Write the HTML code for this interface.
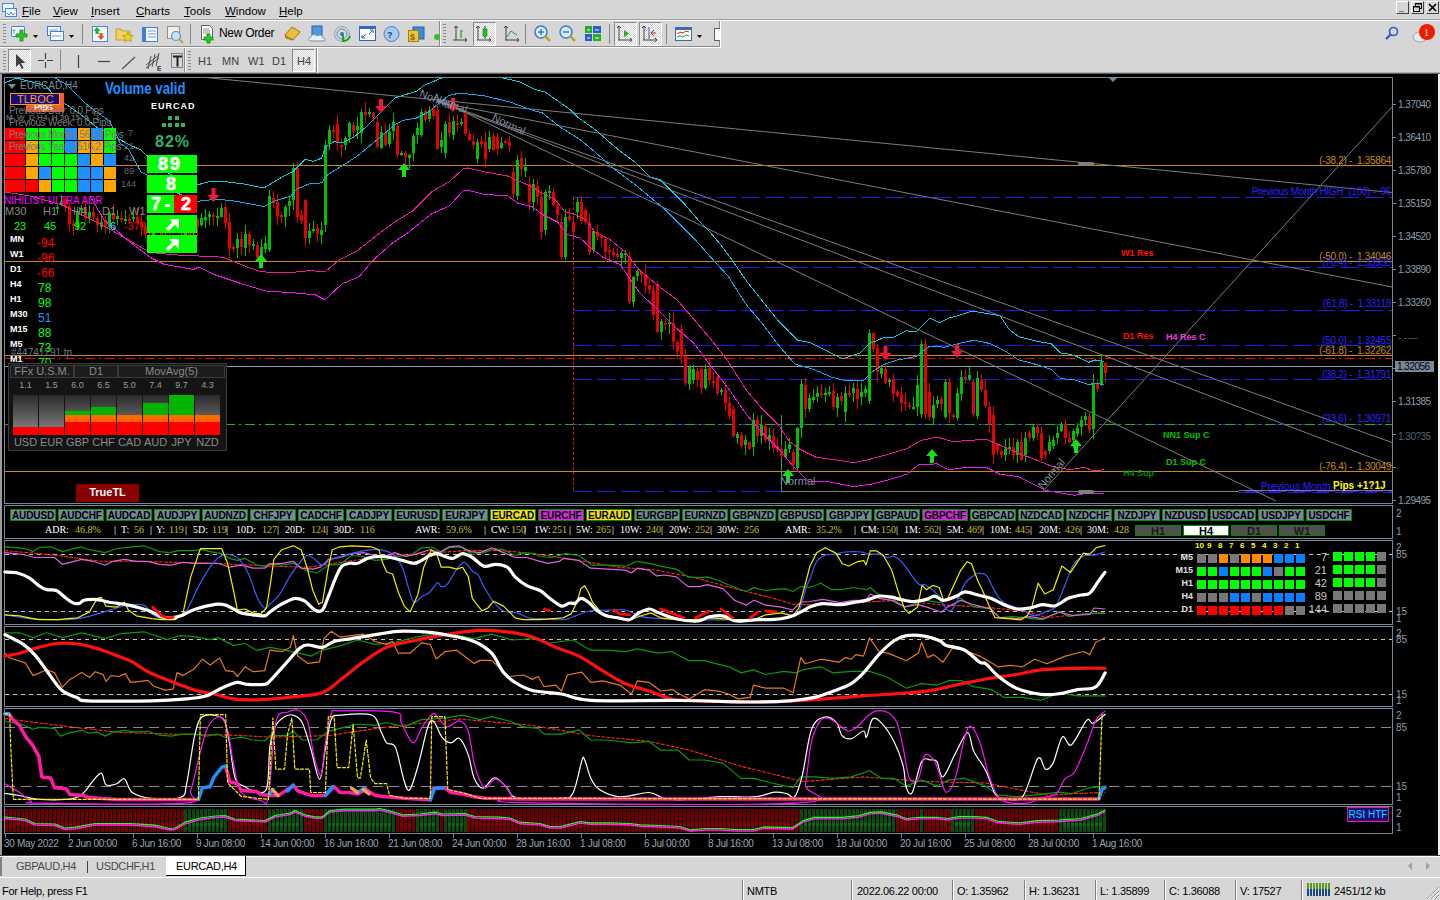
<!DOCTYPE html>
<html><head><meta charset="utf-8"><style>
*{margin:0;padding:0}
html,body{width:1440px;height:900px;overflow:hidden;background:#d6d6d6;position:relative;font-family:"Liberation Sans",sans-serif}
.mt{position:absolute;font-size:11.5px;line-height:14px;color:#000;white-space:nowrap}
.st{position:absolute;font-size:11px;line-height:14px;white-space:nowrap;letter-spacing:-0.3px}
.t{position:absolute;white-space:nowrap;line-height:1}
</style></head>
<body>
<div style="position:absolute;left:0;top:0;width:1440px;height:19px;background:#d6d6d6"></div>
<div style="position:absolute;left:0;top:19px;width:1440px;height:1px;background:#a0a0a0"></div>
<div style="position:absolute;left:0;top:20px;width:1440px;height:1px;background:#ffffff"></div>
<svg style="position:absolute;left:1px;top:2px" width="17" height="16"><rect x="1.5" y="1.5" width="11" height="8" fill="#eaf2fb" stroke="#4a8ad8"/><rect x="4.5" y="6.5" width="11" height="8" fill="#eaf2fb" stroke="#4a8ad8"/><path d="M6 11 l2 2 l2 -3 l2 3 l2 -2" stroke="#4a8ad8" fill="none"/></svg>
<div class="mt" style="left:22px;top:4px"><u>F</u>ile</div>
<div class="mt" style="left:53px;top:4px"><u>V</u>iew</div>
<div class="mt" style="left:91px;top:4px"><u>I</u>nsert</div>
<div class="mt" style="left:136px;top:4px"><u>C</u>harts</div>
<div class="mt" style="left:184px;top:4px"><u>T</u>ools</div>
<div class="mt" style="left:225px;top:4px"><u>W</u>indow</div>
<div class="mt" style="left:279px;top:4px"><u>H</u>elp</div>
<div style="position:absolute;left:1396px;top:1px;width:13px;height:13px;background:#d6d6d6;border:1px solid #404040;border-top-color:#fff;border-left-color:#fff;box-sizing:border-box"></div>
<div style="position:absolute;left:1411px;top:1px;width:13px;height:13px;background:#d6d6d6;border:1px solid #404040;border-top-color:#fff;border-left-color:#fff;box-sizing:border-box"></div>
<div style="position:absolute;left:1426px;top:1px;width:13px;height:13px;background:#d6d6d6;border:1px solid #404040;border-top-color:#fff;border-left-color:#fff;box-sizing:border-box"></div>
<div style="position:absolute;left:1399px;top:11px;width:5px;height:1px;background:#808080"></div>
<svg style="position:absolute;left:1411px;top:1px" width="13" height="13"><rect x="4.5" y="2.5" width="6" height="5" fill="none" stroke="#000"/><rect x="2.5" y="5.5" width="6" height="5" fill="#d6d6d6" stroke="#000"/><line x1="4" y1="3" x2="11" y2="3" stroke="#000"/><line x1="2" y1="6" x2="9" y2="6" stroke="#000"/></svg>
<svg style="position:absolute;left:1426px;top:1px" width="13" height="13"><path d="M3 3 L10 10 M10 3 L3 10" stroke="#000" stroke-width="1.6"/></svg>
<div style="position:absolute;left:0;top:21px;width:1440px;height:53px;background:#d6d6d6"></div>
<div style="position:absolute;left:0;top:46px;width:719px;height:1px;background:#8a8a8a"></div>
<div style="position:absolute;left:0;top:47px;width:720px;height:1px;background:#ffffff"></div>
<div style="position:absolute;left:0;top:72px;width:1440px;height:1px;background:#b0b0b0"></div>
<div style="position:absolute;left:0;top:73px;width:1440px;height:1px;background:#606060"></div>
<div style="position:absolute;left:719px;top:21px;width:1px;height:26px;background:#8a8a8a"></div>
<div style="position:absolute;left:720px;top:21px;width:1px;height:27px;background:#fff"></div>
<div style="position:absolute;left:316px;top:48px;width:1px;height:25px;background:#8a8a8a"></div>
<div style="position:absolute;left:317px;top:48px;width:1px;height:25px;background:#fff"></div>
<div style="position:absolute;left:439px;top:21px;width:1px;height:25px;background:#8a8a8a"></div>
<div style="position:absolute;left:440px;top:21px;width:1px;height:25px;background:#fff"></div>
<div style="position:absolute;left:184px;top:48px;width:1px;height:24px;background:#8a8a8a"></div>
<div style="position:absolute;left:185px;top:48px;width:1px;height:24px;background:#fff"></div>
<div style="position:absolute;left:3px;top:24px;width:3px;height:1px;background:#8c8c8c"></div>
<div style="position:absolute;left:3px;top:27px;width:3px;height:1px;background:#8c8c8c"></div>
<div style="position:absolute;left:3px;top:30px;width:3px;height:1px;background:#8c8c8c"></div>
<div style="position:absolute;left:3px;top:33px;width:3px;height:1px;background:#8c8c8c"></div>
<div style="position:absolute;left:3px;top:36px;width:3px;height:1px;background:#8c8c8c"></div>
<div style="position:absolute;left:3px;top:39px;width:3px;height:1px;background:#8c8c8c"></div>
<div style="position:absolute;left:3px;top:42px;width:3px;height:1px;background:#8c8c8c"></div>
<div style="position:absolute;left:443px;top:24px;width:3px;height:1px;background:#8c8c8c"></div>
<div style="position:absolute;left:443px;top:27px;width:3px;height:1px;background:#8c8c8c"></div>
<div style="position:absolute;left:443px;top:30px;width:3px;height:1px;background:#8c8c8c"></div>
<div style="position:absolute;left:443px;top:33px;width:3px;height:1px;background:#8c8c8c"></div>
<div style="position:absolute;left:443px;top:36px;width:3px;height:1px;background:#8c8c8c"></div>
<div style="position:absolute;left:443px;top:39px;width:3px;height:1px;background:#8c8c8c"></div>
<div style="position:absolute;left:443px;top:42px;width:3px;height:1px;background:#8c8c8c"></div>
<div style="position:absolute;left:3px;top:51px;width:3px;height:1px;background:#8c8c8c"></div>
<div style="position:absolute;left:3px;top:54px;width:3px;height:1px;background:#8c8c8c"></div>
<div style="position:absolute;left:3px;top:57px;width:3px;height:1px;background:#8c8c8c"></div>
<div style="position:absolute;left:3px;top:60px;width:3px;height:1px;background:#8c8c8c"></div>
<div style="position:absolute;left:3px;top:63px;width:3px;height:1px;background:#8c8c8c"></div>
<div style="position:absolute;left:3px;top:66px;width:3px;height:1px;background:#8c8c8c"></div>
<div style="position:absolute;left:3px;top:69px;width:3px;height:1px;background:#8c8c8c"></div>
<div style="position:absolute;left:188px;top:51px;width:3px;height:1px;background:#8c8c8c"></div>
<div style="position:absolute;left:188px;top:54px;width:3px;height:1px;background:#8c8c8c"></div>
<div style="position:absolute;left:188px;top:57px;width:3px;height:1px;background:#8c8c8c"></div>
<div style="position:absolute;left:188px;top:60px;width:3px;height:1px;background:#8c8c8c"></div>
<div style="position:absolute;left:188px;top:63px;width:3px;height:1px;background:#8c8c8c"></div>
<div style="position:absolute;left:188px;top:66px;width:3px;height:1px;background:#8c8c8c"></div>
<div style="position:absolute;left:188px;top:69px;width:3px;height:1px;background:#8c8c8c"></div>
<div style="position:absolute;left:82px;top:24px;width:1px;height:20px;background:#888"></div>
<div style="position:absolute;left:190px;top:24px;width:1px;height:20px;background:#888"></div>
<div style="position:absolute;left:525px;top:24px;width:1px;height:20px;background:#888"></div>
<div style="position:absolute;left:609px;top:24px;width:1px;height:20px;background:#888"></div>
<div style="position:absolute;left:666px;top:24px;width:1px;height:20px;background:#888"></div>
<div style="position:absolute;left:60px;top:50px;width:1px;height:20px;background:#888"></div>
<div style="position:absolute;left:473px;top:22px;width:23px;height:24px;box-sizing:border-box;border:1px solid #fff;border-top-color:#8a8a8a;border-left-color:#8a8a8a;background:repeating-conic-gradient(#d4d4d4 0 25%,#fafafa 0 50%) 0 0/2px 2px"></div>
<div style="position:absolute;left:614px;top:22px;width:23px;height:24px;box-sizing:border-box;border:1px solid #fff;border-top-color:#8a8a8a;border-left-color:#8a8a8a;background:repeating-conic-gradient(#d4d4d4 0 25%,#fafafa 0 50%) 0 0/2px 2px"></div>
<div style="position:absolute;left:639px;top:22px;width:23px;height:24px;box-sizing:border-box;border:1px solid #fff;border-top-color:#8a8a8a;border-left-color:#8a8a8a;background:repeating-conic-gradient(#d4d4d4 0 25%,#fafafa 0 50%) 0 0/2px 2px"></div>
<div style="position:absolute;left:8px;top:49px;width:23px;height:23px;box-sizing:border-box;border:1px solid #fff;border-top-color:#8a8a8a;border-left-color:#8a8a8a;background:repeating-conic-gradient(#d4d4d4 0 25%,#fafafa 0 50%) 0 0/2px 2px"></div>
<div style="position:absolute;left:292px;top:49px;width:23px;height:23px;box-sizing:border-box;border:1px solid #fff;border-top-color:#8a8a8a;border-left-color:#8a8a8a;background:repeating-conic-gradient(#d4d4d4 0 25%,#fafafa 0 50%) 0 0/2px 2px"></div>

<svg style="position:absolute;left:0;top:21px" width="720" height="26">
 <!-- new chart -->
 <rect x="11.5" y="5.5" width="13" height="10" rx="1" fill="#f4f8fd" stroke="#3d7fd0"/>
 <path d="M14 8v5 M12.5 9.5h3" stroke="#7a9cc0"/>
 <path d="M20 9h3v4h4v3h-4v4h-3v-4h-4v-3h4z" fill="#22cc22" stroke="#118811" stroke-width="0.8"/>
 <path d="M33 14h5l-2.5 3z" fill="#000"/>
 <!-- profiles -->
 <rect x="47.5" y="5.5" width="13" height="9" fill="#f4f8fd" stroke="#3d7fd0"/>
 <rect x="50.5" y="10.5" width="13" height="9" fill="#f4f8fd" stroke="#3d7fd0"/>
 <path d="M50 9h8 M52 15h9" stroke="#7a9cc0"/>
 <path d="M69 14h5l-2.5 3z" fill="#000"/>
 <!-- market watch -->
 <rect x="92.5" y="5.5" width="15" height="15" fill="#f4f8fd" stroke="#4a8ad8"/>
 <path d="M97 6l3.5 4h-2v3h-3v-3h-2z" fill="#20b020"/>
 <path d="M101 19l-3.5-4h2v-3h3v3h2z" fill="#e85020"/>
 <!-- folder star -->
 <path d="M116 8h5l1 2h8v9h-14z" fill="#f0d060" stroke="#c0a030"/>
 <path d="M128 11l1.6 3.4 3.6.4-2.7 2.4.8 3.6-3.3-1.9-3.3 1.9.8-3.6-2.7-2.4 3.6-.4z" fill="#f8d020" stroke="#b08810" stroke-width="0.7"/>
 <!-- navigator -->
 <rect x="142.5" y="6.5" width="15" height="14" fill="#f4f8fd" stroke="#3d7fd0"/>
 <rect x="143" y="7" width="3" height="13" fill="#3d7fd0"/>
 <path d="M148 10h8 M148 13h8 M148 16h8" stroke="#7a9cc0"/>
 <!-- terminal search -->
 <rect x="167.5" y="5.5" width="12" height="12" fill="#f0f0e8" stroke="#a09070"/>
 <circle cx="176" cy="15" r="4.5" fill="#c8e0f8" stroke="#4a8ad8" stroke-width="1.2"/>
 <path d="M179 18l4 4" stroke="#c0a030" stroke-width="2"/>
 <!-- new order -->
 <path d="M201.5 4.5h8l3 3v11h-11z" fill="#fff" stroke="#606060"/>
 <path d="M203 8h6 M203 10h7 M203 12h7" stroke="#909090"/>
 <path d="M207 13h3v3h3v3h-3v3h-3v-3h-3v-3h3z" fill="#22cc22" stroke="#118811" stroke-width="0.8"/>
 <!-- metaeditor -->
 <path d="M285 14l7-8 8 5-7 8z" fill="#e8c040" stroke="#a07010"/>
 <path d="M285 14l1 3 7 2" stroke="#a07010" fill="#c89820"/>
 <!-- cloud -->
 <rect x="312" y="5" width="10" height="10" fill="#4a9ae0" stroke="#2060b0"/>
 <path d="M311 20c-3 0-3-4 0-4c0-3 5-3 6-1c2-2 6-1 6 2c3 0 3 3 0 3z" fill="#e8f0f8" stroke="#7090b0"/>
 <!-- signal -->
 <circle cx="342" cy="13" r="7.5" fill="none" stroke="#80a8d0"/>
 <circle cx="342" cy="13" r="5" fill="none" stroke="#5a90c8"/>
 <circle cx="342" cy="13" r="2" fill="#2a70c0"/>
 <path d="M343 14v6c3 0 6-2 7-5" fill="none" stroke="#20a020" stroke-width="2"/>
 <!-- expand -->
 <rect x="359.5" y="5.5" width="16" height="14" fill="#fff" stroke="#2a6ac0"/>
 <rect x="360" y="6" width="15" height="2" fill="#2a6ac0"/>
 <path d="M362 17l4-4 M362 17h3 M362 17v-3 M373 9l-4 4 M373 9h-3 M373 9v3" stroke="#2a6ac0"/>
 <!-- help -->
 <circle cx="391.5" cy="13" r="7.5" fill="#a8c8f0" stroke="#4a80c0"/>
 <text x="387" y="17" font-family="Liberation Sans" font-size="9" font-weight="bold" fill="#1a3a80">?</text>
 <!-- dollar -->
 <rect x="413" y="6" width="11" height="12" fill="#3a8ae0" stroke="#2060b0"/>
 <rect x="408.5" y="9.5" width="10" height="11" fill="#f0c830" stroke="#a08010"/>
 <text x="410" y="19" font-family="Liberation Sans" font-size="9" font-weight="bold" fill="#806010">$</text>
 <circle cx="437" cy="16" r="3" fill="#30c030"/>
 <!-- bar chart -->
 <path d="M456 5v14 M454 7l2-2 2 2 M453 19h14 M465 17l2 2-2 2" stroke="#404040" fill="none"/>
 <path d="M461 9v8 M461 10h2" stroke="#20a020" stroke-width="1.2"/>
 <!-- candles -->
 <path d="M478 5v14 M476 7l2-2 2 2 M477 19h14 M489 17l2 2-2 2" stroke="#404040" fill="none"/>
 <path d="M485 5v13" stroke="#303030"/><rect x="483" y="8" width="4" height="7" fill="#20c020" stroke="#108010" stroke-width="0.6"/>
 <!-- line chart -->
 <path d="M506 5v14 M504 7l2-2 2 2 M505 19h14 M517 17l2 2-2 2" stroke="#404040" fill="none"/>
 <path d="M507 16l4-6 3 2 3 2" stroke="#20a020" fill="none"/>
 <!-- zoom in/out -->
 <circle cx="541" cy="11" r="6" fill="#d8ecfc" stroke="#3a7ad0" stroke-width="1.5"/>
 <path d="M538 11h6 M541 8v6" stroke="#3a7ad0" stroke-width="1.5"/>
 <path d="M545 15l5 5" stroke="#c0a030" stroke-width="2.5"/>
 <circle cx="566" cy="11" r="6" fill="#d8ecfc" stroke="#3a7ad0" stroke-width="1.5"/>
 <path d="M563 11h6" stroke="#3a7ad0" stroke-width="1.5"/>
 <path d="M570 15l5 5" stroke="#c0a030" stroke-width="2.5"/>
 <!-- tile -->
 <rect x="585" y="5" width="7" height="7" fill="#20b020"/><rect x="593" y="5" width="8" height="7" fill="#2a5ad0"/>
 <rect x="585" y="13" width="7" height="7" fill="#2a5ad0"/><rect x="593" y="13" width="8" height="7" fill="#20b020"/>
 <path d="M587 9h3 M595 9h4 M587 17h3 M595 17h4" stroke="#fff"/>
 <!-- autoscroll -->
 <path d="M619 5v14 M617 7l2-2 2 2 M618 19h14 M630 17l2 2-2 2" stroke="#404040" fill="none"/>
 <path d="M624 9v7l5-3.5z" fill="#20b020"/>
 <path d="M644 5v14 M642 7l2-2 2 2 M643 19h14 M655 17l2 2-2 2" stroke="#404040" fill="none"/>
 <path d="M649 6v12" stroke="#2a5ad0"/><path d="M651 12h5 M651 12l3-3 M651 12l3 3" stroke="#d02020"/>
 <!-- indicators -->
 <rect x="675.5" y="6.5" width="16" height="13" fill="#fff" stroke="#3a6ab0"/>
 <rect x="676" y="7" width="15" height="2" fill="#3a6ab0"/>
 <path d="M677 13l3-2 3 1 3-2 3 1" stroke="#d02020" fill="none"/><path d="M677 16l3-1 3 1 3-2 3 1" stroke="#20a020" fill="none"/>
 <path d="M697 14h5l-2.5 3z" fill="#000"/>
 <rect x="714.5" y="7.5" width="6" height="12" fill="#f8f8f8" stroke="#606060"/>
</svg>
<svg style="position:absolute;left:0;top:48px" width="330" height="24">
 <path d="M16 6v13l3.2-3.2 2.6 5.2 1.8-.9-2.6-5.1h4.5z" fill="#404040"/>
 <path d="M45.5 5v6 M45.5 14v6 M38 12.5h6 M47 12.5h6" stroke="#404040" stroke-width="1.2"/>
 <path d="M78.5 7v13" stroke="#404040" stroke-width="1.2"/>
 <path d="M98 13.5h12" stroke="#404040" stroke-width="1.2"/>
 <path d="M122 21l13-12" stroke="#505050" stroke-width="1.2"/>
 <path d="M146 17l13-10 M146 20l13-10 M151 8l-3 13 M155 6l-3 13 M159 5l-3 13" stroke="#404040" stroke-width="0.9"/>
 <text x="157" y="23" font-family="Liberation Sans" font-size="6.5" font-weight="bold" fill="#303030">E</text>
 <rect x="171.5" y="5.5" width="11" height="14" fill="none" stroke="#303030" stroke-dasharray="1 1"/>
 <path d="M173 8.5h9 M177.5 8.5v10" stroke="#202020" stroke-width="2" fill="none"/>
</svg>

<svg style="position:absolute;left:1384px;top:25px" width="16" height="16"><circle cx="9.5" cy="6.5" r="4" fill="none" stroke="#2a5ad8" stroke-width="1.6"/><path d="M7 9l-5 5" stroke="#2a5ad8" stroke-width="2.4"/></svg>
<svg style="position:absolute;left:1410px;top:22px" width="26" height="24"><ellipse cx="10" cy="15" rx="7" ry="5" fill="#e8e8f0" stroke="#a0a0a0"/><circle cx="17" cy="10" r="8" fill="#f01a00"/><text x="14" y="14" font-family="Liberation Serif" font-size="10" fill="#fff">1</text></svg>
<div class="mt" style="left:219px;top:26px;font-size:12px;letter-spacing:-0.3px">New Order</div>
<div class="mt" style="left:198px;top:54px;font-size:11px;color:#404040">H1</div>
<div class="mt" style="left:222px;top:54px;font-size:11px;color:#404040">MN</div>
<div class="mt" style="left:248px;top:54px;font-size:11px;color:#404040">W1</div>
<div class="mt" style="left:272px;top:54px;font-size:11px;color:#404040">D1</div>
<div class="mt" style="left:297px;top:54px;font-size:11px;color:#404040">H4</div>
<div style="position:absolute;left:2px;top:74px;width:1436px;height:781px;background:#000"></div>
<div style="position:absolute;left:0;top:74px;width:2px;height:782px;background:#9a9a9a"></div>
<div style="position:absolute;left:1438px;top:74px;width:2px;height:782px;background:#f0f0f0"></div>
<svg style="position:absolute;left:0;top:0" width="1440" height="900" shape-rendering="crispEdges"><rect x="4.5" y="77.5" width="1388" height="426" fill="none" stroke="#778899"/><rect x="4.5" y="505.5" width="1388" height="33" fill="none" stroke="#778899"/><rect x="4.5" y="540.5" width="1388" height="84" fill="none" stroke="#778899"/><rect x="4.5" y="626.5" width="1388" height="80" fill="none" stroke="#778899"/><rect x="4.5" y="708.5" width="1388" height="96" fill="none" stroke="#778899"/><rect x="4.5" y="806.5" width="1388" height="27" fill="none" stroke="#778899"/><line x1="5.5" y1="834" x2="5.5" y2="838" stroke="#778899"/><line x1="69.5" y1="834" x2="69.5" y2="838" stroke="#778899"/><line x1="133.5" y1="834" x2="133.5" y2="838" stroke="#778899"/><line x1="197.5" y1="834" x2="197.5" y2="838" stroke="#778899"/><line x1="261.5" y1="834" x2="261.5" y2="838" stroke="#778899"/><line x1="325.5" y1="834" x2="325.5" y2="838" stroke="#778899"/><line x1="389.5" y1="834" x2="389.5" y2="838" stroke="#778899"/><line x1="453.5" y1="834" x2="453.5" y2="838" stroke="#778899"/><line x1="517.5" y1="834" x2="517.5" y2="838" stroke="#778899"/><line x1="581.5" y1="834" x2="581.5" y2="838" stroke="#778899"/><line x1="645.5" y1="834" x2="645.5" y2="838" stroke="#778899"/><line x1="709.5" y1="834" x2="709.5" y2="838" stroke="#778899"/><line x1="773.5" y1="834" x2="773.5" y2="838" stroke="#778899"/><line x1="837.5" y1="834" x2="837.5" y2="838" stroke="#778899"/><line x1="901.5" y1="834" x2="901.5" y2="838" stroke="#778899"/><line x1="965.5" y1="834" x2="965.5" y2="838" stroke="#778899"/><line x1="1029.5" y1="834" x2="1029.5" y2="838" stroke="#778899"/><line x1="1093.5" y1="834" x2="1093.5" y2="838" stroke="#778899"/><line x1="1393" y1="104.5" x2="1396" y2="104.5" stroke="#778899"/><line x1="1393" y1="137.5" x2="1396" y2="137.5" stroke="#778899"/><line x1="1393" y1="170.5" x2="1396" y2="170.5" stroke="#778899"/><line x1="1393" y1="203.5" x2="1396" y2="203.5" stroke="#778899"/><line x1="1393" y1="236.5" x2="1396" y2="236.5" stroke="#778899"/><line x1="1393" y1="269.5" x2="1396" y2="269.5" stroke="#778899"/><line x1="1393" y1="302.5" x2="1396" y2="302.5" stroke="#778899"/><line x1="1393" y1="335.5" x2="1396" y2="335.5" stroke="#778899"/><line x1="1393" y1="368.5" x2="1396" y2="368.5" stroke="#778899"/><line x1="1393" y1="401.5" x2="1396" y2="401.5" stroke="#778899"/><line x1="1393" y1="434.5" x2="1396" y2="434.5" stroke="#778899"/><line x1="1393" y1="467.5" x2="1396" y2="467.5" stroke="#778899"/><line x1="1393" y1="500.5" x2="1396" y2="500.5" stroke="#778899"/><line x1="5" y1="165.5" x2="1392" y2="165.5" stroke="#c88a18"/><line x1="5" y1="261.5" x2="1392" y2="261.5" stroke="#c88a18"/><line x1="5" y1="355.5" x2="1392" y2="355.5" stroke="#c88a18"/><line x1="5" y1="471.5" x2="1392" y2="471.5" stroke="#c88a18"/><line x1="5" y1="358.5" x2="1392" y2="358.5" stroke="#ee1010" stroke-dasharray="10 4 2 4"/><line x1="5" y1="366.5" x2="1392" y2="366.5" stroke="#8a96a6"/><line x1="573" y1="197.5" x2="1392" y2="197.5" stroke="#2a14f0" stroke-dasharray="18 6"/><line x1="573" y1="267.5" x2="1392" y2="267.5" stroke="#2a14f0" stroke-dasharray="18 6"/><line x1="573" y1="310.5" x2="1392" y2="310.5" stroke="#2a14f0" stroke-dasharray="18 6"/><line x1="573" y1="345.5" x2="1392" y2="345.5" stroke="#2a14f0" stroke-dasharray="18 6"/><line x1="573" y1="379.5" x2="1392" y2="379.5" stroke="#2a14f0" stroke-dasharray="18 6"/><line x1="573" y1="424.5" x2="1392" y2="424.5" stroke="#2a14f0" stroke-dasharray="18 6"/><line x1="573" y1="491.5" x2="1392" y2="491.5" stroke="#2a14f0" stroke-dasharray="18 6"/><line x1="5" y1="424.5" x2="1392" y2="424.5" stroke="#10c010" stroke-dasharray="10 4 2 4"/><line x1="781" y1="491.5" x2="1239" y2="491.5" stroke="#7c7c7c"/><line x1="1239" y1="490.5" x2="1392" y2="490.5" stroke="#7c7c7c"/><line x1="1239" y1="492.5" x2="1392" y2="492.5" stroke="#2a14f0" stroke-dasharray="18 6"/><line x1="781.5" y1="415" x2="781.5" y2="492" stroke="#5a8a5a"/><line x1="573.5" y1="197" x2="573.5" y2="492" stroke="#e01010" stroke-dasharray="3 2"/><line x1="205" y1="77.5" x2="1392" y2="192.5" stroke="#7c7c7c" shape-rendering="auto"/><line x1="437" y1="102" x2="1392" y2="287" stroke="#7c7c7c" shape-rendering="auto"/><line x1="437" y1="101" x2="1392" y2="442.5" stroke="#7c7c7c" shape-rendering="auto"/><line x1="437" y1="101" x2="1392" y2="465.5" stroke="#7c7c7c" shape-rendering="auto"/><line x1="437" y1="99" x2="1276" y2="501" stroke="#7c7c7c" shape-rendering="auto"/><line x1="1043" y1="491" x2="1392" y2="107" stroke="#7c7c7c" shape-rendering="auto"/><rect x="57" y="205" width="1" height="9" fill="#00c000"/><rect x="56" y="207" width="3" height="2" fill="#00c000"/><rect x="61" y="195" width="1" height="11" fill="#00c000"/><rect x="60" y="201" width="3" height="4" fill="#00c000"/><rect x="65" y="197" width="1" height="15" fill="#e60000"/><rect x="64" y="199" width="3" height="8" fill="#e60000"/><rect x="69" y="203" width="1" height="28" fill="#e60000"/><rect x="68" y="206" width="3" height="18" fill="#e60000"/><rect x="73" y="220" width="1" height="16" fill="#e60000"/><rect x="72" y="224" width="3" height="2" fill="#e60000"/><rect x="77" y="207" width="1" height="23" fill="#00c000"/><rect x="76" y="211" width="3" height="17" fill="#00c000"/><rect x="81" y="205" width="1" height="11" fill="#00c000"/><rect x="80" y="208" width="3" height="2" fill="#00c000"/><rect x="85" y="202" width="1" height="19" fill="#e60000"/><rect x="84" y="207" width="3" height="11" fill="#e60000"/><rect x="89" y="205" width="1" height="18" fill="#00c000"/><rect x="88" y="212" width="3" height="6" fill="#00c000"/><rect x="93" y="207" width="1" height="13" fill="#e60000"/><rect x="92" y="212" width="3" height="5" fill="#e60000"/><rect x="97" y="215" width="1" height="17" fill="#e60000"/><rect x="96" y="218" width="3" height="7" fill="#e60000"/><rect x="101" y="214" width="1" height="16" fill="#00c000"/><rect x="100" y="222" width="3" height="5" fill="#00c000"/><rect x="105" y="216" width="1" height="18" fill="#e60000"/><rect x="104" y="220" width="3" height="6" fill="#e60000"/><rect x="109" y="211" width="1" height="22" fill="#00c000"/><rect x="108" y="213" width="3" height="14" fill="#00c000"/><rect x="113" y="204" width="1" height="19" fill="#e60000"/><rect x="112" y="213" width="3" height="6" fill="#e60000"/><rect x="117" y="210" width="1" height="15" fill="#00c000"/><rect x="116" y="216" width="3" height="3" fill="#00c000"/><rect x="121" y="211" width="1" height="11" fill="#e60000"/><rect x="120" y="218" width="3" height="2" fill="#e60000"/><rect x="125" y="210" width="1" height="14" fill="#00c000"/><rect x="124" y="219" width="3" height="2" fill="#00c000"/><rect x="129" y="214" width="1" height="10" fill="#e60000"/><rect x="128" y="219" width="3" height="2" fill="#e60000"/><rect x="133" y="209" width="1" height="13" fill="#00c000"/><rect x="132" y="217" width="3" height="2" fill="#00c000"/><rect x="137" y="208" width="1" height="16" fill="#e60000"/><rect x="136" y="217" width="3" height="5" fill="#e60000"/><rect x="141" y="213" width="1" height="23" fill="#e60000"/><rect x="140" y="222" width="3" height="5" fill="#e60000"/><rect x="145" y="222" width="1" height="16" fill="#e60000"/><rect x="144" y="227" width="3" height="7" fill="#e60000"/><rect x="149" y="233" width="1" height="8" fill="#e60000"/><rect x="148" y="236" width="3" height="2" fill="#e60000"/><rect x="153" y="221" width="1" height="21" fill="#00c000"/><rect x="152" y="227" width="3" height="11" fill="#00c000"/><rect x="157" y="220" width="1" height="13" fill="#00c000"/><rect x="156" y="224" width="3" height="2" fill="#00c000"/><rect x="161" y="220" width="1" height="26" fill="#e60000"/><rect x="160" y="225" width="3" height="14" fill="#e60000"/><rect x="165" y="227" width="1" height="19" fill="#00c000"/><rect x="164" y="235" width="3" height="2" fill="#00c000"/><rect x="169" y="230" width="1" height="12" fill="#e60000"/><rect x="168" y="235" width="3" height="5" fill="#e60000"/><rect x="173" y="235" width="1" height="7" fill="#e60000"/><rect x="172" y="238" width="3" height="2" fill="#e60000"/><rect x="177" y="236" width="1" height="6" fill="#e60000"/><rect x="176" y="238" width="3" height="2" fill="#e60000"/><rect x="181" y="230" width="1" height="11" fill="#00c000"/><rect x="180" y="236" width="3" height="2" fill="#00c000"/><rect x="185" y="227" width="1" height="11" fill="#00c000"/><rect x="184" y="231" width="3" height="4" fill="#00c000"/><rect x="189" y="228" width="1" height="13" fill="#e60000"/><rect x="188" y="233" width="3" height="2" fill="#e60000"/><rect x="193" y="216" width="1" height="21" fill="#00c000"/><rect x="192" y="220" width="3" height="13" fill="#00c000"/><rect x="197" y="218" width="1" height="18" fill="#e60000"/><rect x="196" y="219" width="3" height="8" fill="#e60000"/><rect x="201" y="213" width="1" height="14" fill="#00c000"/><rect x="200" y="218" width="3" height="7" fill="#00c000"/><rect x="205" y="209" width="1" height="19" fill="#00c000"/><rect x="204" y="217" width="3" height="3" fill="#00c000"/><rect x="209" y="211" width="1" height="14" fill="#00c000"/><rect x="208" y="214" width="3" height="3" fill="#00c000"/><rect x="213" y="212" width="1" height="13" fill="#e60000"/><rect x="212" y="215" width="3" height="2" fill="#e60000"/><rect x="217" y="208" width="1" height="18" fill="#00c000"/><rect x="216" y="216" width="3" height="2" fill="#00c000"/><rect x="221" y="203" width="1" height="14" fill="#00c000"/><rect x="220" y="208" width="3" height="9" fill="#00c000"/><rect x="225" y="203" width="1" height="26" fill="#e60000"/><rect x="224" y="207" width="3" height="16" fill="#e60000"/><rect x="229" y="213" width="1" height="45" fill="#e60000"/><rect x="228" y="222" width="3" height="26" fill="#e60000"/><rect x="233" y="244" width="1" height="8" fill="#e60000"/><rect x="232" y="247" width="3" height="2" fill="#e60000"/><rect x="237" y="233" width="1" height="25" fill="#00c000"/><rect x="236" y="239" width="3" height="9" fill="#00c000"/><rect x="241" y="232" width="1" height="23" fill="#e60000"/><rect x="240" y="239" width="3" height="8" fill="#e60000"/><rect x="245" y="225" width="1" height="31" fill="#00c000"/><rect x="244" y="234" width="3" height="14" fill="#00c000"/><rect x="249" y="231" width="1" height="22" fill="#e60000"/><rect x="248" y="234" width="3" height="11" fill="#e60000"/><rect x="253" y="239" width="1" height="11" fill="#00c000"/><rect x="252" y="244" width="3" height="2" fill="#00c000"/><rect x="257" y="242" width="1" height="18" fill="#e60000"/><rect x="256" y="245" width="3" height="13" fill="#e60000"/><rect x="261" y="239" width="1" height="23" fill="#00c000"/><rect x="260" y="247" width="3" height="13" fill="#00c000"/><rect x="265" y="236" width="1" height="17" fill="#00c000"/><rect x="264" y="243" width="3" height="6" fill="#00c000"/><rect x="269" y="190" width="1" height="62" fill="#00c000"/><rect x="268" y="196" width="3" height="54" fill="#00c000"/><rect x="273" y="191" width="1" height="17" fill="#e60000"/><rect x="272" y="198" width="3" height="5" fill="#e60000"/><rect x="277" y="194" width="1" height="31" fill="#e60000"/><rect x="276" y="202" width="3" height="14" fill="#e60000"/><rect x="281" y="212" width="1" height="11" fill="#e60000"/><rect x="280" y="215" width="3" height="2" fill="#e60000"/><rect x="285" y="205" width="1" height="22" fill="#00c000"/><rect x="284" y="207" width="3" height="10" fill="#00c000"/><rect x="289" y="195" width="1" height="21" fill="#00c000"/><rect x="288" y="201" width="3" height="5" fill="#00c000"/><rect x="293" y="163" width="1" height="47" fill="#00c000"/><rect x="292" y="168" width="3" height="32" fill="#00c000"/><rect x="297" y="162" width="1" height="61" fill="#e60000"/><rect x="296" y="168" width="3" height="49" fill="#e60000"/><rect x="301" y="210" width="1" height="14" fill="#e60000"/><rect x="300" y="215" width="3" height="6" fill="#e60000"/><rect x="305" y="199" width="1" height="47" fill="#e60000"/><rect x="304" y="200" width="3" height="38" fill="#e60000"/><rect x="309" y="223" width="1" height="21" fill="#00c000"/><rect x="308" y="231" width="3" height="7" fill="#00c000"/><rect x="313" y="221" width="1" height="12" fill="#00c000"/><rect x="312" y="229" width="3" height="2" fill="#00c000"/><rect x="317" y="224" width="1" height="18" fill="#e60000"/><rect x="316" y="228" width="3" height="6" fill="#e60000"/><rect x="321" y="222" width="1" height="22" fill="#00c000"/><rect x="320" y="230" width="3" height="5" fill="#00c000"/><rect x="325" y="140" width="1" height="92" fill="#00c000"/><rect x="324" y="145" width="3" height="80" fill="#00c000"/><rect x="329" y="125" width="1" height="25" fill="#00c000"/><rect x="328" y="130" width="3" height="14" fill="#00c000"/><rect x="333" y="125" width="1" height="13" fill="#e60000"/><rect x="332" y="130" width="3" height="2" fill="#e60000"/><rect x="337" y="115" width="1" height="36" fill="#e60000"/><rect x="336" y="124" width="3" height="19" fill="#e60000"/><rect x="341" y="139" width="1" height="18" fill="#e60000"/><rect x="340" y="145" width="3" height="2" fill="#e60000"/><rect x="345" y="136" width="1" height="14" fill="#00c000"/><rect x="344" y="138" width="3" height="7" fill="#00c000"/><rect x="349" y="121" width="1" height="22" fill="#00c000"/><rect x="348" y="123" width="3" height="14" fill="#00c000"/><rect x="353" y="122" width="1" height="16" fill="#e60000"/><rect x="352" y="125" width="3" height="6" fill="#e60000"/><rect x="357" y="117" width="1" height="22" fill="#00c000"/><rect x="356" y="126" width="3" height="4" fill="#00c000"/><rect x="361" y="109" width="1" height="34" fill="#00c000"/><rect x="360" y="112" width="3" height="21" fill="#00c000"/><rect x="365" y="102" width="1" height="21" fill="#e60000"/><rect x="364" y="112" width="3" height="3" fill="#e60000"/><rect x="369" y="108" width="1" height="9" fill="#00c000"/><rect x="368" y="112" width="3" height="2" fill="#00c000"/><rect x="373" y="112" width="1" height="11" fill="#e60000"/><rect x="372" y="113" width="3" height="4" fill="#e60000"/><rect x="377" y="117" width="1" height="31" fill="#e60000"/><rect x="376" y="122" width="3" height="25" fill="#e60000"/><rect x="381" y="126" width="1" height="23" fill="#00c000"/><rect x="380" y="132" width="3" height="16" fill="#00c000"/><rect x="385" y="123" width="1" height="24" fill="#e60000"/><rect x="384" y="133" width="3" height="12" fill="#e60000"/><rect x="389" y="124" width="1" height="23" fill="#00c000"/><rect x="388" y="132" width="3" height="12" fill="#00c000"/><rect x="393" y="113" width="1" height="27" fill="#00c000"/><rect x="392" y="122" width="3" height="9" fill="#00c000"/><rect x="397" y="123" width="1" height="35" fill="#e60000"/><rect x="396" y="126" width="3" height="29" fill="#e60000"/><rect x="401" y="151" width="1" height="5" fill="#00c000"/><rect x="400" y="153" width="3" height="2" fill="#00c000"/><rect x="405" y="151" width="1" height="15" fill="#e60000"/><rect x="404" y="153" width="3" height="4" fill="#e60000"/><rect x="409" y="154" width="1" height="14" fill="#00c000"/><rect x="408" y="155" width="3" height="3" fill="#00c000"/><rect x="413" y="134" width="1" height="27" fill="#00c000"/><rect x="412" y="136" width="3" height="17" fill="#00c000"/><rect x="417" y="122" width="1" height="22" fill="#00c000"/><rect x="416" y="128" width="3" height="7" fill="#00c000"/><rect x="421" y="109" width="1" height="28" fill="#00c000"/><rect x="420" y="112" width="3" height="23" fill="#00c000"/><rect x="425" y="109" width="1" height="14" fill="#e60000"/><rect x="424" y="111" width="3" height="9" fill="#e60000"/><rect x="429" y="106" width="1" height="16" fill="#00c000"/><rect x="428" y="110" width="3" height="9" fill="#00c000"/><rect x="433" y="104" width="1" height="15" fill="#e60000"/><rect x="432" y="109" width="3" height="7" fill="#e60000"/><rect x="437" y="106" width="1" height="44" fill="#e60000"/><rect x="436" y="110" width="3" height="39" fill="#e60000"/><rect x="441" y="132" width="1" height="21" fill="#00c000"/><rect x="440" y="140" width="3" height="7" fill="#00c000"/><rect x="445" y="121" width="1" height="37" fill="#00c000"/><rect x="444" y="124" width="3" height="29" fill="#00c000"/><rect x="449" y="114" width="1" height="24" fill="#e60000"/><rect x="448" y="122" width="3" height="11" fill="#e60000"/><rect x="453" y="116" width="1" height="24" fill="#00c000"/><rect x="452" y="121" width="3" height="14" fill="#00c000"/><rect x="457" y="114" width="1" height="18" fill="#e60000"/><rect x="456" y="123" width="3" height="2" fill="#e60000"/><rect x="461" y="118" width="1" height="8" fill="#00c000"/><rect x="460" y="122" width="3" height="2" fill="#00c000"/><rect x="465" y="112" width="1" height="24" fill="#e60000"/><rect x="464" y="114" width="3" height="20" fill="#e60000"/><rect x="469" y="131" width="1" height="10" fill="#e60000"/><rect x="468" y="134" width="3" height="6" fill="#e60000"/><rect x="473" y="134" width="1" height="15" fill="#e60000"/><rect x="472" y="141" width="3" height="4" fill="#e60000"/><rect x="477" y="139" width="1" height="24" fill="#00c000"/><rect x="476" y="142" width="3" height="17" fill="#00c000"/><rect x="481" y="136" width="1" height="12" fill="#e60000"/><rect x="480" y="141" width="3" height="3" fill="#e60000"/><rect x="485" y="132" width="1" height="36" fill="#e60000"/><rect x="484" y="142" width="3" height="17" fill="#e60000"/><rect x="489" y="131" width="1" height="21" fill="#00c000"/><rect x="488" y="137" width="3" height="12" fill="#00c000"/><rect x="493" y="132" width="1" height="19" fill="#e60000"/><rect x="492" y="136" width="3" height="14" fill="#e60000"/><rect x="497" y="133" width="1" height="22" fill="#e60000"/><rect x="496" y="137" width="3" height="12" fill="#e60000"/><rect x="501" y="137" width="1" height="12" fill="#00c000"/><rect x="500" y="143" width="3" height="5" fill="#00c000"/><rect x="505" y="140" width="1" height="5" fill="#e60000"/><rect x="504" y="141" width="3" height="2" fill="#e60000"/><rect x="509" y="136" width="1" height="16" fill="#e60000"/><rect x="508" y="142" width="3" height="4" fill="#e60000"/><rect x="513" y="164" width="1" height="37" fill="#e60000"/><rect x="512" y="172" width="3" height="22" fill="#e60000"/><rect x="517" y="155" width="1" height="45" fill="#00c000"/><rect x="516" y="160" width="3" height="36" fill="#00c000"/><rect x="521" y="151" width="1" height="25" fill="#e60000"/><rect x="520" y="158" width="3" height="11" fill="#e60000"/><rect x="525" y="158" width="1" height="19" fill="#00c000"/><rect x="524" y="167" width="3" height="4" fill="#00c000"/><rect x="529" y="177" width="1" height="33" fill="#e60000"/><rect x="528" y="184" width="3" height="18" fill="#e60000"/><rect x="533" y="179" width="1" height="32" fill="#00c000"/><rect x="532" y="184" width="3" height="18" fill="#00c000"/><rect x="537" y="179" width="1" height="26" fill="#e60000"/><rect x="536" y="186" width="3" height="11" fill="#e60000"/><rect x="541" y="190" width="1" height="49" fill="#e60000"/><rect x="540" y="197" width="3" height="35" fill="#e60000"/><rect x="545" y="190" width="1" height="45" fill="#00c000"/><rect x="544" y="192" width="3" height="38" fill="#00c000"/><rect x="549" y="185" width="1" height="15" fill="#00c000"/><rect x="548" y="191" width="3" height="2" fill="#00c000"/><rect x="553" y="187" width="1" height="19" fill="#e60000"/><rect x="552" y="192" width="3" height="13" fill="#e60000"/><rect x="557" y="200" width="1" height="21" fill="#e60000"/><rect x="556" y="206" width="3" height="9" fill="#e60000"/><rect x="561" y="215" width="1" height="44" fill="#e60000"/><rect x="560" y="222" width="3" height="35" fill="#e60000"/><rect x="565" y="209" width="1" height="51" fill="#00c000"/><rect x="564" y="217" width="3" height="40" fill="#00c000"/><rect x="569" y="208" width="1" height="14" fill="#e60000"/><rect x="568" y="216" width="3" height="4" fill="#e60000"/><rect x="573" y="216" width="1" height="20" fill="#e60000"/><rect x="572" y="222" width="3" height="10" fill="#e60000"/><rect x="577" y="197" width="1" height="22" fill="#00c000"/><rect x="576" y="202" width="3" height="10" fill="#00c000"/><rect x="581" y="196" width="1" height="28" fill="#e60000"/><rect x="580" y="202" width="3" height="19" fill="#e60000"/><rect x="585" y="207" width="1" height="18" fill="#e60000"/><rect x="584" y="210" width="3" height="12" fill="#e60000"/><rect x="589" y="214" width="1" height="41" fill="#e60000"/><rect x="588" y="222" width="3" height="30" fill="#e60000"/><rect x="593" y="229" width="1" height="24" fill="#00c000"/><rect x="592" y="231" width="3" height="19" fill="#00c000"/><rect x="597" y="225" width="1" height="15" fill="#e60000"/><rect x="596" y="232" width="3" height="5" fill="#e60000"/><rect x="601" y="234" width="1" height="13" fill="#e60000"/><rect x="600" y="236" width="3" height="2" fill="#e60000"/><rect x="605" y="236" width="1" height="26" fill="#e60000"/><rect x="604" y="239" width="3" height="13" fill="#e60000"/><rect x="609" y="245" width="1" height="16" fill="#e60000"/><rect x="608" y="250" width="3" height="2" fill="#e60000"/><rect x="613" y="248" width="1" height="9" fill="#e60000"/><rect x="612" y="252" width="3" height="3" fill="#e60000"/><rect x="617" y="248" width="1" height="11" fill="#e60000"/><rect x="616" y="254" width="3" height="3" fill="#e60000"/><rect x="621" y="251" width="1" height="16" fill="#00c000"/><rect x="620" y="253" width="3" height="5" fill="#00c000"/><rect x="625" y="250" width="1" height="14" fill="#00c000"/><rect x="624" y="253" width="3" height="2" fill="#00c000"/><rect x="629" y="252" width="1" height="52" fill="#e60000"/><rect x="628" y="257" width="3" height="45" fill="#e60000"/><rect x="633" y="276" width="1" height="31" fill="#00c000"/><rect x="632" y="277" width="3" height="25" fill="#00c000"/><rect x="637" y="269" width="1" height="12" fill="#00c000"/><rect x="636" y="271" width="3" height="5" fill="#00c000"/><rect x="641" y="271" width="1" height="12" fill="#e60000"/><rect x="640" y="272" width="3" height="3" fill="#e60000"/><rect x="645" y="264" width="1" height="29" fill="#e60000"/><rect x="644" y="274" width="3" height="12" fill="#e60000"/><rect x="649" y="280" width="1" height="14" fill="#e60000"/><rect x="648" y="285" width="3" height="5" fill="#e60000"/><rect x="653" y="285" width="1" height="35" fill="#e60000"/><rect x="652" y="290" width="3" height="25" fill="#e60000"/><rect x="657" y="281" width="1" height="52" fill="#e60000"/><rect x="656" y="284" width="3" height="48" fill="#e60000"/><rect x="661" y="319" width="1" height="21" fill="#00c000"/><rect x="660" y="321" width="3" height="11" fill="#00c000"/><rect x="665" y="319" width="1" height="11" fill="#e60000"/><rect x="664" y="323" width="3" height="2" fill="#e60000"/><rect x="669" y="313" width="1" height="21" fill="#00c000"/><rect x="668" y="322" width="3" height="2" fill="#00c000"/><rect x="673" y="313" width="1" height="37" fill="#e60000"/><rect x="672" y="323" width="3" height="19" fill="#e60000"/><rect x="677" y="341" width="1" height="18" fill="#e60000"/><rect x="676" y="342" width="3" height="9" fill="#e60000"/><rect x="681" y="324" width="1" height="40" fill="#e60000"/><rect x="680" y="329" width="3" height="27" fill="#e60000"/><rect x="685" y="349" width="1" height="37" fill="#e60000"/><rect x="684" y="356" width="3" height="27" fill="#e60000"/><rect x="689" y="365" width="1" height="25" fill="#00c000"/><rect x="688" y="367" width="3" height="17" fill="#00c000"/><rect x="693" y="365" width="1" height="19" fill="#00c000"/><rect x="692" y="369" width="3" height="11" fill="#00c000"/><rect x="697" y="368" width="1" height="19" fill="#e60000"/><rect x="696" y="371" width="3" height="9" fill="#e60000"/><rect x="701" y="365" width="1" height="29" fill="#e60000"/><rect x="700" y="369" width="3" height="19" fill="#e60000"/><rect x="705" y="364" width="1" height="26" fill="#00c000"/><rect x="704" y="369" width="3" height="19" fill="#00c000"/><rect x="709" y="359" width="1" height="26" fill="#e60000"/><rect x="708" y="368" width="3" height="12" fill="#e60000"/><rect x="713" y="371" width="1" height="17" fill="#e60000"/><rect x="712" y="381" width="3" height="2" fill="#e60000"/><rect x="717" y="375" width="1" height="21" fill="#e60000"/><rect x="716" y="377" width="3" height="16" fill="#e60000"/><rect x="721" y="388" width="1" height="7" fill="#00c000"/><rect x="720" y="390" width="3" height="2" fill="#00c000"/><rect x="725" y="381" width="1" height="30" fill="#e60000"/><rect x="724" y="390" width="3" height="13" fill="#e60000"/><rect x="729" y="397" width="1" height="23" fill="#e60000"/><rect x="728" y="403" width="3" height="13" fill="#e60000"/><rect x="733" y="405" width="1" height="33" fill="#e60000"/><rect x="732" y="409" width="3" height="27" fill="#e60000"/><rect x="737" y="432" width="1" height="12" fill="#00c000"/><rect x="736" y="434" width="3" height="4" fill="#00c000"/><rect x="741" y="432" width="1" height="17" fill="#e60000"/><rect x="740" y="435" width="3" height="11" fill="#e60000"/><rect x="745" y="435" width="1" height="20" fill="#00c000"/><rect x="744" y="440" width="3" height="5" fill="#00c000"/><rect x="749" y="441" width="1" height="9" fill="#e60000"/><rect x="748" y="442" width="3" height="7" fill="#e60000"/><rect x="753" y="413" width="1" height="43" fill="#00c000"/><rect x="752" y="420" width="3" height="27" fill="#00c000"/><rect x="757" y="415" width="1" height="28" fill="#e60000"/><rect x="756" y="420" width="3" height="16" fill="#e60000"/><rect x="761" y="415" width="1" height="29" fill="#00c000"/><rect x="760" y="425" width="3" height="11" fill="#00c000"/><rect x="765" y="423" width="1" height="20" fill="#e60000"/><rect x="764" y="426" width="3" height="14" fill="#e60000"/><rect x="769" y="428" width="1" height="22" fill="#00c000"/><rect x="768" y="435" width="3" height="6" fill="#00c000"/><rect x="773" y="428" width="1" height="25" fill="#e60000"/><rect x="772" y="436" width="3" height="12" fill="#e60000"/><rect x="777" y="438" width="1" height="14" fill="#e60000"/><rect x="776" y="446" width="3" height="3" fill="#e60000"/><rect x="781" y="445" width="1" height="13" fill="#e60000"/><rect x="780" y="449" width="3" height="7" fill="#e60000"/><rect x="785" y="441" width="1" height="17" fill="#00c000"/><rect x="784" y="449" width="3" height="8" fill="#00c000"/><rect x="789" y="438" width="1" height="15" fill="#00c000"/><rect x="788" y="444" width="3" height="5" fill="#00c000"/><rect x="793" y="449" width="1" height="22" fill="#e60000"/><rect x="792" y="452" width="3" height="13" fill="#e60000"/><rect x="797" y="427" width="1" height="45" fill="#00c000"/><rect x="796" y="428" width="3" height="40" fill="#00c000"/><rect x="801" y="379" width="1" height="59" fill="#00c000"/><rect x="800" y="384" width="3" height="44" fill="#00c000"/><rect x="805" y="378" width="1" height="40" fill="#e60000"/><rect x="804" y="385" width="3" height="24" fill="#e60000"/><rect x="809" y="393" width="1" height="19" fill="#00c000"/><rect x="808" y="398" width="3" height="11" fill="#00c000"/><rect x="813" y="389" width="1" height="14" fill="#00c000"/><rect x="812" y="397" width="3" height="3" fill="#00c000"/><rect x="817" y="386" width="1" height="16" fill="#00c000"/><rect x="816" y="393" width="3" height="4" fill="#00c000"/><rect x="821" y="384" width="1" height="14" fill="#e60000"/><rect x="820" y="393" width="3" height="2" fill="#e60000"/><rect x="825" y="388" width="1" height="14" fill="#00c000"/><rect x="824" y="393" width="3" height="2" fill="#00c000"/><rect x="829" y="386" width="1" height="10" fill="#00c000"/><rect x="828" y="392" width="3" height="2" fill="#00c000"/><rect x="833" y="383" width="1" height="27" fill="#e60000"/><rect x="832" y="391" width="3" height="16" fill="#e60000"/><rect x="837" y="393" width="1" height="24" fill="#00c000"/><rect x="836" y="397" width="3" height="11" fill="#00c000"/><rect x="841" y="392" width="1" height="13" fill="#e60000"/><rect x="840" y="396" width="3" height="5" fill="#e60000"/><rect x="845" y="386" width="1" height="36" fill="#00c000"/><rect x="844" y="393" width="3" height="19" fill="#00c000"/><rect x="849" y="383" width="1" height="14" fill="#e60000"/><rect x="848" y="393" width="3" height="2" fill="#e60000"/><rect x="853" y="383" width="1" height="19" fill="#00c000"/><rect x="852" y="388" width="3" height="5" fill="#00c000"/><rect x="857" y="379" width="1" height="30" fill="#e60000"/><rect x="856" y="389" width="3" height="10" fill="#e60000"/><rect x="861" y="383" width="1" height="22" fill="#00c000"/><rect x="860" y="392" width="3" height="5" fill="#00c000"/><rect x="865" y="385" width="1" height="12" fill="#00c000"/><rect x="864" y="389" width="3" height="4" fill="#00c000"/><rect x="869" y="329" width="1" height="75" fill="#00c000"/><rect x="868" y="333" width="3" height="68" fill="#00c000"/><rect x="873" y="332" width="1" height="21" fill="#e60000"/><rect x="872" y="333" width="3" height="16" fill="#e60000"/><rect x="877" y="344" width="1" height="38" fill="#e60000"/><rect x="876" y="348" width="3" height="24" fill="#e60000"/><rect x="881" y="365" width="1" height="13" fill="#00c000"/><rect x="880" y="368" width="3" height="6" fill="#00c000"/><rect x="885" y="364" width="1" height="20" fill="#e60000"/><rect x="884" y="369" width="3" height="14" fill="#e60000"/><rect x="889" y="378" width="1" height="9" fill="#00c000"/><rect x="888" y="380" width="3" height="2" fill="#00c000"/><rect x="893" y="374" width="1" height="28" fill="#e60000"/><rect x="892" y="379" width="3" height="15" fill="#e60000"/><rect x="897" y="390" width="1" height="7" fill="#e60000"/><rect x="896" y="392" width="3" height="4" fill="#e60000"/><rect x="901" y="387" width="1" height="25" fill="#e60000"/><rect x="900" y="395" width="3" height="8" fill="#e60000"/><rect x="905" y="393" width="1" height="18" fill="#e60000"/><rect x="904" y="402" width="3" height="2" fill="#e60000"/><rect x="909" y="402" width="1" height="7" fill="#e60000"/><rect x="908" y="405" width="3" height="2" fill="#e60000"/><rect x="913" y="397" width="1" height="13" fill="#00c000"/><rect x="912" y="407" width="3" height="2" fill="#00c000"/><rect x="917" y="375" width="1" height="41" fill="#00c000"/><rect x="916" y="385" width="3" height="22" fill="#00c000"/><rect x="921" y="340" width="1" height="78" fill="#00c000"/><rect x="920" y="344" width="3" height="70" fill="#00c000"/><rect x="925" y="339" width="1" height="80" fill="#e60000"/><rect x="924" y="344" width="3" height="70" fill="#e60000"/><rect x="929" y="383" width="1" height="37" fill="#e60000"/><rect x="928" y="392" width="3" height="25" fill="#e60000"/><rect x="933" y="396" width="1" height="29" fill="#00c000"/><rect x="932" y="405" width="3" height="13" fill="#00c000"/><rect x="937" y="396" width="1" height="12" fill="#00c000"/><rect x="936" y="400" width="3" height="4" fill="#00c000"/><rect x="941" y="396" width="1" height="15" fill="#e60000"/><rect x="940" y="399" width="3" height="5" fill="#e60000"/><rect x="945" y="379" width="1" height="40" fill="#00c000"/><rect x="944" y="382" width="3" height="35" fill="#00c000"/><rect x="949" y="378" width="1" height="45" fill="#e60000"/><rect x="948" y="382" width="3" height="31" fill="#e60000"/><rect x="953" y="413" width="1" height="6" fill="#e60000"/><rect x="952" y="415" width="3" height="2" fill="#e60000"/><rect x="957" y="388" width="1" height="33" fill="#00c000"/><rect x="956" y="393" width="3" height="25" fill="#00c000"/><rect x="961" y="370" width="1" height="31" fill="#00c000"/><rect x="960" y="377" width="3" height="17" fill="#00c000"/><rect x="965" y="369" width="1" height="14" fill="#e60000"/><rect x="964" y="377" width="3" height="2" fill="#e60000"/><rect x="969" y="367" width="1" height="14" fill="#00c000"/><rect x="968" y="375" width="3" height="4" fill="#00c000"/><rect x="973" y="379" width="1" height="38" fill="#e60000"/><rect x="972" y="382" width="3" height="32" fill="#e60000"/><rect x="977" y="371" width="1" height="48" fill="#00c000"/><rect x="976" y="378" width="3" height="38" fill="#00c000"/><rect x="981" y="374" width="1" height="18" fill="#e60000"/><rect x="980" y="380" width="3" height="10" fill="#e60000"/><rect x="985" y="380" width="1" height="28" fill="#e60000"/><rect x="984" y="390" width="3" height="16" fill="#e60000"/><rect x="989" y="402" width="1" height="31" fill="#e60000"/><rect x="988" y="407" width="3" height="17" fill="#e60000"/><rect x="993" y="406" width="1" height="58" fill="#e60000"/><rect x="992" y="415" width="3" height="40" fill="#e60000"/><rect x="997" y="443" width="1" height="12" fill="#e60000"/><rect x="996" y="444" width="3" height="7" fill="#e60000"/><rect x="1001" y="449" width="1" height="9" fill="#e60000"/><rect x="1000" y="451" width="3" height="4" fill="#e60000"/><rect x="1005" y="439" width="1" height="22" fill="#00c000"/><rect x="1004" y="449" width="3" height="6" fill="#00c000"/><rect x="1009" y="438" width="1" height="16" fill="#00c000"/><rect x="1008" y="447" width="3" height="2" fill="#00c000"/><rect x="1013" y="438" width="1" height="22" fill="#e60000"/><rect x="1012" y="447" width="3" height="8" fill="#e60000"/><rect x="1017" y="439" width="1" height="24" fill="#00c000"/><rect x="1016" y="442" width="3" height="13" fill="#00c000"/><rect x="1021" y="432" width="1" height="29" fill="#e60000"/><rect x="1020" y="442" width="3" height="18" fill="#e60000"/><rect x="1025" y="432" width="1" height="30" fill="#00c000"/><rect x="1024" y="438" width="3" height="17" fill="#00c000"/><rect x="1029" y="430" width="1" height="12" fill="#e60000"/><rect x="1028" y="433" width="3" height="5" fill="#e60000"/><rect x="1033" y="425" width="1" height="16" fill="#00c000"/><rect x="1032" y="427" width="3" height="11" fill="#00c000"/><rect x="1037" y="424" width="1" height="16" fill="#e60000"/><rect x="1036" y="427" width="3" height="6" fill="#e60000"/><rect x="1041" y="426" width="1" height="35" fill="#e60000"/><rect x="1040" y="433" width="3" height="25" fill="#e60000"/><rect x="1045" y="450" width="1" height="9" fill="#e60000"/><rect x="1044" y="451" width="3" height="4" fill="#e60000"/><rect x="1049" y="435" width="1" height="19" fill="#00c000"/><rect x="1048" y="442" width="3" height="9" fill="#00c000"/><rect x="1053" y="436" width="1" height="13" fill="#00c000"/><rect x="1052" y="440" width="3" height="6" fill="#00c000"/><rect x="1057" y="425" width="1" height="19" fill="#00c000"/><rect x="1056" y="433" width="3" height="5" fill="#00c000"/><rect x="1061" y="422" width="1" height="10" fill="#00c000"/><rect x="1060" y="424" width="3" height="7" fill="#00c000"/><rect x="1065" y="419" width="1" height="25" fill="#e60000"/><rect x="1064" y="424" width="3" height="14" fill="#e60000"/><rect x="1069" y="431" width="1" height="13" fill="#e60000"/><rect x="1068" y="438" width="3" height="4" fill="#e60000"/><rect x="1073" y="429" width="1" height="19" fill="#00c000"/><rect x="1072" y="431" width="3" height="9" fill="#00c000"/><rect x="1077" y="423" width="1" height="14" fill="#00c000"/><rect x="1076" y="428" width="3" height="6" fill="#00c000"/><rect x="1081" y="416" width="1" height="20" fill="#00c000"/><rect x="1080" y="420" width="3" height="7" fill="#00c000"/><rect x="1085" y="412" width="1" height="14" fill="#00c000"/><rect x="1084" y="416" width="3" height="4" fill="#00c000"/><rect x="1089" y="411" width="1" height="22" fill="#e60000"/><rect x="1088" y="416" width="3" height="14" fill="#e60000"/><rect x="1093" y="374" width="1" height="65" fill="#00c000"/><rect x="1092" y="383" width="3" height="46" fill="#00c000"/><rect x="1097" y="379" width="1" height="13" fill="#e60000"/><rect x="1096" y="383" width="3" height="6" fill="#e60000"/><rect x="1101" y="354" width="1" height="32" fill="#00c000"/><rect x="1100" y="362" width="3" height="22" fill="#00c000"/><rect x="1105" y="362" width="1" height="20" fill="#e60000"/><rect x="1104" y="363" width="3" height="10" fill="#e60000"/><polyline points="5.0,83.0 16.5,78.0 27.5,80.8 45.5,85.6 57.9,99.4 68.9,106.3 82.6,116.0 96.4,127.0 117.0,138.0 130.0,145.0 141.0,150.0 147.0,156.0 160.0,168.0 180.0,180.0 197.2,184.9 208.5,181.9 227.0,181.9 243.5,183.9 264.0,188.0 272.2,182.9 284.6,175.7 292.8,171.6 305.1,159.2 313.4,161.3 321.6,158.2 325.7,146.9 333.9,141.8 342.1,142.8 354.5,136.6 366.8,126.3 383.3,109.9 395.6,97.6 416.2,91.4 424.4,85.2 442.9,77.5" fill="none" stroke="#18c8dc" stroke-width="1" shape-rendering="crispEdges" stroke-linejoin="round" /><polyline points="501.0,77.5 520.0,82.0 535.0,89.5 545.0,92.0 570.0,109.5 577.5,117.0 595.0,129.5 615.0,147.0 635.0,162.0 650.0,177.0 660.0,179.5 670.0,189.5 685.0,204.5 700.0,222.0 710.0,232.0 722.5,247.0 732.0,260.0 746.7,281.3 757.3,294.7 768.0,308.0 778.7,321.3 789.3,332.0 797.3,340.0 810.7,342.7 826.7,350.7 842.7,358.7 860.0,353.0 869.3,343.7 883.3,337.8 892.7,337.8 906.7,330.8 916.0,332.0 930.0,318.0 939.3,322.7 948.7,318.0 958.0,315.7 972.0,311.0 986.0,313.3 1000.0,315.7 1009.3,329.7 1018.7,336.7 1037.3,341.3 1051.3,343.7 1060.7,353.0 1070.0,354.2 1079.3,357.7 1088.7,362.3 1095.6,360.0 1103.8,361.2" fill="none" stroke="#18c8dc" stroke-width="1" shape-rendering="crispEdges" stroke-linejoin="round" /><polyline points="55.0,78.0 66.0,84.3 85.4,103.5 96.4,111.8 110.0,121.5 120.4,143.5 128.6,149.6 141.0,172.0 149.0,176.0 170.0,190.0 197.2,201.4 214.7,199.3 231.1,200.4 247.6,203.4 264.0,206.5 276.3,200.4 290.7,196.2 296.9,189.0 309.2,183.9 321.6,182.9 327.7,174.7 336.0,169.5 346.3,163.4 358.6,155.1 370.9,144.8 383.3,134.6 395.6,124.3 403.8,120.2 416.2,118.1 428.5,112.0 440.8,101.7 449.0,95.5 460.0,93.0 485.0,96.0 510.0,102.0 530.0,109.5 542.5,113.0 560.0,127.0 580.0,139.5 595.0,152.0 615.0,169.5 635.0,184.5 650.0,197.0 665.0,209.5 680.0,224.5 695.0,239.5 713.3,260.0 728.0,276.0 746.7,305.3 762.7,324.0 778.7,345.3 794.7,364.0 813.3,369.3 832.0,377.3 842.7,380.0 864.0,380.0 872.0,372.0 883.3,364.7 897.3,360.0 916.0,356.5 930.0,346.0 944.0,347.2 958.0,343.7 974.3,340.2 990.7,343.7 1004.7,350.7 1018.7,360.0 1037.3,364.7 1051.3,369.3 1060.7,378.7 1074.7,379.8 1088.7,384.5 1095.6,383.3 1103.8,384.5" fill="none" stroke="#12aaf0" stroke-width="1" shape-rendering="crispEdges" stroke-linejoin="round" /><polyline points="5.0,192.0 30.0,196.0 62.5,205.0 104.0,226.0 150.0,252.4 174.3,254.8 198.6,256.0 222.9,257.2 247.2,267.0 261.8,271.8 286.1,273.0 310.4,270.6 325.0,271.8 339.6,259.7 356.6,251.2 373.6,237.8 393.0,223.2 412.5,211.0 432.0,191.6 449.0,181.9 463.6,168.5 467.5,168.0 485.0,172.0 507.5,176.0 515.0,179.5 532.5,187.0 540.0,192.0 555.0,199.5 565.0,212.0 575.0,214.5 585.0,219.5 595.0,232.0 610.0,239.5 625.0,252.0 640.0,270.7 656.0,284.0 677.3,300.0 693.3,318.7 709.3,337.3 728.0,361.3 746.7,390.7 762.7,409.3 778.7,425.3 789.3,441.3 800.0,449.3 816.0,457.3 837.3,460.0 853.3,462.7 866.7,460.0 883.3,455.7 906.7,448.7 920.7,440.5 937.0,437.0 953.3,441.7 967.3,440.5 986.0,439.3 1000.0,445.2 1018.7,453.3 1037.3,460.3 1051.3,466.2 1070.0,469.7 1084.0,467.3 1093.3,470.8 1103.8,469.7" fill="none" stroke="#f0189c" stroke-width="1" shape-rendering="crispEdges" stroke-linejoin="round" /><polyline points="90.0,196.0 104.0,220.0 130.0,242.0 150.0,257.2 164.6,264.5 193.8,269.4 198.6,267.0 213.2,274.2 242.4,284.0 266.7,291.3 291.0,292.5 315.3,294.9 325.0,299.8 342.0,284.0 359.0,276.7 373.6,259.7 393.0,242.6 407.6,232.9 432.0,213.5 449.0,206.2 463.6,190.4 470.0,190.8 485.0,194.5 507.5,195.8 517.5,203.0 532.5,207.0 542.5,214.5 557.5,222.0 567.5,234.5 580.0,238.0 590.0,247.0 602.5,257.0 620.0,264.5 640.0,293.3 656.0,308.0 674.7,326.7 693.3,342.7 709.3,364.0 728.0,388.0 746.7,414.7 762.7,433.3 781.3,452.0 794.7,468.0 808.0,481.3 826.7,481.3 853.3,486.7 872.0,484.0 883.3,481.3 906.7,474.3 918.3,465.0 937.0,463.8 948.7,469.7 967.3,467.3 986.0,467.3 1000.0,474.3 1018.7,476.7 1032.7,483.7 1046.7,490.7 1060.7,493.0 1074.7,495.3 1088.7,493.0 1103.8,493.0" fill="none" stroke="#f010f0" stroke-width="1" shape-rendering="crispEdges" stroke-linejoin="round" /><path d="M211.5 188h4v7h4l-6 7l-6-7h4z" fill="#f01838" shape-rendering="auto"/><path d="M379 99h4v7h4l-6 7l-6-7h4z" fill="#f01838" shape-rendering="auto"/><path d="M451 98h4v7h4l-6 7l-6-7h4z" fill="#f01838" shape-rendering="auto"/><path d="M883.5 346h4v7h4l-6 7l-6-7h4z" fill="#f01838" shape-rendering="auto"/><path d="M955 344h4v7h4l-6 7l-6-7h4z" fill="#f01838" shape-rendering="auto"/><path d="M181 251h4v-7h4l-6-7l-6 7h4z" fill="#18e018" shape-rendering="auto"/><path d="M259 268h4v-7h4l-6-7l-6 7h4z" fill="#18e018" shape-rendering="auto"/><path d="M402 177h4v-7h4l-6-7l-6 7h4z" fill="#18e018" shape-rendering="auto"/><path d="M786 483h4v-7h4l-6-7l-6 7h4z" fill="#18e018" shape-rendering="auto"/><path d="M930 463h4v-7h4l-6-7l-6 7h4z" fill="#18e018" shape-rendering="auto"/><path d="M1074 453h4v-7h4l-6-7l-6 7h4z" fill="#18e018" shape-rendering="auto"/><line x1="5" y1="554.5" x2="1392" y2="554.5" stroke="#c8c8c8" stroke-dasharray="4 4"/><line x1="5" y1="611.5" x2="1392" y2="611.5" stroke="#c8c8c8" stroke-dasharray="4 4"/><polyline points="4.9,550.6 38.9,553.6 58.4,555.5 77.8,558.4 101.2,561.3 136.2,561.3 175.1,562.3 214.0,563.3 252.9,565.2 270.0,566.2 308.9,567.2 347.8,561.3 386.7,555.5 425.6,553.6 464.6,550.6 503.5,550.6 540.0,554.5 578.9,560.4 617.8,567.2 656.7,570.1 695.6,577.9 734.6,588.6 773.5,598.3 792.9,604.1 810.0,604.7 853.1,602.6 896.1,600.4 939.2,604.7 982.2,606.9 1025.3,611.2 1046.8,617.7 1068.3,615.5 1104.9,612.3" fill="none" stroke="#ff2a10" stroke-width="1.1" shape-rendering="auto" stroke-linejoin="round" stroke-linecap="round" stroke-dasharray="3 2"/><polyline points="4.9,546.8 15.6,547.7 25.3,548.7 33.1,551.6 38.9,547.7 50.6,546.8 62.3,551.6 70.0,549.7 80.7,546.8 89.5,549.7 105.0,552.6 116.7,548.7 132.3,546.8 144.0,545.8 159.5,551.6 169.3,552.6 179.0,550.6 194.6,550.6 202.3,549.7 210.1,551.6 221.8,553.6 229.6,558.4 237.4,560.4 245.1,558.4 256.8,565.2 264.6,566.2 270.0,563.3 281.7,565.2 293.3,563.3 305.0,570.1 316.7,573.0 328.4,565.2 340.0,564.3 351.7,555.5 363.4,556.5 375.1,560.4 386.7,559.4 396.5,556.5 410.1,555.5 421.8,547.7 433.4,547.7 441.2,552.6 449.0,547.7 460.7,546.8 472.3,554.5 484.0,552.6 493.7,548.7 503.5,549.7 515.1,555.5 522.9,552.6 534.6,553.6 540.0,556.5 551.7,557.5 565.3,553.6 578.9,555.5 592.5,565.2 608.1,565.2 625.6,566.2 637.3,561.3 649.0,563.3 660.6,566.2 676.2,569.1 687.9,576.9 699.5,577.9 707.3,576.9 719.0,580.8 730.6,585.7 746.2,591.5 754.0,587.6 765.7,590.5 773.5,589.6 785.1,588.6 792.9,591.5 800.7,586.6 810.0,587.5 820.8,583.2 831.5,589.7 842.3,589.7 853.1,587.5 866.0,589.7 870.3,587.5 878.9,595.0 891.8,598.3 904.7,606.9 917.6,602.6 926.3,600.4 939.2,602.6 952.1,597.2 960.7,598.3 973.6,606.9 990.8,609.0 999.5,617.7 1012.4,616.6 1025.3,617.7 1042.5,619.8 1059.7,611.2 1068.3,616.6 1081.3,614.4 1089.9,613.4 1104.9,613.4" fill="none" stroke="#0a9a0a" stroke-width="1.2" shape-rendering="auto" stroke-linejoin="round" stroke-linecap="round" /><polyline points="4.9,552.6 15.6,553.6 23.3,554.5 35.0,557.5 54.5,557.5 62.3,564.3 73.9,561.3 81.7,559.4 93.4,561.3 105.0,565.2 112.8,561.3 124.5,559.4 136.2,561.3 147.9,561.3 159.5,564.3 171.2,565.2 182.9,562.3 194.6,563.3 206.2,563.3 217.9,563.3 229.6,567.2 241.2,565.2 252.9,568.2 264.6,568.2 270.0,564.3 281.7,563.3 293.3,561.3 301.1,568.2 312.8,569.1 320.6,567.2 328.4,559.4 340.0,557.5 351.7,553.6 363.4,552.6 375.1,555.5 386.7,555.5 394.5,552.6 406.2,556.5 417.9,553.6 429.5,549.7 439.3,552.6 449.0,546.8 458.7,545.8 470.4,551.6 480.1,552.6 491.8,547.7 503.5,552.6 515.1,557.5 526.8,557.5 540.0,561.3 547.8,563.3 559.5,561.3 563.3,558.4 578.9,560.4 590.6,568.2 608.1,569.1 625.6,570.1 631.4,573.0 637.3,568.2 649.0,570.1 656.7,575.9 664.5,575.0 676.2,576.9 687.9,586.6 699.5,586.6 707.3,584.7 722.9,588.6 734.6,600.3 746.2,605.1 754.0,600.3 765.7,605.1 781.3,607.1 792.9,610.0 800.7,602.2 810.0,601.5 822.9,599.4 840.1,602.6 853.1,600.4 866.0,600.4 870.3,594.0 878.9,598.3 891.8,600.4 904.7,606.9 917.6,604.7 926.3,606.9 941.3,612.3 947.8,606.9 960.7,600.4 973.6,604.7 990.8,609.0 999.5,617.7 1016.7,618.7 1029.6,616.6 1042.5,618.7 1059.7,612.3 1072.7,615.5 1089.9,614.4 1094.2,608.0 1104.9,609.0" fill="none" stroke="#e060e8" stroke-width="1.2" shape-rendering="auto" stroke-linejoin="round" stroke-linecap="round" /><path d="M4.9 614.8 C8.9 615.4 20.3 617.9 29.2 618.7 C38.1 619.5 50.3 619.7 58.4 619.7 C66.5 619.7 71.3 619.7 77.8 618.7 C84.3 617.7 90.8 615.7 97.3 613.9 C103.8 612.1 111.5 609.5 116.7 608.0 C121.9 606.5 123.9 605.6 128.4 605.1 C133.0 604.6 140.1 603.6 144.0 605.1 C147.9 606.6 148.9 611.6 151.8 613.9 C154.7 616.2 157.6 617.9 161.5 618.7 C165.4 619.5 170.9 620.2 175.1 618.7 C179.3 617.2 182.9 615.4 186.8 610.0 C190.7 604.6 194.5 593.7 198.4 586.6 C202.3 579.5 206.5 572.2 210.1 567.2 C213.7 562.2 216.6 558.6 219.8 556.5 C223.1 554.4 226.3 554.0 229.6 554.5 C232.8 555.0 236.1 556.0 239.3 559.4 C242.5 562.8 246.1 568.8 249.0 575.0 C251.9 581.2 254.2 590.9 256.8 596.4 C259.4 601.9 262.4 606.7 264.6 608.0 C266.8 609.3 267.5 606.4 270.0 604.1 C272.5 601.8 276.4 598.9 279.7 594.4 C282.9 589.9 286.2 582.1 289.5 576.9 C292.8 571.7 296.3 566.9 299.2 563.3 C302.1 559.7 304.4 556.1 307.0 555.5 C309.6 554.9 312.1 557.8 314.7 559.4 C317.3 561.0 320.2 564.9 322.5 565.2 C324.8 565.5 326.1 562.6 328.4 561.3 C330.7 560.0 332.9 558.6 336.1 557.5 C339.3 556.4 343.9 555.5 347.8 554.5 C351.7 553.5 355.3 552.4 359.5 551.6 C363.7 550.8 368.9 549.9 373.1 549.7 C377.3 549.5 381.2 549.6 384.8 550.6 C388.4 551.6 391.6 552.7 394.5 555.5 C397.4 558.3 400.0 562.0 402.3 567.2 C404.6 572.4 406.2 580.8 408.1 586.6 C410.1 592.4 411.7 600.6 414.0 602.2 C416.3 603.8 419.2 598.0 421.8 596.4 C424.4 594.8 426.9 594.8 429.5 592.5 C432.1 590.2 435.4 583.7 437.3 582.7 C439.2 581.7 439.6 586.3 441.2 586.6 C442.8 586.9 444.4 587.6 447.0 584.7 C449.6 581.8 453.9 572.8 456.8 569.1 C459.7 565.4 462.0 562.0 464.6 562.3 C467.2 562.6 470.0 569.0 472.3 571.1 C474.6 573.2 476.2 572.4 478.2 575.0 C480.1 577.6 481.4 582.1 484.0 586.6 C486.6 591.1 490.4 598.1 493.7 602.2 C496.9 606.3 499.6 609.2 503.5 611.0 C507.4 612.8 512.9 611.8 517.1 612.9 C521.3 614.0 525.0 616.8 528.8 617.8 C532.6 618.8 534.2 618.4 540.0 618.7 C545.8 619.0 557.8 620.0 563.3 619.7 C568.8 619.4 568.5 618.2 573.1 616.8 C577.7 615.3 584.1 612.1 590.6 611.0 C597.1 609.9 606.2 610.2 612.0 610.0 C617.8 609.8 621.4 609.2 625.6 610.0 C629.8 610.8 633.4 613.5 637.3 614.8 C641.2 616.1 639.3 617.0 649.0 617.8 C658.7 618.6 681.3 619.4 695.6 619.7 C709.9 620.0 720.3 620.0 734.6 619.7 C748.9 619.4 771.6 618.6 781.3 617.8 C791.0 617.0 790.0 615.8 792.9 614.8 C795.8 613.8 796.5 616.6 798.8 611.9 C801.1 607.2 804.6 592.1 806.5 586.6 C808.4 581.1 808.3 583.0 810.0 578.9 C811.7 574.8 814.0 565.7 816.5 561.7 C819.0 557.8 821.9 556.5 825.1 555.2 C828.3 553.9 832.6 554.6 835.8 554.1 C839.0 553.6 840.1 552.4 844.4 552.0 C848.7 551.6 857.8 551.6 861.7 552.0 C865.7 552.4 865.2 553.8 868.1 554.1 C871.0 554.5 875.7 553.6 878.9 554.1 C882.1 554.6 885.0 557.0 887.5 557.4 C890.0 557.8 891.5 555.4 894.0 556.3 C896.5 557.2 898.7 558.3 902.6 562.8 C906.5 567.3 913.7 579.4 917.6 583.2 C921.5 587.0 922.7 583.2 926.3 585.4 C929.9 587.5 936.3 592.9 939.2 596.1 C942.1 599.3 941.7 602.2 943.5 604.7 C945.3 607.2 947.8 611.6 949.9 611.2 C952.0 610.9 953.9 607.3 956.4 602.6 C958.9 597.9 962.1 587.7 965.0 583.2 C967.9 578.7 971.5 577.3 973.6 575.7 C975.8 574.1 975.8 573.5 977.9 573.5 C980.0 573.5 983.6 572.7 986.5 575.7 C989.4 578.8 992.2 587.3 995.1 591.8 C998.0 596.3 999.5 599.7 1003.8 602.6 C1008.1 605.5 1016.0 606.9 1021.0 609.0 C1026.0 611.1 1029.6 615.1 1033.9 615.5 C1038.2 615.9 1043.2 612.6 1046.8 611.2 C1050.4 609.8 1052.5 610.9 1055.4 606.9 C1058.3 602.9 1061.1 594.3 1064.0 587.5 C1066.9 580.7 1069.5 571.2 1072.7 566.0 C1075.9 560.8 1079.8 558.1 1083.4 556.3 C1087.0 554.5 1090.6 555.9 1094.2 555.2 C1097.8 554.5 1103.1 552.5 1104.9 552.0" fill="none" stroke="#3c5cff" stroke-width="1.2" shape-rendering="auto" stroke-linejoin="round" stroke-linecap="round" /><polyline points="4.9,614.8 19.5,615.8 29.2,617.8 38.9,619.7 58.4,619.7 68.1,618.7 77.8,617.8 89.5,611.9 97.3,598.3 101.2,597.3 106.0,606.1 116.7,607.1 124.5,602.2 128.4,610.0 136.2,615.8 151.8,618.7 161.5,619.7 175.1,619.7 182.9,613.9 190.7,576.9 200.4,548.7 221.8,548.7 227.6,563.3 233.5,590.5 237.4,610.0 245.1,609.0 252.9,612.9 260.7,613.9 266.5,608.0 270.0,586.6 273.9,559.4 281.7,549.7 293.3,545.8 301.1,549.7 307.0,567.2 312.8,590.5 318.6,604.1 322.5,602.2 328.4,567.2 332.3,549.7 340.0,546.8 351.7,545.8 371.2,546.8 378.9,549.7 382.8,563.3 386.7,572.0 392.6,574.0 398.4,592.5 404.2,606.1 410.1,611.9 417.9,594.4 423.7,567.2 431.5,549.7 437.3,555.5 441.2,567.2 449.0,567.2 456.8,569.1 462.6,567.2 468.4,576.9 472.3,598.3 478.2,606.1 482.0,610.9 487.9,608.0 493.7,601.2 503.5,606.1 509.3,611.9 515.1,617.8 522.9,619.7 540.0,619.7 563.3,617.8 571.1,613.9 577.0,602.2 580.9,588.6 584.7,585.7 588.6,592.5 592.5,602.2 602.3,613.9 617.8,617.8 629.5,619.7 641.2,615.8 650.9,612.9 660.6,617.8 676.2,619.7 695.6,619.7 711.2,617.8 734.6,619.7 754.0,619.7 765.7,614.8 781.3,612.9 792.9,615.8 798.8,608.0 804.6,586.6 810.0,566.0 816.5,553.1 825.1,547.7 835.8,553.1 842.3,563.8 848.8,566.0 857.4,561.7 863.8,560.6 866.0,564.9 870.3,550.9 876.7,550.9 883.2,555.2 891.8,570.3 898.3,591.8 904.7,609.0 909.0,613.4 917.6,606.9 922.0,585.4 926.3,589.7 932.7,585.4 939.2,587.5 943.5,600.4 947.8,598.3 960.7,570.3 967.2,561.7 971.5,563.8 977.9,581.1 982.2,589.7 988.7,604.7 995.1,617.7 1008.1,618.7 1021.0,619.8 1027.4,615.5 1031.8,606.9 1038.2,583.2 1044.7,594.0 1053.3,589.7 1061.9,566.0 1070.5,572.4 1083.4,553.1 1089.9,554.1 1096.3,547.7 1104.9,545.5" fill="none" stroke="#f0f000" stroke-width="1.2" shape-rendering="auto" stroke-linejoin="round" stroke-linecap="round" /><path d="M4.9 572.0 C7.0 572.2 13.4 572.0 17.5 573.0 C21.6 574.0 25.6 575.8 29.2 577.9 C32.8 580.0 36.0 583.8 38.9 585.7 C41.8 587.7 43.8 588.8 46.7 589.6 C49.6 590.4 53.2 589.0 56.4 590.5 C59.6 592.0 63.2 596.2 66.1 598.3 C69.0 600.4 71.6 602.4 73.9 603.2 C76.2 604.0 78.2 603.7 79.8 603.2 C81.4 602.7 81.4 600.9 83.7 600.3 C86.0 599.6 90.5 599.3 93.4 599.3 C96.3 599.3 98.6 599.8 101.2 600.3 C103.8 600.8 106.3 601.7 108.9 602.2 C111.5 602.7 113.5 602.7 116.7 603.2 C120.0 603.7 124.5 604.3 128.4 605.1 C132.3 605.9 136.2 606.9 140.1 608.0 C144.0 609.1 148.2 610.4 151.8 611.9 C155.4 613.4 158.3 615.8 161.5 616.8 C164.7 617.8 168.0 618.0 171.2 617.8 C174.4 617.6 177.7 616.9 180.9 615.8 C184.2 614.7 187.1 612.5 190.7 611.0 C194.3 609.5 197.8 608.2 202.3 607.1 C206.8 606.0 214.0 604.4 217.9 604.1 C221.8 603.8 223.1 604.3 225.7 605.1 C228.3 605.9 230.9 607.7 233.5 609.0 C236.1 610.3 238.0 611.9 241.2 612.9 C244.4 613.9 249.0 614.3 252.9 614.8 C256.8 615.3 261.8 616.3 264.6 615.8 C267.5 615.3 267.5 613.7 270.0 611.9 C272.5 610.1 276.8 606.9 279.7 605.1 C282.6 603.3 284.9 602.3 287.5 601.2 C290.1 600.1 292.4 598.3 295.3 598.3 C298.2 598.3 301.8 599.2 305.0 601.2 C308.2 603.2 311.8 608.5 314.7 610.0 C317.6 611.5 320.2 612.3 322.5 610.0 C324.8 607.7 326.1 601.9 328.4 596.4 C330.7 590.9 333.8 581.9 336.1 576.9 C338.4 571.9 339.7 568.5 342.0 566.2 C344.3 563.9 347.2 563.8 349.8 563.3 C352.4 562.8 354.6 564.1 357.5 563.3 C360.4 562.5 363.7 559.5 367.3 558.4 C370.9 557.3 375.0 556.6 378.9 556.5 C382.8 556.4 386.7 556.9 390.6 557.5 C394.5 558.1 398.4 559.4 402.3 560.4 C406.2 561.4 410.8 563.3 414.0 563.3 C417.2 563.3 419.2 561.7 421.8 560.4 C424.4 559.1 426.9 556.6 429.5 555.5 C432.1 554.4 434.7 553.4 437.3 553.6 C439.9 553.8 442.5 555.7 445.1 556.5 C447.7 557.3 450.0 558.9 452.9 558.4 C455.8 557.9 459.4 553.8 462.6 553.6 C465.8 553.5 468.7 555.4 472.3 557.5 C475.9 559.6 480.1 565.1 484.0 566.2 C487.9 567.3 491.8 564.1 495.7 564.3 C499.6 564.5 504.2 565.1 507.4 567.2 C510.6 569.3 511.9 573.8 515.1 576.9 C518.3 580.0 522.6 583.4 526.8 585.7 C530.9 588.0 536.2 588.4 540.0 590.5 C543.8 592.6 546.1 595.7 549.7 598.3 C553.3 600.9 558.1 605.3 561.4 606.1 C564.6 606.9 566.9 603.7 569.2 603.2 C571.5 602.7 573.0 604.0 575.0 603.2 C577.0 602.4 578.6 598.5 580.9 598.3 C583.2 598.1 586.0 600.2 588.6 602.2 C591.2 604.2 593.5 607.7 596.4 610.0 C599.3 612.3 602.5 614.5 606.1 615.8 C609.7 617.1 613.9 617.1 617.8 617.8 C621.7 618.4 626.2 620.4 629.5 619.7 C632.8 619.1 634.0 615.7 637.3 613.9 C640.5 612.1 645.8 609.3 649.0 609.0 C652.2 608.7 653.8 610.8 656.7 611.9 C659.6 613.0 663.2 614.7 666.5 615.8 C669.8 616.9 672.6 617.9 676.2 618.7 C679.8 619.5 684.0 620.4 687.9 620.7 C691.8 621.0 695.9 621.4 699.5 620.7 C703.1 620.1 705.4 617.6 709.3 616.8 C713.2 616.0 718.7 615.1 722.9 615.8 C727.1 616.4 730.7 619.9 734.6 620.7 C738.5 621.5 742.3 620.9 746.2 620.7 C750.1 620.5 754.0 619.9 757.9 619.7 C761.8 619.5 765.7 619.9 769.6 619.7 C773.5 619.5 777.4 619.4 781.3 618.7 C785.2 618.1 789.0 617.2 792.9 615.8 C796.8 614.3 801.8 611.5 804.6 610.0 C807.5 608.5 807.0 607.9 810.0 606.9 C813.0 605.9 817.9 604.1 822.9 603.7 C827.9 603.3 835.1 604.9 840.1 604.7 C845.1 604.5 848.8 603.3 853.1 602.6 C857.4 601.9 861.7 601.5 866.0 600.4 C870.3 599.3 874.6 596.6 878.9 596.1 C883.2 595.6 888.2 596.7 891.8 597.2 C895.4 597.8 896.8 598.7 900.4 599.4 C904.0 600.1 909.0 601.5 913.3 601.5 C917.6 601.5 922.7 600.3 926.3 599.4 C929.9 598.5 932.0 595.9 934.9 596.1 C937.8 596.3 939.9 600.4 943.5 600.4 C947.1 600.4 952.8 597.5 956.4 596.1 C960.0 594.7 961.4 592.0 965.0 591.8 C968.6 591.6 973.6 593.9 977.9 595.0 C982.2 596.1 986.5 596.7 990.8 598.3 C995.1 599.9 999.5 602.9 1003.8 604.7 C1008.1 606.5 1012.4 608.5 1016.7 609.0 C1021.0 609.5 1025.3 608.7 1029.6 608.0 C1033.9 607.3 1038.2 605.1 1042.5 604.7 C1046.8 604.3 1051.1 606.9 1055.4 605.8 C1059.7 604.7 1064.0 600.1 1068.3 598.3 C1072.6 596.5 1077.7 595.9 1081.3 595.0 C1084.9 594.1 1087.0 595.2 1089.9 592.9 C1092.8 590.6 1096.0 584.5 1098.5 581.1 C1101.0 577.7 1103.8 573.9 1104.9 572.4" fill="none" stroke="#ffffff" stroke-width="3.2" shape-rendering="auto" stroke-linejoin="round" stroke-linecap="round" /><polyline points="152.7,607.1 161.5,615.8 167.3,617.8 173.2,617.4" fill="none" stroke="#ff0a0a" stroke-width="2.8" shape-rendering="auto" stroke-linejoin="round" stroke-linecap="round" /><polyline points="544.3,609.0 550.2,611.0" fill="none" stroke="#ff0a0a" stroke-width="2.8" shape-rendering="auto" stroke-linejoin="round" stroke-linecap="round" /><polyline points="613.9,610.0 619.8,613.9 629.5,614.8" fill="none" stroke="#ff0a0a" stroke-width="2.8" shape-rendering="auto" stroke-linejoin="round" stroke-linecap="round" /><polyline points="660.6,609.0 668.4,611.9 684.0,617.8" fill="none" stroke="#ff0a0a" stroke-width="2.8" shape-rendering="auto" stroke-linejoin="round" stroke-linecap="round" /><polyline points="695.6,617.8 709.3,611.0" fill="none" stroke="#ff0a0a" stroke-width="2.8" shape-rendering="auto" stroke-linejoin="round" stroke-linecap="round" /><polyline points="720.9,609.0 732.6,617.8" fill="none" stroke="#ff0a0a" stroke-width="2.8" shape-rendering="auto" stroke-linejoin="round" stroke-linecap="round" /><polyline points="750.1,617.8 757.9,611.9" fill="none" stroke="#ff0a0a" stroke-width="2.8" shape-rendering="auto" stroke-linejoin="round" stroke-linecap="round" /><polyline points="765.7,611.0 775.4,611.9" fill="none" stroke="#ff0a0a" stroke-width="2.8" shape-rendering="auto" stroke-linejoin="round" stroke-linecap="round" /><line x1="5" y1="639.5" x2="1392" y2="639.5" stroke="#c8c8c8" stroke-dasharray="4 4"/><line x1="5" y1="694.5" x2="1392" y2="694.5" stroke="#c8c8c8" stroke-dasharray="4 4"/><polyline points="4.9,632.8 19.5,632.8 33.1,637.6 46.7,632.8 62.3,637.6 81.7,632.8 105.1,638.6 120.6,633.7 144.0,631.8 167.3,639.6 179.0,635.7 194.6,636.6 210.1,639.6 217.9,637.6 233.5,645.4 245.1,643.5 256.8,650.3 270.0,647.3 284.6,650.2 299.2,653.2 310.8,656.1 322.5,650.2 340.0,645.9 357.5,640.0 375.0,644.4 392.4,643.0 415.8,637.1 433.3,634.2 450.8,634.2 474.1,638.6 491.6,634.2 512.0,640.0 532.4,638.6 549.9,643.0 561.5,641.5 573.2,640.0 590.7,650.2 608.2,650.2 625.7,651.7 637.4,648.8 657.8,653.2 672.3,651.7 680.0,656.1 689.2,660.7 704.5,660.7 716.7,663.8 728.9,666.8 741.2,672.9 753.4,669.9 765.6,674.5 784.0,671.4 796.2,672.9 802.3,669.9 820.7,666.8 832.9,672.9 851.3,671.4 869.6,671.4 888.0,677.5 906.3,688.2 921.6,683.6 936.9,685.2 949.1,680.6 961.3,680.6 973.6,686.7 991.9,689.7 1004.1,697.4 1022.5,697.4 1040.9,700.5 1059.3,692.8 1077.6,695.9 1105.1,695.9" fill="none" stroke="#0a9a0a" stroke-width="1.2" shape-rendering="auto" stroke-linejoin="round" stroke-linecap="round" /><polyline points="4.9,653.2 9.7,658.0 25.3,662.9 33.1,675.6 46.7,669.7 54.5,672.6 62.3,687.2 70.0,679.4 81.7,672.6 89.5,677.5 95.3,671.7 103.1,674.6 106.0,681.4 110.9,675.6 118.7,676.5 125.5,673.6 130.4,682.4 140.1,681.4 147.9,680.4 153.7,686.3 165.4,690.1 173.2,689.2 177.0,672.6 182.9,675.6 194.6,668.7 202.3,659.0 210.1,664.9 219.8,658.0 225.7,670.7 233.5,671.7 237.4,676.5 245.1,666.8 252.9,671.7 264.6,670.7 270.0,650.2 281.7,651.7 290.4,647.3 293.3,635.7 297.7,656.1 307.9,663.4 319.6,661.9 323.9,638.6 331.2,631.3 340.0,637.1 351.6,635.7 363.3,634.2 375.0,641.5 386.6,644.4 392.4,641.5 398.3,653.2 409.9,653.2 421.6,642.9 430.3,644.4 436.2,659.0 444.9,651.7 456.6,650.2 474.1,663.4 479.9,660.4 491.6,660.4 509.1,676.5 523.6,675.0 532.4,679.4 538.2,676.5 544.0,686.7 555.7,685.2 561.5,691.0 567.4,675.0 581.9,672.1 590.7,682.3 602.4,680.9 619.9,685.2 631.5,694.0 637.4,680.9 649.0,682.3 660.7,691.0 672.3,689.6 680.0,694.3 689.2,698.9 704.5,689.7 719.8,691.3 728.9,694.3 738.1,698.9 750.3,697.4 753.4,685.2 765.6,688.2 784.0,688.2 793.1,692.8 800.8,657.6 805.4,663.8 820.7,659.2 839.0,662.2 845.1,657.6 851.3,659.2 855.8,654.6 863.5,656.1 869.6,637.8 878.8,651.5 888.0,653.1 906.3,660.7 918.5,653.1 921.6,642.3 927.7,657.6 933.8,654.6 943.0,662.2 952.2,648.5 964.4,650.0 979.7,656.1 998.0,666.8 1010.3,665.3 1022.5,666.8 1034.7,659.2 1046.9,663.8 1065.3,656.1 1083.6,651.5 1089.7,654.6 1095.9,642.3 1105.1,637.8" fill="none" stroke="#e87818" stroke-width="1.2" shape-rendering="auto" stroke-linejoin="round" stroke-linecap="round" /><path d="M4.9 656.1 C7.3 655.6 14.5 654.5 19.5 653.2 C24.5 651.9 28.9 649.9 35.0 648.3 C41.1 646.7 49.9 644.3 56.4 643.5 C62.9 642.7 68.4 643.0 73.9 643.5 C79.4 644.0 84.3 645.1 89.5 646.4 C94.7 647.7 99.9 649.4 105.1 651.2 C110.3 653.0 116.1 655.3 120.6 657.1 C125.1 658.9 127.8 659.5 132.3 661.9 C136.9 664.3 141.4 668.5 147.9 671.7 C154.4 675.0 164.7 678.8 171.2 681.4 C177.7 684.0 182.3 685.6 186.8 687.2 C191.3 688.8 193.9 690.0 198.4 691.1 C202.9 692.2 208.2 692.7 214.0 694.0 C219.8 695.3 227.0 697.9 233.5 698.9 C240.0 699.9 246.8 699.8 252.9 699.9 C259.0 700.0 263.3 699.7 270.0 699.2 C276.7 698.7 284.6 698.0 293.3 696.9 C302.1 695.8 314.2 695.7 322.5 692.5 C330.8 689.3 336.1 683.0 342.9 677.9 C349.7 672.8 356.0 667.0 363.3 661.9 C370.6 656.8 378.8 650.7 386.6 647.3 C394.4 643.9 401.1 643.4 409.9 641.5 C418.6 639.6 429.4 637.4 439.1 635.7 C448.8 634.0 460.4 632.2 468.2 631.3 C476.0 630.4 478.9 630.2 485.7 630.4 C492.5 630.5 501.3 631.1 509.1 632.2 C516.9 633.3 524.6 634.6 532.4 637.1 C540.2 639.6 547.9 644.1 555.7 647.3 C563.5 650.5 571.2 652.2 579.0 656.1 C586.8 660.0 594.6 666.0 602.4 670.6 C610.2 675.2 617.9 680.4 625.7 683.8 C633.5 687.2 641.2 688.4 649.0 691.0 C656.8 693.6 665.5 697.6 672.3 699.2 C679.1 700.8 675.8 699.9 689.8 700.4 C703.8 700.9 737.8 702.0 756.5 702.0 C775.2 702.0 784.5 701.5 802.3 700.5 C820.1 699.5 843.1 697.4 863.5 695.9 C883.9 694.4 909.4 693.1 924.7 691.3 C940.0 689.5 945.0 687.2 955.2 685.2 C965.4 683.2 975.6 680.8 985.8 679.0 C996.0 677.2 1007.1 676.0 1016.3 674.5 C1025.5 673.0 1030.7 670.9 1040.9 669.9 C1051.1 668.9 1066.9 668.6 1077.6 668.3 C1088.3 668.0 1100.5 668.3 1105.1 668.3" fill="none" stroke="#ff1010" stroke-width="3.2" shape-rendering="auto" stroke-linejoin="round" stroke-linecap="round" /><path d="M4.9 634.7 C8.0 636.3 18.3 641.0 23.3 644.4 C28.3 647.8 31.1 650.7 35.0 655.1 C38.9 659.5 43.1 665.8 46.7 670.7 C50.3 675.6 53.5 680.7 56.4 684.3 C59.3 687.9 60.6 689.8 64.2 692.1 C67.8 694.4 73.9 696.5 77.8 697.9 C81.7 699.3 75.2 700.3 87.5 700.8 C99.8 701.3 135.2 701.1 151.8 700.8 C168.4 700.5 177.7 699.7 186.8 698.9 C195.9 698.1 201.7 697.1 206.2 696.0 C210.7 694.9 210.8 693.7 214.0 692.1 C217.2 690.5 221.8 687.9 225.7 686.3 C229.6 684.7 233.8 682.7 237.4 682.4 C241.0 682.1 242.6 684.0 247.1 684.3 C251.6 684.6 260.8 684.9 264.6 684.3 C268.4 683.7 266.7 684.1 270.0 680.9 C273.3 677.6 279.7 670.1 284.6 664.8 C289.5 659.4 295.3 652.1 299.2 648.8 C303.1 645.5 304.0 645.2 307.9 645.0 C311.8 644.8 318.1 647.9 322.5 647.3 C326.9 646.7 329.2 643.0 334.1 641.5 C339.0 640.0 345.8 639.6 351.6 638.6 C357.4 637.6 361.3 636.9 369.1 635.7 C376.9 634.5 388.6 631.9 398.3 631.3 C408.0 630.7 418.6 631.5 427.4 632.2 C436.1 632.9 443.0 634.2 450.8 635.7 C458.6 637.2 467.3 638.6 474.1 641.5 C480.9 644.4 486.8 648.1 491.6 653.2 C496.5 658.3 499.3 667.2 503.2 672.1 C507.1 677.0 510.0 679.2 514.9 682.3 C519.8 685.4 524.6 688.5 532.4 690.5 C540.2 692.5 551.8 692.4 561.5 694.0 C571.2 695.6 571.0 699.3 590.7 700.4 C610.5 701.5 652.4 700.2 680.0 700.5 C707.6 700.8 737.6 702.0 756.5 702.0 C775.4 702.0 783.4 701.3 793.1 700.5 C802.8 699.7 808.0 698.9 814.6 697.4 C821.2 695.9 826.8 693.6 832.9 691.3 C839.0 689.0 846.2 686.7 851.3 683.6 C856.4 680.5 858.9 677.7 863.5 672.9 C868.1 668.1 873.7 660.0 878.8 654.6 C883.9 649.2 889.5 644.0 894.1 640.8 C898.7 637.6 901.2 636.4 906.3 635.6 C911.4 634.8 919.1 635.3 924.7 636.2 C930.3 637.1 936.3 639.3 939.9 640.8 C943.5 642.3 942.0 643.9 946.1 645.4 C950.2 646.9 958.8 647.2 964.4 650.0 C970.0 652.8 976.1 659.9 979.7 662.2 C983.3 664.5 982.8 661.5 985.8 663.8 C988.8 666.1 992.9 671.9 998.0 676.0 C1003.1 680.1 1009.1 685.2 1016.3 688.2 C1023.4 691.2 1033.7 693.4 1040.9 694.3 C1048.1 695.2 1053.2 694.5 1059.3 693.7 C1065.4 692.9 1072.0 690.6 1077.6 689.7 C1083.2 688.8 1089.3 689.2 1092.9 688.2 C1096.5 687.2 1097.0 686.2 1099.0 683.6 C1101.0 681.0 1104.1 674.7 1105.1 672.9" fill="none" stroke="#ffffff" stroke-width="3.2" shape-rendering="auto" stroke-linejoin="round" stroke-linecap="round" /><line x1="5" y1="727.5" x2="1392" y2="727.5" stroke="#8c8c8c" stroke-dasharray="10 6"/><line x1="5" y1="786.5" x2="1392" y2="786.5" stroke="#8c8c8c" stroke-dasharray="10 6"/><polyline points="4.9,718.6 58.4,725.4 116.7,732.2 175.1,734.2 233.5,735.2 270.0,737.1 328.3,735.6 386.6,726.9 459.5,719.0 532.4,725.4 590.7,735.6 649.0,741.4 689.8,750.2 741.2,766.2 802.3,781.5 863.5,776.9 924.7,781.5 985.8,783.0 1047.0,795.2 1105.1,792.2" fill="none" stroke="#ff2a10" stroke-width="1.1" shape-rendering="auto" stroke-linejoin="round" stroke-linecap="round" stroke-dasharray="3 2"/><polyline points="4.9,721.5 19.5,723.5 33.1,729.3 38.9,727.4 54.5,728.3 60.3,736.1 68.1,733.2 81.7,730.3 89.5,733.2 97.3,732.2 105.1,736.1 112.8,732.2 124.5,730.3 136.2,732.2 147.9,731.3 159.5,735.2 171.2,736.1 182.9,734.2 194.6,734.2 206.2,736.1 217.9,734.2 229.6,739.0 241.2,737.1 252.9,740.0 264.6,741.0 270.0,735.6 287.5,735.6 293.3,731.2 302.1,740.0 316.6,740.0 328.3,731.2 340.0,728.3 357.5,724.0 375.0,725.4 386.6,722.5 404.1,726.9 421.6,719.6 444.9,718.1 462.4,715.2 479.9,719.6 491.6,716.7 509.1,721.0 523.6,726.9 538.2,728.3 544.0,734.2 561.5,734.2 579.0,729.8 590.7,740.0 608.2,740.0 631.5,742.9 649.0,741.4 660.7,750.2 678.2,750.2 689.2,760.0 704.5,760.0 722.8,763.1 741.2,778.4 753.4,778.4 771.7,783.0 793.1,787.6 800.8,776.9 814.6,776.9 832.9,778.4 851.3,776.9 869.6,770.7 881.8,778.4 894.1,778.4 906.3,786.1 921.6,779.9 936.9,786.1 949.1,779.9 964.4,778.4 985.8,786.1 998.0,795.2 1016.3,796.7 1034.7,795.2 1059.3,792.2 1071.4,793.7 1089.7,787.6 1105.1,786.1" fill="none" stroke="#0a9a0a" stroke-width="1.2" shape-rendering="auto" stroke-linejoin="round" stroke-linecap="round" /><path d="M4.9 793.5 C7.3 793.8 13.8 794.5 19.5 795.5 C25.2 796.5 29.8 798.9 38.9 799.4 C48.0 799.9 66.1 799.9 73.9 798.4 C81.7 796.9 82.7 793.2 85.6 790.6 C88.5 788.0 88.8 785.7 91.4 782.8 C94.0 779.9 98.8 772.8 101.2 773.1 C103.6 773.4 103.4 783.0 106.0 784.8 C108.6 786.6 113.6 784.8 116.7 783.8 C119.8 782.8 121.9 777.4 124.5 778.9 C127.1 780.4 127.8 789.2 132.3 792.5 C136.9 795.8 143.7 797.6 151.8 798.4 C159.9 799.2 175.1 800.0 180.9 797.4 C186.7 794.8 184.5 793.0 186.8 782.8 C189.1 772.6 192.0 747.1 194.6 736.1 C197.2 725.1 198.1 719.9 202.3 716.7 C206.5 713.5 215.9 715.4 219.8 716.7 C223.7 718.0 224.1 720.0 225.7 724.5 C227.3 729.0 228.0 734.8 229.6 743.9 C231.2 753.0 232.8 771.8 235.4 778.9 C238.0 786.0 242.2 784.8 245.1 786.7 C248.0 788.7 249.3 790.3 252.9 790.6 C256.5 790.9 263.6 796.2 266.5 788.7 C269.4 781.2 268.4 756.3 270.0 745.8 C271.6 735.2 273.4 730.2 275.8 725.4 C278.2 720.5 281.7 718.4 284.6 716.7 C287.5 715.0 290.4 714.2 293.3 715.2 C296.2 716.2 299.2 716.9 302.1 722.5 C305.0 728.1 307.9 739.2 310.8 748.7 C313.7 758.2 317.2 779.3 319.6 779.3 C322.0 779.3 323.5 758.7 325.4 748.7 C327.3 738.8 328.8 725.2 331.2 719.6 C333.6 714.0 333.2 715.9 340.0 715.2 C346.8 714.5 365.2 712.5 372.0 715.2 C378.8 717.9 378.4 726.6 380.8 731.2 C383.2 735.8 384.2 740.2 386.6 742.9 C389.0 745.6 392.5 741.0 395.4 747.3 C398.3 753.6 401.7 773.8 404.1 780.8 C406.5 787.8 407.5 792.4 409.9 789.5 C412.3 786.6 415.8 773.5 418.7 763.3 C421.6 753.1 425.0 735.3 427.4 728.3 C429.8 721.2 430.9 719.5 433.3 721.0 C435.7 722.5 439.1 733.5 442.0 737.1 C444.9 740.8 447.9 742.7 450.8 742.9 C453.7 743.1 456.6 736.5 459.5 738.5 C462.4 740.5 465.8 748.0 468.2 754.6 C470.6 761.2 471.7 772.3 474.1 777.9 C476.5 783.5 479.4 788.1 482.8 788.1 C486.2 788.1 490.6 778.1 494.5 777.9 C498.4 777.6 502.2 783.2 506.1 786.6 C510.0 790.0 508.6 796.3 517.8 798.3 C527.0 800.2 552.3 799.3 561.5 798.3 C570.7 797.3 569.8 798.8 573.2 792.5 C576.6 786.2 580.0 765.8 581.9 760.4 C583.8 755.0 583.4 757.5 584.9 760.4 C586.4 763.3 588.3 773.0 590.7 777.9 C593.1 782.8 594.5 786.4 599.4 789.5 C604.3 792.6 611.6 796.3 619.9 796.8 C628.2 797.3 641.7 792.2 649.0 792.5 C656.3 792.8 658.4 797.1 663.6 798.3 C668.8 799.5 670.6 800.1 680.0 799.8 C689.4 799.5 711.1 797.2 719.8 796.7 C728.5 796.2 725.9 796.7 732.0 796.7 C738.1 796.7 749.4 797.5 756.5 796.7 C763.6 796.0 769.7 792.7 774.8 792.2 C779.9 791.7 783.7 793.0 787.0 793.7 C790.3 794.5 792.2 799.8 794.7 796.7 C797.2 793.6 799.5 786.5 802.3 775.3 C805.1 764.1 807.9 739.2 811.5 729.5 C815.1 719.8 819.6 718.5 823.7 717.2 C827.8 715.9 832.9 718.7 836.0 721.8 C839.1 724.9 839.6 732.8 842.1 735.6 C844.6 738.4 847.7 739.4 851.3 738.6 C854.9 737.8 861.0 731.2 863.5 731.0 C866.0 730.8 865.0 739.1 866.5 737.1 C868.0 735.1 870.2 721.1 872.7 718.8 C875.2 716.5 878.2 719.5 881.8 723.3 C885.4 727.1 890.5 734.6 894.1 741.7 C897.7 748.9 901.2 758.6 903.2 766.2 C905.2 773.9 904.8 783.3 906.3 787.6 C907.8 791.9 909.8 796.5 912.4 792.2 C915.0 787.9 918.5 767.0 921.6 761.6 C924.7 756.2 928.2 760.0 930.8 760.0 C933.3 760.0 934.9 758.8 936.9 761.6 C938.9 764.4 940.0 778.2 943.0 776.9 C946.0 775.6 951.1 761.3 955.2 753.9 C959.3 746.5 964.4 733.0 967.5 732.5 C970.6 732.0 970.6 744.5 973.6 750.9 C976.6 757.3 982.2 763.6 985.8 770.7 C989.4 777.8 992.0 789.1 995.0 793.7 C998.0 798.3 999.5 797.8 1004.1 798.3 C1008.7 798.8 1016.9 803.3 1022.5 796.7 C1028.1 790.1 1034.0 763.1 1037.8 758.5 C1041.6 753.9 1042.9 768.4 1045.4 769.2 C1048.0 770.0 1050.3 768.5 1053.1 763.1 C1055.9 757.8 1059.2 740.2 1062.3 737.1 C1065.3 734.0 1067.3 747.6 1071.4 744.8 C1075.5 742.0 1083.1 723.9 1086.7 720.3 C1090.3 716.7 1089.8 724.3 1092.9 723.3 C1096.0 722.3 1103.1 715.7 1105.1 714.2" fill="none" stroke="#ffffff" stroke-width="1.2" shape-rendering="auto" stroke-linejoin="round" stroke-linecap="round" /><path d="M4.9 783.8 C7.3 785.2 15.1 789.6 19.5 792.5 C23.9 795.4 27.9 799.5 31.1 801.3 C34.3 803.1 13.6 802.9 38.9 803.2 C64.2 803.5 157.6 805.3 182.9 803.2 C208.2 801.1 187.8 799.2 190.7 790.6 C193.6 782.0 197.5 762.4 200.4 751.7 C203.3 741.0 205.0 732.2 208.2 726.4 C211.4 720.6 216.6 716.1 219.8 716.7 C223.0 717.4 225.3 722.5 227.6 730.3 C229.9 738.1 231.2 753.0 233.5 763.4 C235.8 773.8 236.7 786.4 241.2 792.5 C245.7 798.6 256.1 799.6 260.7 800.3 C265.2 800.9 266.0 809.4 268.5 796.4 C271.0 783.4 272.6 736.5 275.8 722.5 C279.0 708.5 283.6 714.2 287.5 712.3 C291.4 710.3 295.8 709.1 299.2 710.8 C302.6 712.5 305.5 715.2 307.9 722.5 C310.3 729.8 311.5 745.9 313.7 754.6 C315.9 763.4 319.1 777.0 321.0 775.0 C322.9 773.0 323.7 753.1 325.4 742.9 C327.1 732.7 328.8 719.1 331.2 713.7 C333.6 708.4 329.3 711.0 340.0 710.8 C350.7 710.6 385.2 710.3 395.4 712.3 C405.6 714.2 398.3 717.4 401.2 722.5 C404.1 727.6 409.5 741.9 412.9 742.9 C416.3 743.9 418.2 733.2 421.6 728.3 C425.0 723.4 429.9 714.7 433.3 713.7 C436.7 712.7 439.6 720.3 442.0 722.5 C444.4 724.7 444.9 727.1 447.8 726.9 C450.7 726.6 456.1 720.3 459.5 721.0 C462.9 721.7 465.8 724.2 468.2 731.2 C470.6 738.2 472.2 755.0 474.1 763.3 C476.1 771.6 478.0 776.7 479.9 780.8 C481.8 784.9 483.3 788.4 485.7 788.1 C488.1 787.9 491.6 780.0 494.5 779.3 C497.4 778.6 500.3 781.0 503.2 783.7 C506.1 786.4 509.1 792.2 512.0 795.4 C514.9 798.6 472.8 801.5 520.7 802.7 C568.6 804.0 751.8 805.9 799.3 802.9 C846.8 799.9 803.4 794.7 805.4 784.5 C807.4 774.3 809.0 752.4 811.5 741.7 C814.0 731.0 817.6 724.1 820.7 720.3 C823.8 716.5 826.9 718.0 829.9 718.8 C832.9 719.6 836.0 722.9 839.0 724.9 C842.0 726.9 845.1 730.8 848.2 731.0 C851.3 731.2 854.4 728.7 857.4 726.4 C860.4 724.1 863.5 719.8 866.5 717.2 C869.5 714.7 872.1 711.9 875.7 711.1 C879.3 710.3 884.4 710.6 888.0 712.6 C891.6 714.6 894.6 717.4 897.1 723.3 C899.6 729.2 901.2 738.6 903.2 747.8 C905.2 757.0 906.9 773.3 909.4 778.4 C911.9 783.5 916.0 782.2 918.5 778.4 C921.0 774.6 922.2 758.6 924.7 755.5 C927.2 752.4 931.3 756.7 933.8 760.0 C936.3 763.3 937.8 769.9 939.9 775.3 C942.0 780.7 943.5 791.7 946.1 792.2 C948.7 792.7 952.2 787.3 955.2 778.4 C958.2 769.5 961.9 747.3 964.4 738.6 C966.9 729.9 968.0 725.9 970.5 726.4 C973.0 726.9 976.6 733.6 979.7 741.7 C982.8 749.9 985.9 766.1 988.9 775.3 C991.9 784.5 994.4 792.1 998.0 796.7 C1001.6 801.3 1005.2 801.9 1010.3 802.9 C1015.4 803.9 1023.5 803.7 1028.6 802.9 C1033.7 802.1 1036.3 799.8 1040.9 798.3 C1045.5 796.8 1052.0 797.0 1056.1 793.7 C1060.2 790.4 1062.2 782.0 1065.3 778.4 C1068.4 774.8 1070.9 777.9 1074.5 772.3 C1078.1 766.7 1083.1 753.5 1086.7 744.8 C1090.3 736.1 1092.8 725.9 1095.9 720.3 C1099.0 714.7 1103.6 712.6 1105.1 711.1" fill="none" stroke="#ff10ff" stroke-width="1.2" shape-rendering="auto" stroke-linejoin="round" stroke-linecap="round" /><polyline points="4.9,713.8 9.7,714.7 13.6,720.6 19.5,725.4 25.3,736.1 33.1,745.9 38.9,756.6 41.8,777.0 50.6,778.0 54.5,787.7 66.1,788.7 70.0,794.5 83.7,795.5 87.5,797.4 116.7,799.4 198.4,799.4" fill="none" stroke="#ff1aa6" stroke-width="3.5" shape-rendering="auto" stroke-linejoin="round" stroke-linecap="round" /><polyline points="225.7,766.3 229.6,781.8 237.4,783.8 241.2,790.6 256.8,791.6 260.7,794.5 270.0,795.4 278.7,795.4 293.3,785.2 297.7,791.0 310.8,795.4 325.4,795.4 334.1,786.6 340.0,792.5 348.7,792.5 357.5,793.9 366.2,789.5 375.0,795.4 386.6,796.8 404.1,798.3 430.3,799.8 433.3,788.1 444.9,788.1 450.8,792.5 462.4,793.9 474.1,796.8 485.7,798.3 517.8,799.0 1099.0,799.0" fill="none" stroke="#ff1aa6" stroke-width="3.5" shape-rendering="auto" stroke-linejoin="round" stroke-linecap="round" /><polyline points="4.9,713.8 9.0,713.8" fill="none" stroke="#1e90ff" stroke-width="3.5" shape-rendering="auto" stroke-linejoin="round" stroke-linecap="round" /><polyline points="198.4,799.4 202.3,787.7 210.1,786.7 214.0,777.0 221.8,767.3 225.7,766.3" fill="none" stroke="#1e90ff" stroke-width="3.5" shape-rendering="auto" stroke-linejoin="round" stroke-linecap="round" /><polyline points="269.5,794.5 272.9,789.5" fill="none" stroke="#1e90ff" stroke-width="3.5" shape-rendering="auto" stroke-linejoin="round" stroke-linecap="round" /><polyline points="287.5,791.0 293.3,785.2" fill="none" stroke="#1e90ff" stroke-width="3.5" shape-rendering="auto" stroke-linejoin="round" stroke-linecap="round" /><polyline points="325.4,795.4 332.7,786.6" fill="none" stroke="#1e90ff" stroke-width="3.5" shape-rendering="auto" stroke-linejoin="round" stroke-linecap="round" /><polyline points="357.5,792.5 364.8,788.1" fill="none" stroke="#1e90ff" stroke-width="3.5" shape-rendering="auto" stroke-linejoin="round" stroke-linecap="round" /><polyline points="430.3,799.8 434.7,788.1 443.5,788.1" fill="none" stroke="#1e90ff" stroke-width="3.5" shape-rendering="auto" stroke-linejoin="round" stroke-linecap="round" /><polyline points="1099.0,798.3 1102.0,789.1 1105.1,787.6" fill="none" stroke="#1e90ff" stroke-width="3.5" shape-rendering="auto" stroke-linejoin="round" stroke-linecap="round" /><polyline points="272.4,789.6 278.0,795.5" fill="none" stroke="#f0a050" stroke-width="3.5" shape-rendering="auto" stroke-linejoin="round" stroke-linecap="round" /><polyline points="351.6,788.1 357.5,792.5" fill="none" stroke="#f0a050" stroke-width="3.5" shape-rendering="auto" stroke-linejoin="round" stroke-linecap="round" /><polyline points="363.3,789.5 369.1,793.9" fill="none" stroke="#f0a050" stroke-width="3.5" shape-rendering="auto" stroke-linejoin="round" stroke-linecap="round" /><polyline points="4.9,713.8 9.7,713.8 10.7,745.9 12.6,784.8 13.6,799.4 198.4,799.4 200.4,714.7 225.7,714.7 227.6,782.8 241.2,796.4 268.5,799.4 272.9,718.1 275.8,769.1 284.6,769.1 287.5,734.2 291.9,718.1 294.8,769.1 309.4,769.1 310.8,792.5 325.4,792.5 328.3,716.7 334.1,716.7 337.1,767.7 348.7,767.7 353.1,724.0 357.5,777.9 360.4,777.9 366.2,740.0 370.6,777.9 375.0,783.7 386.6,783.7 389.5,795.4 404.1,798.3 430.3,798.3 431.8,716.7 444.9,716.7 447.8,789.5 462.4,792.5 479.9,798.3 1099.0,799.2 1102.0,714.2" fill="none" stroke="#f8f000" stroke-width="1.2" shape-rendering="auto" stroke-linejoin="round" stroke-linecap="round" stroke-dasharray="3 2"/><rect x="5" y="809" width="3" height="23" fill="#6e0000"/><rect x="9" y="809" width="3" height="23" fill="#6e0000"/><rect x="13" y="809" width="3" height="23" fill="#6e0000"/><rect x="17" y="809" width="3" height="23" fill="#6e0000"/><rect x="21" y="809" width="3" height="23" fill="#6e0000"/><rect x="25" y="809" width="3" height="23" fill="#6e0000"/><rect x="29" y="809" width="3" height="23" fill="#6e0000"/><rect x="33" y="809" width="3" height="23" fill="#6e0000"/><rect x="37" y="809" width="3" height="23" fill="#6e0000"/><rect x="41" y="809" width="3" height="23" fill="#6e0000"/><rect x="45" y="809" width="3" height="23" fill="#6e0000"/><rect x="49" y="809" width="3" height="23" fill="#6e0000"/><rect x="53" y="809" width="3" height="23" fill="#6e0000"/><rect x="57" y="809" width="3" height="23" fill="#6e0000"/><rect x="61" y="809" width="3" height="23" fill="#6e0000"/><rect x="65" y="809" width="3" height="23" fill="#6e0000"/><rect x="69" y="809" width="3" height="23" fill="#6e0000"/><rect x="73" y="809" width="3" height="23" fill="#6e0000"/><rect x="77" y="809" width="3" height="23" fill="#6e0000"/><rect x="81" y="809" width="3" height="23" fill="#6e0000"/><rect x="85" y="809" width="3" height="23" fill="#6e0000"/><rect x="89" y="809" width="3" height="23" fill="#6e0000"/><rect x="93" y="809" width="3" height="23" fill="#6e0000"/><rect x="97" y="809" width="3" height="23" fill="#6e0000"/><rect x="101" y="809" width="3" height="23" fill="#6e0000"/><rect x="105" y="809" width="3" height="23" fill="#6e0000"/><rect x="109" y="809" width="3" height="23" fill="#6e0000"/><rect x="113" y="809" width="3" height="23" fill="#6e0000"/><rect x="117" y="809" width="3" height="23" fill="#6e0000"/><rect x="121" y="809" width="3" height="23" fill="#6e0000"/><rect x="125" y="809" width="3" height="23" fill="#6e0000"/><rect x="129" y="809" width="3" height="23" fill="#6e0000"/><rect x="133" y="809" width="3" height="23" fill="#6e0000"/><rect x="137" y="809" width="3" height="23" fill="#6e0000"/><rect x="141" y="809" width="3" height="23" fill="#6e0000"/><rect x="145" y="809" width="3" height="23" fill="#6e0000"/><rect x="149" y="809" width="3" height="23" fill="#6e0000"/><rect x="153" y="809" width="3" height="23" fill="#6e0000"/><rect x="157" y="809" width="3" height="23" fill="#6e0000"/><rect x="161" y="809" width="3" height="23" fill="#6e0000"/><rect x="165" y="809" width="3" height="23" fill="#6e0000"/><rect x="169" y="809" width="3" height="23" fill="#6e0000"/><rect x="173" y="809" width="3" height="23" fill="#6e0000"/><rect x="177" y="809" width="3" height="23" fill="#6e0000"/><rect x="181" y="809" width="3" height="23" fill="#6e0000"/><rect x="184" y="809" width="3" height="23" fill="#0a4a0a"/><rect x="188" y="809" width="3" height="23" fill="#0a4a0a"/><rect x="192" y="809" width="3" height="23" fill="#0a4a0a"/><rect x="196" y="809" width="3" height="23" fill="#0a4a0a"/><rect x="200" y="809" width="3" height="23" fill="#0a4a0a"/><rect x="204" y="809" width="3" height="23" fill="#0a4a0a"/><rect x="208" y="809" width="3" height="23" fill="#0a4a0a"/><rect x="212" y="809" width="3" height="23" fill="#0a4a0a"/><rect x="216" y="809" width="3" height="23" fill="#0a4a0a"/><rect x="220" y="809" width="3" height="23" fill="#0a4a0a"/><rect x="224" y="809" width="3" height="23" fill="#0a4a0a"/><rect x="228" y="809" width="3" height="23" fill="#6e0000"/><rect x="232" y="809" width="3" height="23" fill="#6e0000"/><rect x="236" y="809" width="3" height="23" fill="#6e0000"/><rect x="240" y="809" width="3" height="23" fill="#6e0000"/><rect x="244" y="809" width="3" height="23" fill="#6e0000"/><rect x="248" y="809" width="3" height="23" fill="#6e0000"/><rect x="252" y="809" width="3" height="23" fill="#6e0000"/><rect x="256" y="809" width="3" height="23" fill="#6e0000"/><rect x="260" y="809" width="3" height="23" fill="#6e0000"/><rect x="264" y="809" width="3" height="23" fill="#6e0000"/><rect x="268" y="809" width="3" height="23" fill="#0a4a0a"/><rect x="272" y="809" width="3" height="23" fill="#0a4a0a"/><rect x="276" y="809" width="3" height="23" fill="#0a4a0a"/><rect x="280" y="809" width="3" height="23" fill="#0a4a0a"/><rect x="284" y="809" width="3" height="23" fill="#0a4a0a"/><rect x="288" y="809" width="3" height="23" fill="#0a4a0a"/><rect x="292" y="809" width="3" height="23" fill="#0a4a0a"/><rect x="296" y="809" width="3" height="23" fill="#0a4a0a"/><rect x="300" y="809" width="3" height="23" fill="#0a4a0a"/><rect x="304" y="809" width="3" height="23" fill="#6e0000"/><rect x="308" y="809" width="3" height="23" fill="#6e0000"/><rect x="312" y="809" width="3" height="23" fill="#6e0000"/><rect x="316" y="809" width="3" height="23" fill="#6e0000"/><rect x="320" y="809" width="3" height="23" fill="#6e0000"/><rect x="324" y="809" width="3" height="23" fill="#0a4a0a"/><rect x="328" y="809" width="3" height="23" fill="#0a4a0a"/><rect x="332" y="809" width="3" height="23" fill="#0a4a0a"/><rect x="336" y="809" width="3" height="23" fill="#0a4a0a"/><rect x="340" y="809" width="3" height="23" fill="#0a4a0a"/><rect x="344" y="809" width="3" height="23" fill="#0a4a0a"/><rect x="348" y="809" width="3" height="23" fill="#0a4a0a"/><rect x="352" y="809" width="3" height="23" fill="#0a4a0a"/><rect x="356" y="809" width="3" height="23" fill="#0a4a0a"/><rect x="360" y="809" width="3" height="23" fill="#0a4a0a"/><rect x="364" y="809" width="3" height="23" fill="#0a4a0a"/><rect x="368" y="809" width="3" height="23" fill="#0a4a0a"/><rect x="372" y="809" width="3" height="23" fill="#0a4a0a"/><rect x="376" y="809" width="3" height="23" fill="#0a4a0a"/><rect x="380" y="809" width="3" height="23" fill="#0a4a0a"/><rect x="384" y="809" width="3" height="23" fill="#0a4a0a"/><rect x="388" y="809" width="3" height="23" fill="#0a4a0a"/><rect x="392" y="809" width="3" height="23" fill="#0a4a0a"/><rect x="396" y="809" width="3" height="23" fill="#6e0000"/><rect x="400" y="809" width="3" height="23" fill="#6e0000"/><rect x="404" y="809" width="3" height="23" fill="#6e0000"/><rect x="408" y="809" width="3" height="23" fill="#6e0000"/><rect x="412" y="809" width="3" height="23" fill="#6e0000"/><rect x="416" y="809" width="3" height="23" fill="#0a4a0a"/><rect x="420" y="809" width="3" height="23" fill="#0a4a0a"/><rect x="424" y="809" width="3" height="23" fill="#0a4a0a"/><rect x="428" y="809" width="3" height="23" fill="#0a4a0a"/><rect x="432" y="809" width="3" height="23" fill="#0a4a0a"/><rect x="436" y="809" width="3" height="23" fill="#0a4a0a"/><rect x="440" y="809" width="3" height="23" fill="#6e0000"/><rect x="444" y="809" width="3" height="23" fill="#0a4a0a"/><rect x="448" y="809" width="3" height="23" fill="#0a4a0a"/><rect x="452" y="809" width="3" height="23" fill="#0a4a0a"/><rect x="456" y="809" width="3" height="23" fill="#0a4a0a"/><rect x="460" y="809" width="3" height="23" fill="#0a4a0a"/><rect x="464" y="809" width="3" height="23" fill="#0a4a0a"/><rect x="467" y="809" width="3" height="23" fill="#6e0000"/><rect x="471" y="809" width="3" height="23" fill="#6e0000"/><rect x="475" y="809" width="3" height="23" fill="#6e0000"/><rect x="479" y="809" width="3" height="23" fill="#6e0000"/><rect x="483" y="809" width="3" height="23" fill="#6e0000"/><rect x="487" y="809" width="3" height="23" fill="#6e0000"/><rect x="491" y="809" width="3" height="23" fill="#6e0000"/><rect x="495" y="809" width="3" height="23" fill="#6e0000"/><rect x="499" y="809" width="3" height="23" fill="#6e0000"/><rect x="503" y="809" width="3" height="23" fill="#6e0000"/><rect x="507" y="809" width="3" height="23" fill="#6e0000"/><rect x="511" y="809" width="3" height="23" fill="#6e0000"/><rect x="515" y="809" width="3" height="23" fill="#6e0000"/><rect x="519" y="809" width="3" height="23" fill="#6e0000"/><rect x="523" y="809" width="3" height="23" fill="#6e0000"/><rect x="527" y="809" width="3" height="23" fill="#6e0000"/><rect x="531" y="809" width="3" height="23" fill="#6e0000"/><rect x="535" y="809" width="3" height="23" fill="#6e0000"/><rect x="539" y="809" width="3" height="23" fill="#6e0000"/><rect x="543" y="809" width="3" height="23" fill="#6e0000"/><rect x="547" y="809" width="3" height="23" fill="#6e0000"/><rect x="551" y="809" width="3" height="23" fill="#6e0000"/><rect x="555" y="809" width="3" height="23" fill="#6e0000"/><rect x="559" y="809" width="3" height="23" fill="#6e0000"/><rect x="563" y="809" width="3" height="23" fill="#6e0000"/><rect x="567" y="809" width="3" height="23" fill="#6e0000"/><rect x="571" y="809" width="3" height="23" fill="#6e0000"/><rect x="575" y="809" width="3" height="23" fill="#6e0000"/><rect x="579" y="809" width="3" height="23" fill="#6e0000"/><rect x="583" y="809" width="3" height="23" fill="#6e0000"/><rect x="587" y="809" width="3" height="23" fill="#6e0000"/><rect x="591" y="809" width="3" height="23" fill="#6e0000"/><rect x="595" y="809" width="3" height="23" fill="#6e0000"/><rect x="599" y="809" width="3" height="23" fill="#6e0000"/><rect x="603" y="809" width="3" height="23" fill="#6e0000"/><rect x="607" y="809" width="3" height="23" fill="#6e0000"/><rect x="611" y="809" width="3" height="23" fill="#6e0000"/><rect x="615" y="809" width="3" height="23" fill="#6e0000"/><rect x="619" y="809" width="3" height="23" fill="#6e0000"/><rect x="623" y="809" width="3" height="23" fill="#6e0000"/><rect x="627" y="809" width="3" height="23" fill="#6e0000"/><rect x="631" y="809" width="3" height="23" fill="#6e0000"/><rect x="635" y="809" width="3" height="23" fill="#6e0000"/><rect x="639" y="809" width="3" height="23" fill="#6e0000"/><rect x="643" y="809" width="3" height="23" fill="#6e0000"/><rect x="647" y="809" width="3" height="23" fill="#6e0000"/><rect x="651" y="809" width="3" height="23" fill="#6e0000"/><rect x="655" y="809" width="3" height="23" fill="#6e0000"/><rect x="659" y="809" width="3" height="23" fill="#6e0000"/><rect x="663" y="809" width="3" height="23" fill="#6e0000"/><rect x="667" y="809" width="3" height="23" fill="#6e0000"/><rect x="671" y="809" width="3" height="23" fill="#6e0000"/><rect x="675" y="809" width="3" height="23" fill="#6e0000"/><rect x="679" y="809" width="3" height="23" fill="#6e0000"/><rect x="683" y="809" width="3" height="23" fill="#6e0000"/><rect x="687" y="809" width="3" height="23" fill="#6e0000"/><rect x="691" y="809" width="3" height="23" fill="#6e0000"/><rect x="695" y="809" width="3" height="23" fill="#6e0000"/><rect x="699" y="809" width="3" height="23" fill="#6e0000"/><rect x="703" y="809" width="3" height="23" fill="#6e0000"/><rect x="707" y="809" width="3" height="23" fill="#6e0000"/><rect x="711" y="809" width="3" height="23" fill="#6e0000"/><rect x="715" y="809" width="3" height="23" fill="#6e0000"/><rect x="719" y="809" width="3" height="23" fill="#6e0000"/><rect x="723" y="809" width="3" height="23" fill="#6e0000"/><rect x="727" y="809" width="3" height="23" fill="#6e0000"/><rect x="731" y="809" width="3" height="23" fill="#6e0000"/><rect x="735" y="809" width="3" height="23" fill="#6e0000"/><rect x="739" y="809" width="3" height="23" fill="#6e0000"/><rect x="743" y="809" width="3" height="23" fill="#6e0000"/><rect x="747" y="809" width="3" height="23" fill="#6e0000"/><rect x="751" y="809" width="3" height="23" fill="#6e0000"/><rect x="755" y="809" width="3" height="23" fill="#6e0000"/><rect x="759" y="809" width="3" height="23" fill="#6e0000"/><rect x="763" y="809" width="3" height="23" fill="#6e0000"/><rect x="767" y="809" width="3" height="23" fill="#6e0000"/><rect x="771" y="809" width="3" height="23" fill="#6e0000"/><rect x="775" y="809" width="3" height="23" fill="#6e0000"/><rect x="779" y="809" width="3" height="23" fill="#6e0000"/><rect x="783" y="809" width="3" height="23" fill="#6e0000"/><rect x="787" y="809" width="3" height="23" fill="#6e0000"/><rect x="791" y="809" width="3" height="23" fill="#6e0000"/><rect x="795" y="809" width="3" height="23" fill="#6e0000"/><rect x="799" y="809" width="3" height="23" fill="#6e0000"/><rect x="800" y="809" width="3" height="23" fill="#0a4a0a"/><rect x="804" y="809" width="3" height="23" fill="#0a4a0a"/><rect x="808" y="809" width="3" height="23" fill="#0a4a0a"/><rect x="812" y="809" width="3" height="23" fill="#0a4a0a"/><rect x="816" y="809" width="3" height="23" fill="#0a4a0a"/><rect x="820" y="809" width="3" height="23" fill="#0a4a0a"/><rect x="824" y="809" width="3" height="23" fill="#0a4a0a"/><rect x="828" y="809" width="3" height="23" fill="#0a4a0a"/><rect x="832" y="809" width="3" height="23" fill="#0a4a0a"/><rect x="836" y="809" width="3" height="23" fill="#0a4a0a"/><rect x="840" y="809" width="3" height="23" fill="#0a4a0a"/><rect x="844" y="809" width="3" height="23" fill="#0a4a0a"/><rect x="848" y="809" width="3" height="23" fill="#0a4a0a"/><rect x="852" y="809" width="3" height="23" fill="#0a4a0a"/><rect x="856" y="809" width="3" height="23" fill="#0a4a0a"/><rect x="860" y="809" width="3" height="23" fill="#0a4a0a"/><rect x="864" y="809" width="3" height="23" fill="#0a4a0a"/><rect x="868" y="809" width="3" height="23" fill="#0a4a0a"/><rect x="872" y="809" width="3" height="23" fill="#0a4a0a"/><rect x="876" y="809" width="3" height="23" fill="#0a4a0a"/><rect x="880" y="809" width="3" height="23" fill="#0a4a0a"/><rect x="884" y="809" width="3" height="23" fill="#0a4a0a"/><rect x="888" y="809" width="3" height="23" fill="#0a4a0a"/><rect x="892" y="809" width="3" height="23" fill="#0a4a0a"/><rect x="896" y="809" width="3" height="23" fill="#6e0000"/><rect x="900" y="809" width="3" height="23" fill="#6e0000"/><rect x="904" y="809" width="3" height="23" fill="#6e0000"/><rect x="908" y="809" width="3" height="23" fill="#6e0000"/><rect x="912" y="809" width="3" height="23" fill="#6e0000"/><rect x="916" y="809" width="3" height="23" fill="#6e0000"/><rect x="920" y="809" width="3" height="23" fill="#0a4a0a"/><rect x="924" y="809" width="3" height="23" fill="#6e0000"/><rect x="928" y="809" width="3" height="23" fill="#6e0000"/><rect x="932" y="809" width="3" height="23" fill="#6e0000"/><rect x="936" y="809" width="3" height="23" fill="#6e0000"/><rect x="940" y="809" width="3" height="23" fill="#6e0000"/><rect x="944" y="809" width="3" height="23" fill="#6e0000"/><rect x="948" y="809" width="3" height="23" fill="#6e0000"/><rect x="951" y="809" width="3" height="23" fill="#0a4a0a"/><rect x="955" y="809" width="3" height="23" fill="#0a4a0a"/><rect x="959" y="809" width="3" height="23" fill="#0a4a0a"/><rect x="963" y="809" width="3" height="23" fill="#0a4a0a"/><rect x="967" y="809" width="3" height="23" fill="#0a4a0a"/><rect x="971" y="809" width="3" height="23" fill="#0a4a0a"/><rect x="975" y="809" width="3" height="23" fill="#6e0000"/><rect x="979" y="809" width="3" height="23" fill="#6e0000"/><rect x="983" y="809" width="3" height="23" fill="#6e0000"/><rect x="987" y="809" width="3" height="23" fill="#6e0000"/><rect x="991" y="809" width="3" height="23" fill="#6e0000"/><rect x="995" y="809" width="3" height="23" fill="#6e0000"/><rect x="999" y="809" width="3" height="23" fill="#6e0000"/><rect x="1003" y="809" width="3" height="23" fill="#6e0000"/><rect x="1007" y="809" width="3" height="23" fill="#6e0000"/><rect x="1011" y="809" width="3" height="23" fill="#6e0000"/><rect x="1015" y="809" width="3" height="23" fill="#6e0000"/><rect x="1019" y="809" width="3" height="23" fill="#6e0000"/><rect x="1023" y="809" width="3" height="23" fill="#6e0000"/><rect x="1027" y="809" width="3" height="23" fill="#6e0000"/><rect x="1031" y="809" width="3" height="23" fill="#6e0000"/><rect x="1035" y="809" width="3" height="23" fill="#6e0000"/><rect x="1039" y="809" width="3" height="23" fill="#6e0000"/><rect x="1043" y="809" width="3" height="23" fill="#6e0000"/><rect x="1047" y="809" width="3" height="23" fill="#6e0000"/><rect x="1051" y="809" width="3" height="23" fill="#6e0000"/><rect x="1055" y="809" width="3" height="23" fill="#6e0000"/><rect x="1059" y="809" width="3" height="23" fill="#0a4a0a"/><rect x="1063" y="809" width="3" height="23" fill="#0a4a0a"/><rect x="1067" y="809" width="3" height="23" fill="#0a4a0a"/><rect x="1071" y="809" width="3" height="23" fill="#0a4a0a"/><rect x="1075" y="809" width="3" height="23" fill="#0a4a0a"/><rect x="1079" y="809" width="3" height="23" fill="#0a4a0a"/><rect x="1083" y="809" width="3" height="23" fill="#0a4a0a"/><rect x="1087" y="809" width="3" height="23" fill="#0a4a0a"/><rect x="1091" y="809" width="3" height="23" fill="#0a4a0a"/><rect x="1095" y="809" width="3" height="23" fill="#0a4a0a"/><rect x="1099" y="809" width="3" height="23" fill="#0a4a0a"/><rect x="1103" y="809" width="3" height="23" fill="#0a4a0a"/><line x1="9" y1="824.5" x2="180" y2="824.5" stroke="#8c0000" stroke-width="3.5" stroke-dasharray="3 1"/><line x1="188" y1="824.5" x2="224" y2="824.5" stroke="#0a6e0a" stroke-width="3.5" stroke-dasharray="3 1"/><line x1="232" y1="824.5" x2="264" y2="824.5" stroke="#8c0000" stroke-width="3.5" stroke-dasharray="3 1"/><line x1="272" y1="824.5" x2="300" y2="824.5" stroke="#0a6e0a" stroke-width="3.5" stroke-dasharray="3 1"/><line x1="308" y1="824.5" x2="320" y2="824.5" stroke="#8c0000" stroke-width="3.5" stroke-dasharray="3 1"/><line x1="328" y1="824.5" x2="392" y2="824.5" stroke="#0a6e0a" stroke-width="3.5" stroke-dasharray="3 1"/><line x1="400" y1="824.5" x2="412" y2="824.5" stroke="#8c0000" stroke-width="3.5" stroke-dasharray="3 1"/><line x1="420" y1="824.5" x2="436" y2="824.5" stroke="#0a6e0a" stroke-width="3.5" stroke-dasharray="3 1"/><line x1="448" y1="824.5" x2="463" y2="824.5" stroke="#0a6e0a" stroke-width="3.5" stroke-dasharray="3 1"/><line x1="471" y1="824.5" x2="796" y2="824.5" stroke="#8c0000" stroke-width="3.5" stroke-dasharray="3 1"/><line x1="804" y1="824.5" x2="892" y2="824.5" stroke="#0a6e0a" stroke-width="3.5" stroke-dasharray="3 1"/><line x1="900" y1="824.5" x2="916" y2="824.5" stroke="#8c0000" stroke-width="3.5" stroke-dasharray="3 1"/><line x1="928" y1="824.5" x2="947" y2="824.5" stroke="#8c0000" stroke-width="3.5" stroke-dasharray="3 1"/><line x1="955" y1="824.5" x2="971" y2="824.5" stroke="#0a6e0a" stroke-width="3.5" stroke-dasharray="3 1"/><line x1="979" y1="824.5" x2="1055" y2="824.5" stroke="#8c0000" stroke-width="3.5" stroke-dasharray="3 1"/><line x1="1063" y1="824.5" x2="1103" y2="824.5" stroke="#0a6e0a" stroke-width="3.5" stroke-dasharray="3 1"/><polyline points="5.0,818.8 15.0,819.5 25.0,820.5 35.0,825.0 55.0,825.5 65.0,829.5 75.0,828.8 95.0,825.0 130.0,825.0 140.0,825.8 155.0,826.8 170.0,830.0 175.0,829.5 185.0,823.8 200.0,819.5 215.0,817.5 225.0,817.0 235.0,820.5 250.0,821.2 265.0,822.0 275.0,817.0 290.0,814.5 295.0,812.0 305.0,816.2 315.0,818.2 322.5,818.2 330.0,812.0 345.0,810.8 360.0,810.8 375.0,810.8 380.0,810.0 390.0,812.5 402.5,816.2 420.0,815.5 435.0,813.8 442.5,815.5 465.0,815.0 475.0,818.0 500.0,818.8 510.0,819.5 520.0,823.8 540.0,825.0 550.0,828.0 560.0,828.0 570.0,825.8 580.0,823.0 590.0,824.2 610.0,824.2 630.0,825.0 640.0,826.2 660.0,827.0 680.0,828.0 690.0,831.2 705.0,830.0 720.0,830.0 736.7,831.1 753.3,831.1 764.4,828.3 792.2,829.2 803.3,822.2 814.4,818.9 842.2,818.9 858.9,817.2 870.0,813.9 881.1,813.3 897.8,816.7 906.1,820.0 920.0,818.9 936.7,818.9 947.8,820.0 958.9,818.1 975.6,818.1 986.7,818.9 997.8,822.8 1020.0,824.4 1036.7,822.2 1058.9,821.7 1081.1,820.0 1097.8,815.3 1104.7,811.7" fill="none" stroke="#ff20ff" stroke-width="1.4" shape-rendering="auto" stroke-linejoin="round" stroke-linecap="round" /><polyline points="5.0,817.2 15.0,818.0 25.0,819.0 35.0,823.5 55.0,824.0 65.0,828.0 75.0,827.2 95.0,823.5 130.0,823.5 140.0,824.2 155.0,825.2 170.0,828.5 175.0,828.0 185.0,822.2 200.0,818.0 215.0,816.0 225.0,815.5 235.0,819.0 250.0,819.8 265.0,820.5 275.0,815.5 290.0,813.0 295.0,810.5 305.0,814.8 315.0,816.8 322.5,816.8 330.0,810.5 345.0,809.2 360.0,809.2 375.0,809.2 380.0,808.5 390.0,811.0 402.5,814.8 420.0,814.0 435.0,812.2 442.5,814.0 465.0,813.5 475.0,816.5 500.0,817.2 510.0,818.0 520.0,822.2 540.0,823.5 550.0,826.5 560.0,826.5 570.0,824.2 580.0,821.5 590.0,822.8 610.0,822.8 630.0,823.5 640.0,824.8 660.0,825.5 680.0,826.5 690.0,829.8 705.0,828.5 720.0,828.5 736.7,829.6 753.3,829.6 764.4,826.8 792.2,827.7 803.3,820.7 814.4,817.4 842.2,817.4 858.9,815.7 870.0,812.4 881.1,811.8 897.8,815.2 906.1,818.5 920.0,817.4 936.7,817.4 947.8,818.5 958.9,816.6 975.6,816.6 986.7,817.4 997.8,821.3 1020.0,822.9 1036.7,820.7 1058.9,820.2 1081.1,818.5 1097.8,813.8 1104.7,810.2" fill="none" stroke="#20ff20" stroke-width="1.2" shape-rendering="auto" stroke-linejoin="round" stroke-linecap="round" /></svg>
<svg style="position:absolute;left:8px;top:84px" width="8" height="6"><path d="M0 0h8l-4 5z" fill="#778899"/></svg>
<div class="t" style="left:20px;top:81px;font-size:10px;color:#778899;font-weight:normal;font-family:'Liberation Sans';">EURCAD,H4</div>
<div style="position:absolute;left:26px;top:93px;width:38px;height:19px;background:#ff5a28;"></div>
<div class="t" style="left:34px;top:103px;font-size:9px;color:#fff;font-weight:bold;font-family:'Liberation Sans';">Pips</div>
<div style="position:absolute;left:10px;top:93px;width:50px;height:12px;background:#1c0a78;box-sizing:border-box;border:1px solid #f0a020"></div>
<div class="t" style="left:17px;top:94px;font-size:11px;color:#f0a020;font-weight:normal;font-family:'Liberation Sans';">TLBOC</div>
<div style="position:absolute;left:5px;top:128px;width:20px;height:12px;background:#ff0000;"></div>
<div style="position:absolute;left:26px;top:128px;width:12px;height:12px;background:#00ff00;"></div>
<div style="position:absolute;left:39px;top:128px;width:12px;height:12px;background:#00ff00;"></div>
<div style="position:absolute;left:52px;top:128px;width:12px;height:12px;background:#00ff00;"></div>
<div style="position:absolute;left:65px;top:128px;width:12px;height:12px;background:#1e90ff;"></div>
<div style="position:absolute;left:78px;top:128px;width:12px;height:12px;background:#ffa500;"></div>
<div style="position:absolute;left:91px;top:128px;width:12px;height:12px;background:#1e90ff;"></div>
<div style="position:absolute;left:104px;top:128px;width:12px;height:12px;background:#00ff00;"></div>
<div style="position:absolute;left:5px;top:141px;width:20px;height:12px;background:#ff0000;"></div>
<div style="position:absolute;left:26px;top:141px;width:12px;height:12px;background:#ffa500;"></div>
<div style="position:absolute;left:39px;top:141px;width:12px;height:12px;background:#00ff00;"></div>
<div style="position:absolute;left:52px;top:141px;width:12px;height:12px;background:#00ff00;"></div>
<div style="position:absolute;left:65px;top:141px;width:12px;height:12px;background:#1e90ff;"></div>
<div style="position:absolute;left:78px;top:141px;width:12px;height:12px;background:#ffa500;"></div>
<div style="position:absolute;left:91px;top:141px;width:12px;height:12px;background:#ffa500;"></div>
<div style="position:absolute;left:104px;top:141px;width:12px;height:12px;background:#00ff00;"></div>
<div style="position:absolute;left:5px;top:154px;width:20px;height:12px;background:#ff0000;"></div>
<div style="position:absolute;left:26px;top:154px;width:12px;height:12px;background:#ffa500;"></div>
<div style="position:absolute;left:39px;top:154px;width:12px;height:12px;background:#00ff00;"></div>
<div style="position:absolute;left:52px;top:154px;width:12px;height:12px;background:#00ff00;"></div>
<div style="position:absolute;left:65px;top:154px;width:12px;height:12px;background:#00ff00;"></div>
<div style="position:absolute;left:78px;top:154px;width:12px;height:12px;background:#1e90ff;"></div>
<div style="position:absolute;left:91px;top:154px;width:12px;height:12px;background:#ffa500;"></div>
<div style="position:absolute;left:104px;top:154px;width:12px;height:12px;background:#1e90ff;"></div>
<div style="position:absolute;left:5px;top:167px;width:20px;height:12px;background:#ff0000;"></div>
<div style="position:absolute;left:26px;top:167px;width:12px;height:12px;background:#ffa500;"></div>
<div style="position:absolute;left:39px;top:167px;width:12px;height:12px;background:#1e90ff;"></div>
<div style="position:absolute;left:52px;top:167px;width:12px;height:12px;background:#00ff00;"></div>
<div style="position:absolute;left:65px;top:167px;width:12px;height:12px;background:#00ff00;"></div>
<div style="position:absolute;left:78px;top:167px;width:12px;height:12px;background:#1e90ff;"></div>
<div style="position:absolute;left:91px;top:167px;width:12px;height:12px;background:#1e90ff;"></div>
<div style="position:absolute;left:104px;top:167px;width:12px;height:12px;background:#ffa500;"></div>
<div style="position:absolute;left:5px;top:180px;width:20px;height:12px;background:#ff0000;"></div>
<div style="position:absolute;left:26px;top:180px;width:12px;height:12px;background:#ff0000;"></div>
<div style="position:absolute;left:39px;top:180px;width:12px;height:12px;background:#ffa500;"></div>
<div style="position:absolute;left:52px;top:180px;width:12px;height:12px;background:#00ff00;"></div>
<div style="position:absolute;left:65px;top:180px;width:12px;height:12px;background:#00ff00;"></div>
<div style="position:absolute;left:78px;top:180px;width:12px;height:12px;background:#1e90ff;"></div>
<div style="position:absolute;left:91px;top:180px;width:12px;height:12px;background:#1e90ff;"></div>
<div style="position:absolute;left:104px;top:180px;width:12px;height:12px;background:#ffa500;"></div>
<div class="t" style="left:6px;top:114px;font-size:8px;color:#606060;font-weight:bold;font-family:'Liberation Sans';">M&nbsp;&nbsp;W&nbsp;&nbsp;D&nbsp;H4&nbsp;&nbsp;H&nbsp;30&nbsp;15&nbsp;&nbsp;5&nbsp;&nbsp;&nbsp;1</div>
<div class="t" style="left:128px;top:129px;font-size:9px;color:#6a6a6a;font-weight:normal;font-family:'Liberation Sans';">7</div>
<div class="t" style="left:124px;top:142px;font-size:9px;color:#6a6a6a;font-weight:normal;font-family:'Liberation Sans';">21</div>
<div class="t" style="left:124px;top:154px;font-size:9px;color:#6a6a6a;font-weight:normal;font-family:'Liberation Sans';">42</div>
<div class="t" style="left:124px;top:167px;font-size:9px;color:#6a6a6a;font-weight:normal;font-family:'Liberation Sans';">89</div>
<div class="t" style="left:121px;top:180px;font-size:9px;color:#6a6a6a;font-weight:normal;font-family:'Liberation Sans';">144</div>
<div class="t" style="left:9px;top:106px;font-size:10px;color:#7a7a7a;font-weight:normal;font-family:'Liberation Sans';letter-spacing:-0.3px">Previous Day: 0.0 Pips</div>
<div class="t" style="left:9px;top:118px;font-size:10px;color:#7a7a7a;font-weight:normal;font-family:'Liberation Sans';letter-spacing:-0.3px">Previous Week: 0.0 Pips</div>
<div class="t" style="left:9px;top:130px;font-size:10px;color:#7a7a7a;font-weight:normal;font-family:'Liberation Sans';letter-spacing:-0.3px">Previous Month: 561.9 Pips</div>
<div class="t" style="left:9px;top:142px;font-size:10px;color:#7a7a7a;font-weight:normal;font-family:'Liberation Sans';letter-spacing:-0.3px">Previous Year: 1516.2 Pips</div>
<div class="t" style="left:105px;top:80px;font-size:16.5px;color:#1e90ff;font-weight:bold;font-family:'Liberation Sans';transform:scaleX(0.8);transform-origin:0 0;letter-spacing:0px">Volume valid</div>
<div class="t" style="left:151px;top:102px;font-size:9px;color:#ffffff;font-weight:bold;font-family:'Liberation Sans';letter-spacing:1px">EURCAD</div>
<div style="position:absolute;left:168px;top:116px;width:4px;height:4px;background:#2db36a;"></div>
<div style="position:absolute;left:175px;top:116px;width:4px;height:4px;background:#2db36a;"></div>
<div style="position:absolute;left:162px;top:123px;width:4px;height:4px;background:#2db36a;"></div>
<div style="position:absolute;left:168px;top:123px;width:4px;height:4px;background:#2db36a;"></div>
<div style="position:absolute;left:175px;top:123px;width:4px;height:4px;background:#2db36a;"></div>
<div style="position:absolute;left:181px;top:123px;width:4px;height:4px;background:#2db36a;"></div>
<div class="t" style="left:155px;top:134px;font-size:16px;color:#2db36a;font-weight:bold;font-family:'Liberation Sans';letter-spacing:1px">82%</div>
<div style="position:absolute;left:147px;top:155px;width:50px;height:18px;background:#00ff00;"></div>
<div style="position:absolute;left:147px;top:175px;width:50px;height:18px;background:#00ff00;"></div>
<div style="position:absolute;left:147px;top:195px;width:50px;height:18px;background:#00ff00;"></div>
<div style="position:absolute;left:147px;top:215px;width:50px;height:18px;background:#00ff00;"></div>
<div style="position:absolute;left:147px;top:235px;width:50px;height:18px;background:#00ff00;"></div>
<div style="position:absolute;left:174px;top:195px;width:23px;height:18px;background:#ff0000;"></div>
<div class="t" style="left:158px;top:155px;font-size:18px;color:#fff;font-weight:bold;font-family:'Liberation Sans';letter-spacing:2px;-webkit-text-stroke:0.6px #fff">89</div>
<div class="t" style="left:166px;top:175px;font-size:18px;color:#fff;font-weight:bold;font-family:'Liberation Sans';-webkit-text-stroke:0.6px #fff">8</div>
<div class="t" style="left:151px;top:195px;font-size:18px;color:#fff;font-weight:bold;font-family:'Liberation Sans';-webkit-text-stroke:0.6px #fff">7</div>
<div style="position:absolute;left:165px;top:204px;width:5px;height:3px;background:#fff;"></div>
<div class="t" style="left:181px;top:195px;font-size:18px;color:#fff;font-weight:bold;font-family:'Liberation Sans';-webkit-text-stroke:0.6px #fff">2</div>
<svg style="position:absolute;left:163px;top:217px" width="20" height="15"><path d="M4 13l9-9" stroke="#fff" stroke-width="3.5" fill="none"/><path d="M6 2h10v10z" fill="#fff"/></svg>
<svg style="position:absolute;left:163px;top:237px" width="20" height="15"><path d="M4 13l9-9" stroke="#fff" stroke-width="3.5" fill="none"/><path d="M6 2h10v10z" fill="#fff"/></svg>
<div class="t" style="left:4px;top:196px;font-size:10px;color:#ff00ff;font-weight:normal;font-family:'Liberation Sans';">NIHILIST ULTRA ADR</div>
<div class="t" style="left:5px;top:206px;font-size:11px;color:#8a8a8a;font-weight:normal;font-family:'Liberation Sans';">M30</div>
<div class="t" style="left:43px;top:206px;font-size:11px;color:#8a8a8a;font-weight:normal;font-family:'Liberation Sans';">H1</div>
<div class="t" style="left:73px;top:206px;font-size:11px;color:#8a8a8a;font-weight:normal;font-family:'Liberation Sans';">H4</div>
<div class="t" style="left:102px;top:206px;font-size:11px;color:#8a8a8a;font-weight:normal;font-family:'Liberation Sans';">D1</div>
<div class="t" style="left:129px;top:206px;font-size:11px;color:#8a8a8a;font-weight:normal;font-family:'Liberation Sans';">W1</div>
<div class="t" style="left:14px;top:221px;font-size:11px;color:#00ff00;font-weight:normal;font-family:'Liberation Sans';">23</div>
<div class="t" style="left:44px;top:221px;font-size:11px;color:#00ff00;font-weight:normal;font-family:'Liberation Sans';">45</div>
<div class="t" style="left:74px;top:221px;font-size:11px;color:#00ff00;font-weight:normal;font-family:'Liberation Sans';">92</div>
<div class="t" style="left:110px;top:221px;font-size:11px;color:#00ffff;font-weight:normal;font-family:'Liberation Sans';">6</div>
<div class="t" style="left:124px;top:221px;font-size:11px;color:#ff0000;font-weight:normal;font-family:'Liberation Sans';">-372</div>
<div class="t" style="left:10px;top:235px;font-size:9px;color:#ffffff;font-weight:bold;font-family:'Liberation Sans';">MN</div>
<div class="t" style="left:37px;top:237px;font-size:12px;color:#ff0000;font-weight:normal;font-family:'Liberation Sans';">-94</div>
<div class="t" style="left:10px;top:250px;font-size:9px;color:#ffffff;font-weight:bold;font-family:'Liberation Sans';">W1</div>
<div class="t" style="left:37px;top:252px;font-size:12px;color:#ff0000;font-weight:normal;font-family:'Liberation Sans';">-96</div>
<div class="t" style="left:10px;top:265px;font-size:9px;color:#ffffff;font-weight:bold;font-family:'Liberation Sans';">D1</div>
<div class="t" style="left:37px;top:267px;font-size:12px;color:#ff0000;font-weight:normal;font-family:'Liberation Sans';">-66</div>
<div class="t" style="left:10px;top:280px;font-size:9px;color:#ffffff;font-weight:bold;font-family:'Liberation Sans';">H4</div>
<div class="t" style="left:38px;top:282px;font-size:12px;color:#00ff00;font-weight:normal;font-family:'Liberation Sans';">78</div>
<div class="t" style="left:10px;top:295px;font-size:9px;color:#ffffff;font-weight:bold;font-family:'Liberation Sans';">H1</div>
<div class="t" style="left:38px;top:297px;font-size:12px;color:#00ff00;font-weight:normal;font-family:'Liberation Sans';">98</div>
<div class="t" style="left:10px;top:310px;font-size:9px;color:#ffffff;font-weight:bold;font-family:'Liberation Sans';">M30</div>
<div class="t" style="left:38px;top:312px;font-size:12px;color:#1e90ff;font-weight:normal;font-family:'Liberation Sans';">51</div>
<div class="t" style="left:10px;top:325px;font-size:9px;color:#ffffff;font-weight:bold;font-family:'Liberation Sans';">M15</div>
<div class="t" style="left:38px;top:327px;font-size:12px;color:#00ff00;font-weight:normal;font-family:'Liberation Sans';">88</div>
<div class="t" style="left:10px;top:340px;font-size:9px;color:#ffffff;font-weight:bold;font-family:'Liberation Sans';">M5</div>
<div class="t" style="left:38px;top:342px;font-size:12px;color:#00ff00;font-weight:normal;font-family:'Liberation Sans';">73</div>
<div class="t" style="left:10px;top:355px;font-size:9px;color:#ffffff;font-weight:bold;font-family:'Liberation Sans';">M1</div>
<div class="t" style="left:38px;top:357px;font-size:12px;color:#00ff00;font-weight:normal;font-family:'Liberation Sans';">70</div>
<div class="t" style="left:11px;top:348px;font-size:10px;color:#6a7888;font-weight:normal;font-family:'Liberation Sans';">#44741791 tp</div>
<div style="position:absolute;left:8px;top:363px;width:219px;height:88px;background:#141414;box-sizing:border-box;border:1px solid #3c3c3c"></div>
<div style="position:absolute;left:10px;top:365px;width:64px;height:13px;background:#1c1c1c;box-sizing:border-box;border:1px solid #3a3a3a"></div>
<div class="t" style="left:10px;top:366px;width:64px;text-align:center;font-size:11px;color:#8a8a8a">FFx U.S.M.</div>
<div style="position:absolute;left:74px;top:365px;width:44px;height:13px;background:#1c1c1c;box-sizing:border-box;border:1px solid #3a3a3a"></div>
<div class="t" style="left:74px;top:366px;width:44px;text-align:center;font-size:11px;color:#8a8a8a">D1</div>
<div style="position:absolute;left:118px;top:365px;width:107px;height:13px;background:#1c1c1c;box-sizing:border-box;border:1px solid #3a3a3a"></div>
<div class="t" style="left:118px;top:366px;width:107px;text-align:center;font-size:11px;color:#8a8a8a">MovAvg(5)</div>
<div class="t" style="left:13px;top:381px;width:25px;text-align:center;font-size:9px;color:#9a9a9a">1.1</div>
<div style="position:absolute;left:13px;top:395px;width:25px;height:40px;background:linear-gradient(#2a2a2a,#8a8a8a);"></div>
<div style="position:absolute;left:13px;top:427px;width:25px;height:8px;background:#ff0000;"></div>
<div class="t" style="left:11px;top:437px;width:29px;text-align:center;font-size:11px;color:#8a8a8a">USD</div>
<div class="t" style="left:39px;top:381px;width:25px;text-align:center;font-size:9px;color:#9a9a9a">1.5</div>
<div style="position:absolute;left:39px;top:395px;width:25px;height:40px;background:linear-gradient(#2a2a2a,#8a8a8a);"></div>
<div style="position:absolute;left:39px;top:427px;width:25px;height:8px;background:#ff0000;"></div>
<div class="t" style="left:37px;top:437px;width:29px;text-align:center;font-size:11px;color:#8a8a8a">EUR</div>
<div class="t" style="left:65px;top:381px;width:25px;text-align:center;font-size:9px;color:#9a9a9a">6.0</div>
<div style="position:absolute;left:65px;top:395px;width:25px;height:40px;background:linear-gradient(#2a2a2a,#8a8a8a);"></div>
<div style="position:absolute;left:65px;top:415px;width:25px;height:7px;background:#ff6a00;"></div>
<div style="position:absolute;left:65px;top:422px;width:25px;height:13px;background:#ff0000;"></div>
<div style="position:absolute;left:65px;top:411px;width:25px;height:4px;background:#00b400;"></div>
<div class="t" style="left:63px;top:437px;width:29px;text-align:center;font-size:11px;color:#8a8a8a">GBP</div>
<div class="t" style="left:91px;top:381px;width:25px;text-align:center;font-size:9px;color:#9a9a9a">6.5</div>
<div style="position:absolute;left:91px;top:395px;width:25px;height:40px;background:linear-gradient(#2a2a2a,#8a8a8a);"></div>
<div style="position:absolute;left:91px;top:415px;width:25px;height:7px;background:#ff6a00;"></div>
<div style="position:absolute;left:91px;top:422px;width:25px;height:13px;background:#ff0000;"></div>
<div style="position:absolute;left:91px;top:407px;width:25px;height:8px;background:#00b400;"></div>
<div class="t" style="left:89px;top:437px;width:29px;text-align:center;font-size:11px;color:#8a8a8a">CHF</div>
<div class="t" style="left:117px;top:381px;width:25px;text-align:center;font-size:9px;color:#9a9a9a">5.0</div>
<div style="position:absolute;left:117px;top:395px;width:25px;height:40px;background:linear-gradient(#2a2a2a,#8a8a8a);"></div>
<div style="position:absolute;left:117px;top:415px;width:25px;height:7px;background:#ff6a00;"></div>
<div style="position:absolute;left:117px;top:422px;width:25px;height:13px;background:#ff0000;"></div>
<div class="t" style="left:115px;top:437px;width:29px;text-align:center;font-size:11px;color:#8a8a8a">CAD</div>
<div class="t" style="left:143px;top:381px;width:25px;text-align:center;font-size:9px;color:#9a9a9a">7.4</div>
<div style="position:absolute;left:143px;top:395px;width:25px;height:40px;background:linear-gradient(#2a2a2a,#8a8a8a);"></div>
<div style="position:absolute;left:143px;top:415px;width:25px;height:7px;background:#ff6a00;"></div>
<div style="position:absolute;left:143px;top:422px;width:25px;height:13px;background:#ff0000;"></div>
<div style="position:absolute;left:143px;top:403px;width:25px;height:12px;background:#00b400;"></div>
<div class="t" style="left:141px;top:437px;width:29px;text-align:center;font-size:11px;color:#8a8a8a">AUD</div>
<div class="t" style="left:169px;top:381px;width:25px;text-align:center;font-size:9px;color:#9a9a9a">9.7</div>
<div style="position:absolute;left:169px;top:395px;width:25px;height:40px;background:linear-gradient(#2a2a2a,#8a8a8a);"></div>
<div style="position:absolute;left:169px;top:415px;width:25px;height:7px;background:#ff6a00;"></div>
<div style="position:absolute;left:169px;top:422px;width:25px;height:13px;background:#ff0000;"></div>
<div style="position:absolute;left:169px;top:395px;width:25px;height:20px;background:#00b400;"></div>
<div class="t" style="left:167px;top:437px;width:29px;text-align:center;font-size:11px;color:#8a8a8a">JPY</div>
<div class="t" style="left:195px;top:381px;width:25px;text-align:center;font-size:9px;color:#9a9a9a">4.3</div>
<div style="position:absolute;left:195px;top:395px;width:25px;height:40px;background:linear-gradient(#2a2a2a,#8a8a8a);"></div>
<div style="position:absolute;left:195px;top:415px;width:25px;height:7px;background:#ff6a00;"></div>
<div style="position:absolute;left:195px;top:422px;width:25px;height:13px;background:#ff0000;"></div>
<div class="t" style="left:193px;top:437px;width:29px;text-align:center;font-size:11px;color:#8a8a8a">NZD</div>
<div style="position:absolute;left:76px;top:484px;width:63px;height:18px;background:#8b0000;"></div>
<div class="t" style="left:76px;top:487px;width:63px;text-align:center;font-size:11px;color:#fff;font-weight:bold">TrueTL</div>
<div class="t" style="right:49px;top:156px;font-size:10px;color:#c88a18;letter-spacing:-0.3px">(-38.2) -&nbsp;&nbsp;1.35864</div>
<div class="t" style="right:49px;top:187px;font-size:10px;color:#3020ff;letter-spacing:-0.3px">Previous Month HIGH&nbsp;&nbsp;(100) -&nbsp;&nbsp;96</div>
<div class="t" style="right:49px;top:252px;font-size:10px;color:#c88a18;letter-spacing:-0.3px">(-50.0) -&nbsp;&nbsp;1.34046</div>
<div class="t" style="right:49px;top:258px;font-size:10px;color:#3020ff;letter-spacing:-0.3px">(76.4) -&nbsp;&nbsp;1.33950</div>
<div class="t" style="right:49px;top:299px;font-size:10px;color:#3020ff;letter-spacing:-0.3px">(61.8) -&nbsp;&nbsp;1.33118</div>
<div class="t" style="right:49px;top:336px;font-size:10px;color:#3020ff;letter-spacing:-0.3px">(50.0) -&nbsp;&nbsp;1.32455</div>
<div class="t" style="right:49px;top:346px;font-size:10px;color:#c88a18;letter-spacing:-0.3px">(-61.8) -&nbsp;&nbsp;1.32262</div>
<div class="t" style="right:49px;top:370px;font-size:10px;color:#3020ff;letter-spacing:-0.3px">(38.2) -&nbsp;&nbsp;1.31791</div>
<div class="t" style="right:49px;top:414px;font-size:10px;color:#3020ff;letter-spacing:-0.3px">(23.6) -&nbsp;&nbsp;1.30971</div>
<div class="t" style="right:49px;top:462px;font-size:10px;color:#c88a18;letter-spacing:-0.3px">(-76.4) -&nbsp;&nbsp;1.30049</div>
<div class="t" style="left:1261px;top:482px;font-size:10px;color:#3020ff;font-weight:normal;font-family:'Liberation Sans';">Previous Month L</div>
<div class="t" style="left:1333px;top:481px;font-size:10px;color:#ffff00;font-weight:bold;font-family:'Liberation Sans';">Pips +1?1J</div>
<div class="t" style="left:1121px;top:249px;font-size:9px;color:#ff1010;font-weight:bold;font-family:'Liberation Sans';">W1 Res</div>
<div class="t" style="left:1123px;top:332px;font-size:9px;color:#ff1010;font-weight:bold;font-family:'Liberation Sans';">D1 Res</div>
<div class="t" style="left:1166px;top:333px;font-size:9px;color:#e040e0;font-weight:bold;font-family:'Liberation Sans';">H4 Res C</div>
<div class="t" style="left:1163px;top:431px;font-size:9px;color:#00c000;font-weight:bold;font-family:'Liberation Sans';">NN1 Sup C</div>
<div class="t" style="left:1166px;top:458px;font-size:9px;color:#00c000;font-weight:bold;font-family:'Liberation Sans';">D1 Sup C</div>
<div class="t" style="left:1123px;top:469px;font-size:9px;color:#008800;font-weight:bold;font-family:'Liberation Sans';">H4 Sup</div>
<div class="t" style="left:780px;top:476px;font-size:11px;color:#8090a0;font-weight:normal;font-family:'Liberation Sans';">Normal</div>
<div class="t" style="left:422px;top:88px;font-size:11px;color:#8090a0;font-weight:normal;font-family:'Liberation Sans';transform:rotate(22deg);transform-origin:0 0">Normal</div>
<div class="t" style="left:436px;top:92px;font-size:11px;color:#8090a0;font-weight:normal;font-family:'Liberation Sans';transform:rotate(22deg);transform-origin:0 0">Normal</div>
<div class="t" style="left:495px;top:112px;font-size:11px;color:#8090a0;font-weight:normal;font-family:'Liberation Sans';transform:rotate(25deg);transform-origin:0 0">Normal</div>
<div class="t" style="left:1036px;top:484px;font-size:11px;color:#8090a0;font-weight:normal;font-family:'Liberation Sans';transform:rotate(-50deg);transform-origin:0 0">Normal</div>
<svg style="position:absolute;left:1108px;top:77px" width="11" height="6"><path d="M0 0h10l-5 5z" fill="#778899"/></svg>
<div style="position:absolute;left:1078px;top:162px;width:16px;height:4px;background:#808080;border-radius:2px"></div>
<div style="position:absolute;left:1078px;top:490px;width:16px;height:4px;background:#808080;border-radius:2px"></div>
<div class="t" style="left:10px;top:509px;width:46px;height:12px;box-sizing:border-box;border:1px solid #008a00;background:#778899;font-size:10px;line-height:11px;font-weight:bold;color:#000;text-align:center;letter-spacing:-0.1px;overflow:hidden">AUDUSD</div>
<div class="t" style="left:58px;top:509px;width:46px;height:12px;box-sizing:border-box;border:1px solid #008a00;background:#778899;font-size:10px;line-height:11px;font-weight:bold;color:#000;text-align:center;letter-spacing:-0.1px;overflow:hidden">AUDCHF</div>
<div class="t" style="left:106px;top:509px;width:46px;height:12px;box-sizing:border-box;border:1px solid #008a00;background:#778899;font-size:10px;line-height:11px;font-weight:bold;color:#000;text-align:center;letter-spacing:-0.1px;overflow:hidden">AUDCAD</div>
<div class="t" style="left:154px;top:509px;width:46px;height:12px;box-sizing:border-box;border:1px solid #008a00;background:#778899;font-size:10px;line-height:11px;font-weight:bold;color:#000;text-align:center;letter-spacing:-0.1px;overflow:hidden">AUDJPY</div>
<div class="t" style="left:202px;top:509px;width:46px;height:12px;box-sizing:border-box;border:1px solid #008a00;background:#778899;font-size:10px;line-height:11px;font-weight:bold;color:#000;text-align:center;letter-spacing:-0.1px;overflow:hidden">AUDNZD</div>
<div class="t" style="left:250px;top:509px;width:46px;height:12px;box-sizing:border-box;border:1px solid #008a00;background:#778899;font-size:10px;line-height:11px;font-weight:bold;color:#000;text-align:center;letter-spacing:-0.1px;overflow:hidden">CHFJPY</div>
<div class="t" style="left:298px;top:509px;width:46px;height:12px;box-sizing:border-box;border:1px solid #008a00;background:#778899;font-size:10px;line-height:11px;font-weight:bold;color:#000;text-align:center;letter-spacing:-0.1px;overflow:hidden">CADCHF</div>
<div class="t" style="left:346px;top:509px;width:46px;height:12px;box-sizing:border-box;border:1px solid #008a00;background:#778899;font-size:10px;line-height:11px;font-weight:bold;color:#000;text-align:center;letter-spacing:-0.1px;overflow:hidden">CADJPY</div>
<div class="t" style="left:394px;top:509px;width:46px;height:12px;box-sizing:border-box;border:1px solid #008a00;background:#778899;font-size:10px;line-height:11px;font-weight:bold;color:#000;text-align:center;letter-spacing:-0.1px;overflow:hidden">EURUSD</div>
<div class="t" style="left:442px;top:509px;width:46px;height:12px;box-sizing:border-box;border:1px solid #008a00;background:#778899;font-size:10px;line-height:11px;font-weight:bold;color:#000;text-align:center;letter-spacing:-0.1px;overflow:hidden">EURJPY</div>
<div class="t" style="left:490px;top:509px;width:46px;height:12px;box-sizing:border-box;border:1px solid #008a00;background:#f0e010;font-size:10px;line-height:11px;font-weight:bold;color:#000;text-align:center;letter-spacing:-0.1px;overflow:hidden">EURCAD</div>
<div class="t" style="left:538px;top:509px;width:46px;height:12px;box-sizing:border-box;border:1px solid #008a00;background:#d030d8;font-size:10px;line-height:11px;font-weight:bold;color:#000;text-align:center;letter-spacing:-0.1px;overflow:hidden">EURCHF</div>
<div class="t" style="left:586px;top:509px;width:46px;height:12px;box-sizing:border-box;border:1px solid #008a00;background:#f0e010;font-size:10px;line-height:11px;font-weight:bold;color:#000;text-align:center;letter-spacing:-0.1px;overflow:hidden">EURAUD</div>
<div class="t" style="left:634px;top:509px;width:46px;height:12px;box-sizing:border-box;border:1px solid #008a00;background:#778899;font-size:10px;line-height:11px;font-weight:bold;color:#000;text-align:center;letter-spacing:-0.1px;overflow:hidden">EURGBP</div>
<div class="t" style="left:682px;top:509px;width:46px;height:12px;box-sizing:border-box;border:1px solid #008a00;background:#778899;font-size:10px;line-height:11px;font-weight:bold;color:#000;text-align:center;letter-spacing:-0.1px;overflow:hidden">EURNZD</div>
<div class="t" style="left:730px;top:509px;width:46px;height:12px;box-sizing:border-box;border:1px solid #008a00;background:#778899;font-size:10px;line-height:11px;font-weight:bold;color:#000;text-align:center;letter-spacing:-0.1px;overflow:hidden">GBPNZD</div>
<div class="t" style="left:778px;top:509px;width:46px;height:12px;box-sizing:border-box;border:1px solid #008a00;background:#778899;font-size:10px;line-height:11px;font-weight:bold;color:#000;text-align:center;letter-spacing:-0.1px;overflow:hidden">GBPUSD</div>
<div class="t" style="left:826px;top:509px;width:46px;height:12px;box-sizing:border-box;border:1px solid #008a00;background:#778899;font-size:10px;line-height:11px;font-weight:bold;color:#000;text-align:center;letter-spacing:-0.1px;overflow:hidden">GBPJPY</div>
<div class="t" style="left:874px;top:509px;width:46px;height:12px;box-sizing:border-box;border:1px solid #008a00;background:#778899;font-size:10px;line-height:11px;font-weight:bold;color:#000;text-align:center;letter-spacing:-0.1px;overflow:hidden">GBPAUD</div>
<div class="t" style="left:922px;top:509px;width:46px;height:12px;box-sizing:border-box;border:1px solid #008a00;background:#d030d8;font-size:10px;line-height:11px;font-weight:bold;color:#000;text-align:center;letter-spacing:-0.1px;overflow:hidden">GBPCHF</div>
<div class="t" style="left:970px;top:509px;width:46px;height:12px;box-sizing:border-box;border:1px solid #008a00;background:#778899;font-size:10px;line-height:11px;font-weight:bold;color:#000;text-align:center;letter-spacing:-0.1px;overflow:hidden">GBPCAD</div>
<div class="t" style="left:1018px;top:509px;width:46px;height:12px;box-sizing:border-box;border:1px solid #008a00;background:#778899;font-size:10px;line-height:11px;font-weight:bold;color:#000;text-align:center;letter-spacing:-0.1px;overflow:hidden">NZDCAD</div>
<div class="t" style="left:1066px;top:509px;width:46px;height:12px;box-sizing:border-box;border:1px solid #008a00;background:#778899;font-size:10px;line-height:11px;font-weight:bold;color:#000;text-align:center;letter-spacing:-0.1px;overflow:hidden">NZDCHF</div>
<div class="t" style="left:1114px;top:509px;width:46px;height:12px;box-sizing:border-box;border:1px solid #008a00;background:#778899;font-size:10px;line-height:11px;font-weight:bold;color:#000;text-align:center;letter-spacing:-0.1px;overflow:hidden">NZDJPY</div>
<div class="t" style="left:1162px;top:509px;width:46px;height:12px;box-sizing:border-box;border:1px solid #008a00;background:#778899;font-size:10px;line-height:11px;font-weight:bold;color:#000;text-align:center;letter-spacing:-0.1px;overflow:hidden">NZDUSD</div>
<div class="t" style="left:1210px;top:509px;width:46px;height:12px;box-sizing:border-box;border:1px solid #008a00;background:#778899;font-size:10px;line-height:11px;font-weight:bold;color:#000;text-align:center;letter-spacing:-0.1px;overflow:hidden">USDCAD</div>
<div class="t" style="left:1258px;top:509px;width:46px;height:12px;box-sizing:border-box;border:1px solid #008a00;background:#778899;font-size:10px;line-height:11px;font-weight:bold;color:#000;text-align:center;letter-spacing:-0.1px;overflow:hidden">USDJPY</div>
<div class="t" style="left:1306px;top:509px;width:46px;height:12px;box-sizing:border-box;border:1px solid #008a00;background:#778899;font-size:10px;line-height:11px;font-weight:bold;color:#000;text-align:center;letter-spacing:-0.1px;overflow:hidden">USDCHF</div>
<div class="t" style="left:45px;top:525px;font-size:10px;color:#ffffff;font-family:'Liberation Serif'">ADR:</div>
<div class="t" style="left:75px;top:525px;font-size:10px;color:#c8c020;font-family:'Liberation Serif'">46.8%</div>
<div class="t" style="left:114px;top:525px;font-size:10px;color:#ffffff;font-family:'Liberation Serif'">|</div>
<div class="t" style="left:121px;top:525px;font-size:10px;color:#ffffff;font-family:'Liberation Serif'">T:</div>
<div class="t" style="left:134px;top:525px;font-size:10px;color:#c8c020;font-family:'Liberation Serif'">56</div>
<div class="t" style="left:150px;top:525px;font-size:10px;color:#ffffff;font-family:'Liberation Serif'">|</div>
<div class="t" style="left:156px;top:525px;font-size:10px;color:#ffffff;font-family:'Liberation Serif'">Y:</div>
<div class="t" style="left:169px;top:525px;font-size:10px;color:#c8c020;font-family:'Liberation Serif'">119</div>
<div class="t" style="left:185px;top:525px;font-size:10px;color:#ffffff;font-family:'Liberation Serif'">|</div>
<div class="t" style="left:193px;top:525px;font-size:10px;color:#ffffff;font-family:'Liberation Serif'">5D:</div>
<div class="t" style="left:212px;top:525px;font-size:10px;color:#c8c020;font-family:'Liberation Serif'">119</div>
<div class="t" style="left:226px;top:525px;font-size:10px;color:#ffffff;font-family:'Liberation Serif'">|</div>
<div class="t" style="left:236px;top:525px;font-size:10px;color:#ffffff;font-family:'Liberation Serif'">10D:</div>
<div class="t" style="left:262px;top:525px;font-size:10px;color:#c8c020;font-family:'Liberation Serif'">127</div>
<div class="t" style="left:277px;top:525px;font-size:10px;color:#ffffff;font-family:'Liberation Serif'">|</div>
<div class="t" style="left:285px;top:525px;font-size:10px;color:#ffffff;font-family:'Liberation Serif'">20D:</div>
<div class="t" style="left:311px;top:525px;font-size:10px;color:#c8c020;font-family:'Liberation Serif'">124</div>
<div class="t" style="left:326px;top:525px;font-size:10px;color:#ffffff;font-family:'Liberation Serif'">|</div>
<div class="t" style="left:334px;top:525px;font-size:10px;color:#ffffff;font-family:'Liberation Serif'">30D:</div>
<div class="t" style="left:360px;top:525px;font-size:10px;color:#c8c020;font-family:'Liberation Serif'">116</div>
<div class="t" style="left:415px;top:525px;font-size:10px;color:#ffffff;font-family:'Liberation Serif'">AWR:</div>
<div class="t" style="left:446px;top:525px;font-size:10px;color:#c8c020;font-family:'Liberation Serif'">59.6%</div>
<div class="t" style="left:484px;top:525px;font-size:10px;color:#ffffff;font-family:'Liberation Serif'">|</div>
<div class="t" style="left:491px;top:525px;font-size:10px;color:#ffffff;font-family:'Liberation Serif'">CW:</div>
<div class="t" style="left:511px;top:525px;font-size:10px;color:#c8c020;font-family:'Liberation Serif'">150</div>
<div class="t" style="left:524px;top:525px;font-size:10px;color:#ffffff;font-family:'Liberation Serif'">|</div>
<div class="t" style="left:534px;top:525px;font-size:10px;color:#ffffff;font-family:'Liberation Serif'">1W:</div>
<div class="t" style="left:552px;top:525px;font-size:10px;color:#c8c020;font-family:'Liberation Serif'">251</div>
<div class="t" style="left:569px;top:525px;font-size:10px;color:#ffffff;font-family:'Liberation Serif'">|</div>
<div class="t" style="left:576px;top:525px;font-size:10px;color:#ffffff;font-family:'Liberation Serif'">5W:</div>
<div class="t" style="left:596px;top:525px;font-size:10px;color:#c8c020;font-family:'Liberation Serif'">265</div>
<div class="t" style="left:612px;top:525px;font-size:10px;color:#ffffff;font-family:'Liberation Serif'">|</div>
<div class="t" style="left:620px;top:525px;font-size:10px;color:#ffffff;font-family:'Liberation Serif'">10W:</div>
<div class="t" style="left:646px;top:525px;font-size:10px;color:#c8c020;font-family:'Liberation Serif'">240</div>
<div class="t" style="left:661px;top:525px;font-size:10px;color:#ffffff;font-family:'Liberation Serif'">|</div>
<div class="t" style="left:669px;top:525px;font-size:10px;color:#ffffff;font-family:'Liberation Serif'">20W:</div>
<div class="t" style="left:695px;top:525px;font-size:10px;color:#c8c020;font-family:'Liberation Serif'">252</div>
<div class="t" style="left:710px;top:525px;font-size:10px;color:#ffffff;font-family:'Liberation Serif'">|</div>
<div class="t" style="left:717px;top:525px;font-size:10px;color:#ffffff;font-family:'Liberation Serif'">30W:</div>
<div class="t" style="left:744px;top:525px;font-size:10px;color:#c8c020;font-family:'Liberation Serif'">256</div>
<div class="t" style="left:785px;top:525px;font-size:10px;color:#ffffff;font-family:'Liberation Serif'">AMR:</div>
<div class="t" style="left:816px;top:525px;font-size:10px;color:#c8c020;font-family:'Liberation Serif'">35.2%</div>
<div class="t" style="left:854px;top:525px;font-size:10px;color:#ffffff;font-family:'Liberation Serif'">|</div>
<div class="t" style="left:861px;top:525px;font-size:10px;color:#ffffff;font-family:'Liberation Serif'">CM:</div>
<div class="t" style="left:881px;top:525px;font-size:10px;color:#c8c020;font-family:'Liberation Serif'">150</div>
<div class="t" style="left:896px;top:525px;font-size:10px;color:#ffffff;font-family:'Liberation Serif'">|</div>
<div class="t" style="left:904px;top:525px;font-size:10px;color:#ffffff;font-family:'Liberation Serif'">1M:</div>
<div class="t" style="left:924px;top:525px;font-size:10px;color:#c8c020;font-family:'Liberation Serif'">562</div>
<div class="t" style="left:939px;top:525px;font-size:10px;color:#ffffff;font-family:'Liberation Serif'">|</div>
<div class="t" style="left:947px;top:525px;font-size:10px;color:#ffffff;font-family:'Liberation Serif'">5M:</div>
<div class="t" style="left:967px;top:525px;font-size:10px;color:#c8c020;font-family:'Liberation Serif'">469</div>
<div class="t" style="left:982px;top:525px;font-size:10px;color:#ffffff;font-family:'Liberation Serif'">|</div>
<div class="t" style="left:990px;top:525px;font-size:10px;color:#ffffff;font-family:'Liberation Serif'">10M:</div>
<div class="t" style="left:1015px;top:525px;font-size:10px;color:#c8c020;font-family:'Liberation Serif'">445</div>
<div class="t" style="left:1030px;top:525px;font-size:10px;color:#ffffff;font-family:'Liberation Serif'">|</div>
<div class="t" style="left:1039px;top:525px;font-size:10px;color:#ffffff;font-family:'Liberation Serif'">20M:</div>
<div class="t" style="left:1065px;top:525px;font-size:10px;color:#c8c020;font-family:'Liberation Serif'">426</div>
<div class="t" style="left:1080px;top:525px;font-size:10px;color:#ffffff;font-family:'Liberation Serif'">|</div>
<div class="t" style="left:1087px;top:525px;font-size:10px;color:#ffffff;font-family:'Liberation Serif'">30M:</div>
<div class="t" style="left:1114px;top:525px;font-size:10px;color:#c8c020;font-family:'Liberation Serif'">428</div>
<div class="t" style="left:1135px;top:525px;width:46px;height:11px;box-sizing:border-box;border:1px solid #008a00;background:#505050;font-size:11px;line-height:10px;font-weight:bold;color:#1a1a1a;text-align:center">H1</div>
<div class="t" style="left:1183px;top:525px;width:46px;height:11px;box-sizing:border-box;border:1px solid #008a00;background:#ffffff;font-size:11px;line-height:10px;font-weight:bold;color:#000;text-align:center">H4</div>
<div class="t" style="left:1231px;top:525px;width:46px;height:11px;box-sizing:border-box;border:1px solid #008a00;background:#505050;font-size:11px;line-height:10px;font-weight:bold;color:#1a1a1a;text-align:center">D1</div>
<div class="t" style="left:1279px;top:525px;width:46px;height:11px;box-sizing:border-box;border:1px solid #008a00;background:#505050;font-size:11px;line-height:10px;font-weight:bold;color:#1a1a1a;text-align:center">W1</div>
<div class="t" style="left:1347px;top:807px;width:42px;height:15px;box-sizing:border-box;border:1px solid #ff10a0;background:#1a0a78;font-size:10px;line-height:13px;color:#00e0ff;text-align:center">RSI HTF</div>
<div style="position:absolute;left:1197px;top:554px;width:9px;height:9px;background:#787878"></div>
<div style="position:absolute;left:1208px;top:554px;width:9px;height:9px;background:#787878"></div>
<div style="position:absolute;left:1219px;top:554px;width:9px;height:9px;background:#ff8c00"></div>
<div style="position:absolute;left:1230px;top:554px;width:9px;height:9px;background:#787878"></div>
<div style="position:absolute;left:1241px;top:554px;width:9px;height:9px;background:#ff8c00"></div>
<div style="position:absolute;left:1252px;top:554px;width:9px;height:9px;background:#ff8c00"></div>
<div style="position:absolute;left:1263px;top:554px;width:9px;height:9px;background:#ff8c00"></div>
<div style="position:absolute;left:1274px;top:554px;width:9px;height:9px;background:#0a80ff"></div>
<div style="position:absolute;left:1285px;top:554px;width:9px;height:9px;background:#0a80ff"></div>
<div style="position:absolute;left:1296px;top:554px;width:9px;height:9px;background:#0a80ff"></div>
<div style="position:absolute;left:1197px;top:567px;width:9px;height:9px;background:#00ff00"></div>
<div style="position:absolute;left:1208px;top:567px;width:9px;height:9px;background:#00ff00"></div>
<div style="position:absolute;left:1219px;top:567px;width:9px;height:9px;background:#0a80ff"></div>
<div style="position:absolute;left:1230px;top:567px;width:9px;height:9px;background:#00ff00"></div>
<div style="position:absolute;left:1241px;top:567px;width:9px;height:9px;background:#00ff00"></div>
<div style="position:absolute;left:1252px;top:567px;width:9px;height:9px;background:#00ff00"></div>
<div style="position:absolute;left:1263px;top:567px;width:9px;height:9px;background:#0a80ff"></div>
<div style="position:absolute;left:1274px;top:567px;width:9px;height:9px;background:#787878"></div>
<div style="position:absolute;left:1285px;top:567px;width:9px;height:9px;background:#00ff00"></div>
<div style="position:absolute;left:1296px;top:567px;width:9px;height:9px;background:#00ff00"></div>
<div style="position:absolute;left:1197px;top:580px;width:9px;height:9px;background:#00ff00"></div>
<div style="position:absolute;left:1208px;top:580px;width:9px;height:9px;background:#00ff00"></div>
<div style="position:absolute;left:1219px;top:580px;width:9px;height:9px;background:#00ff00"></div>
<div style="position:absolute;left:1230px;top:580px;width:9px;height:9px;background:#00ff00"></div>
<div style="position:absolute;left:1241px;top:580px;width:9px;height:9px;background:#00ff00"></div>
<div style="position:absolute;left:1252px;top:580px;width:9px;height:9px;background:#00ff00"></div>
<div style="position:absolute;left:1263px;top:580px;width:9px;height:9px;background:#00ff00"></div>
<div style="position:absolute;left:1274px;top:580px;width:9px;height:9px;background:#00ff00"></div>
<div style="position:absolute;left:1285px;top:580px;width:9px;height:9px;background:#00ff00"></div>
<div style="position:absolute;left:1296px;top:580px;width:9px;height:9px;background:#00ff00"></div>
<div style="position:absolute;left:1197px;top:593px;width:9px;height:9px;background:#787878"></div>
<div style="position:absolute;left:1208px;top:593px;width:9px;height:9px;background:#787878"></div>
<div style="position:absolute;left:1219px;top:593px;width:9px;height:9px;background:#787878"></div>
<div style="position:absolute;left:1230px;top:593px;width:9px;height:9px;background:#0a80ff"></div>
<div style="position:absolute;left:1241px;top:593px;width:9px;height:9px;background:#0a80ff"></div>
<div style="position:absolute;left:1252px;top:593px;width:9px;height:9px;background:#787878"></div>
<div style="position:absolute;left:1263px;top:593px;width:9px;height:9px;background:#0a80ff"></div>
<div style="position:absolute;left:1274px;top:593px;width:9px;height:9px;background:#0a80ff"></div>
<div style="position:absolute;left:1285px;top:593px;width:9px;height:9px;background:#0a80ff"></div>
<div style="position:absolute;left:1296px;top:593px;width:9px;height:9px;background:#0a80ff"></div>
<div style="position:absolute;left:1197px;top:606px;width:9px;height:9px;background:#ff0000"></div>
<div style="position:absolute;left:1208px;top:606px;width:9px;height:9px;background:#ff0000"></div>
<div style="position:absolute;left:1219px;top:606px;width:9px;height:9px;background:#ff0000"></div>
<div style="position:absolute;left:1230px;top:606px;width:9px;height:9px;background:#ff0000"></div>
<div style="position:absolute;left:1241px;top:606px;width:9px;height:9px;background:#ff0000"></div>
<div style="position:absolute;left:1252px;top:606px;width:9px;height:9px;background:#ff0000"></div>
<div style="position:absolute;left:1263px;top:606px;width:9px;height:9px;background:#ff0000"></div>
<div style="position:absolute;left:1274px;top:606px;width:9px;height:9px;background:#ff0000"></div>
<div style="position:absolute;left:1285px;top:606px;width:9px;height:9px;background:#787878"></div>
<div style="position:absolute;left:1296px;top:606px;width:9px;height:9px;background:#787878"></div>
<div style="position:absolute;left:1333px;top:552px;width:9px;height:9px;background:#00ff00"></div>
<div style="position:absolute;left:1344px;top:552px;width:9px;height:9px;background:#00ff00"></div>
<div style="position:absolute;left:1355px;top:552px;width:9px;height:9px;background:#00ff00"></div>
<div style="position:absolute;left:1366px;top:552px;width:9px;height:9px;background:#00ff00"></div>
<div style="position:absolute;left:1377px;top:552px;width:9px;height:9px;background:#787878"></div>
<div style="position:absolute;left:1333px;top:565px;width:9px;height:9px;background:#00ff00"></div>
<div style="position:absolute;left:1344px;top:565px;width:9px;height:9px;background:#00ff00"></div>
<div style="position:absolute;left:1355px;top:565px;width:9px;height:9px;background:#00ff00"></div>
<div style="position:absolute;left:1366px;top:565px;width:9px;height:9px;background:#00ff00"></div>
<div style="position:absolute;left:1377px;top:565px;width:9px;height:9px;background:#787878"></div>
<div style="position:absolute;left:1333px;top:578px;width:9px;height:9px;background:#00ff00"></div>
<div style="position:absolute;left:1344px;top:578px;width:9px;height:9px;background:#00ff00"></div>
<div style="position:absolute;left:1355px;top:578px;width:9px;height:9px;background:#00ff00"></div>
<div style="position:absolute;left:1366px;top:578px;width:9px;height:9px;background:#00ff00"></div>
<div style="position:absolute;left:1377px;top:578px;width:9px;height:9px;background:#787878"></div>
<div style="position:absolute;left:1333px;top:591px;width:9px;height:9px;background:#787878"></div>
<div style="position:absolute;left:1344px;top:591px;width:9px;height:9px;background:#787878"></div>
<div style="position:absolute;left:1355px;top:591px;width:9px;height:9px;background:#787878"></div>
<div style="position:absolute;left:1366px;top:591px;width:9px;height:9px;background:#787878"></div>
<div style="position:absolute;left:1377px;top:591px;width:9px;height:9px;background:#787878"></div>
<div style="position:absolute;left:1333px;top:604px;width:9px;height:9px;background:#787878"></div>
<div style="position:absolute;left:1344px;top:604px;width:9px;height:9px;background:#787878"></div>
<div style="position:absolute;left:1355px;top:604px;width:9px;height:9px;background:#787878"></div>
<div style="position:absolute;left:1366px;top:604px;width:9px;height:9px;background:#787878"></div>
<div style="position:absolute;left:1377px;top:604px;width:9px;height:9px;background:#787878"></div>
<div class="t" style="left:1196px;top:542px;font-size:8px;font-weight:bold;color:#ffff00;word-spacing:0"><span style="position:absolute;left:-1px">10</span><span style="position:absolute;left:11px">9</span><span style="position:absolute;left:22px">8</span><span style="position:absolute;left:33px">7</span><span style="position:absolute;left:44px">6</span><span style="position:absolute;left:55px">5</span><span style="position:absolute;left:66px">4</span><span style="position:absolute;left:77px">3</span><span style="position:absolute;left:88px">2</span><span style="position:absolute;left:99px">1</span></div>
<div class="t" style="right:247px;top:553px;font-size:9px;font-weight:bold;color:#e0e0e0">M5</div>
<div class="t" style="right:247px;top:566px;font-size:9px;font-weight:bold;color:#e0e0e0">M15</div>
<div class="t" style="right:247px;top:579px;font-size:9px;font-weight:bold;color:#e0e0e0">H1</div>
<div class="t" style="right:247px;top:592px;font-size:9px;font-weight:bold;color:#e0e0e0">H4</div>
<div class="t" style="right:247px;top:605px;font-size:9px;font-weight:bold;color:#e0e0e0">D1</div>
<div class="t" style="right:113px;top:552px;font-size:11px;color:#c8c8c8">7</div>
<div class="t" style="right:113px;top:565px;font-size:11px;color:#c8c8c8">21</div>
<div class="t" style="right:113px;top:578px;font-size:11px;color:#c8c8c8">42</div>
<div class="t" style="right:113px;top:591px;font-size:11px;color:#c8c8c8">89</div>
<div class="t" style="right:113px;top:604px;font-size:11px;color:#c8c8c8">144</div>
<div class="t" style="left:1398px;top:100px;font-size:10px;color:#8d9cac;font-weight:normal;font-family:'Liberation Sans';letter-spacing:-0.5px">1.37040</div>
<div class="t" style="left:1398px;top:133px;font-size:10px;color:#8d9cac;font-weight:normal;font-family:'Liberation Sans';letter-spacing:-0.5px">1.36410</div>
<div class="t" style="left:1398px;top:166px;font-size:10px;color:#8d9cac;font-weight:normal;font-family:'Liberation Sans';letter-spacing:-0.5px">1.35780</div>
<div class="t" style="left:1398px;top:199px;font-size:10px;color:#8d9cac;font-weight:normal;font-family:'Liberation Sans';letter-spacing:-0.5px">1.35150</div>
<div class="t" style="left:1398px;top:232px;font-size:10px;color:#8d9cac;font-weight:normal;font-family:'Liberation Sans';letter-spacing:-0.5px">1.34520</div>
<div class="t" style="left:1398px;top:265px;font-size:10px;color:#8d9cac;font-weight:normal;font-family:'Liberation Sans';letter-spacing:-0.5px">1.33890</div>
<div class="t" style="left:1398px;top:298px;font-size:10px;color:#8d9cac;font-weight:normal;font-family:'Liberation Sans';letter-spacing:-0.5px">1.33260</div>
<div class="t" style="left:1398px;top:397px;font-size:10px;color:#8d9cac;font-weight:normal;font-family:'Liberation Sans';letter-spacing:-0.5px">1.31385</div>
<div class="t" style="left:1398px;top:496px;font-size:10px;color:#8d9cac;font-weight:normal;font-family:'Liberation Sans';letter-spacing:-0.5px">1.29495</div>
<div style="position:absolute;left:1395px;top:361px;width:39px;height:11px;background:#778899"></div>
<div class="t" style="left:1397px;top:362px;font-size:10px;color:#000;font-weight:normal;font-family:'Liberation Sans';letter-spacing:-0.5px">1.32056</div>
<div class="t" style="left:1398px;top:333px;font-size:10px;color:#556070;font-weight:normal;font-family:'Liberation Sans';">-.----</div>
<div class="t" style="left:1398px;top:432px;font-size:10px;color:#556070;font-weight:normal;font-family:'Liberation Sans';letter-spacing:-0.5px">1.30?35</div>
<div class="t" style="left:1396px;top:509px;font-size:10px;color:#8d9cac;font-weight:normal;font-family:'Liberation Sans';">2</div>
<div class="t" style="left:1396px;top:527px;font-size:10px;color:#8d9cac;font-weight:normal;font-family:'Liberation Sans';">1</div>
<div class="t" style="left:1396px;top:543px;font-size:10px;color:#8d9cac;font-weight:normal;font-family:'Liberation Sans';">2</div>
<div class="t" style="left:1396px;top:550px;font-size:10px;color:#8d9cac;font-weight:normal;font-family:'Liberation Sans';">85</div>
<div class="t" style="left:1396px;top:607px;font-size:10px;color:#8d9cac;font-weight:normal;font-family:'Liberation Sans';">15</div>
<div class="t" style="left:1396px;top:614px;font-size:10px;color:#8d9cac;font-weight:normal;font-family:'Liberation Sans';">1</div>
<div class="t" style="left:1396px;top:629px;font-size:10px;color:#8d9cac;font-weight:normal;font-family:'Liberation Sans';">2</div>
<div class="t" style="left:1396px;top:635px;font-size:10px;color:#8d9cac;font-weight:normal;font-family:'Liberation Sans';">85</div>
<div class="t" style="left:1396px;top:690px;font-size:10px;color:#8d9cac;font-weight:normal;font-family:'Liberation Sans';">15</div>
<div class="t" style="left:1396px;top:696px;font-size:10px;color:#8d9cac;font-weight:normal;font-family:'Liberation Sans';">1</div>
<div class="t" style="left:1396px;top:711px;font-size:10px;color:#8d9cac;font-weight:normal;font-family:'Liberation Sans';">2</div>
<div class="t" style="left:1396px;top:723px;font-size:10px;color:#8d9cac;font-weight:normal;font-family:'Liberation Sans';">85</div>
<div class="t" style="left:1396px;top:782px;font-size:10px;color:#8d9cac;font-weight:normal;font-family:'Liberation Sans';">15</div>
<div class="t" style="left:1396px;top:793px;font-size:10px;color:#8d9cac;font-weight:normal;font-family:'Liberation Sans';">1</div>
<div class="t" style="left:1396px;top:809px;font-size:10px;color:#8d9cac;font-weight:normal;font-family:'Liberation Sans';">2</div>
<div class="t" style="left:1396px;top:823px;font-size:10px;color:#8d9cac;font-weight:normal;font-family:'Liberation Sans';">1</div>
<div class="t" style="left:4px;top:839px;font-size:10px;color:#9aa6b4;font-weight:normal;font-family:'Liberation Sans';letter-spacing:-0.3px">30 May 2022</div>
<div class="t" style="left:68px;top:839px;font-size:10px;color:#9aa6b4;font-weight:normal;font-family:'Liberation Sans';letter-spacing:-0.3px">2 Jun 00:00</div>
<div class="t" style="left:132px;top:839px;font-size:10px;color:#9aa6b4;font-weight:normal;font-family:'Liberation Sans';letter-spacing:-0.3px">6 Jun 16:00</div>
<div class="t" style="left:196px;top:839px;font-size:10px;color:#9aa6b4;font-weight:normal;font-family:'Liberation Sans';letter-spacing:-0.3px">9 Jun 08:00</div>
<div class="t" style="left:260px;top:839px;font-size:10px;color:#9aa6b4;font-weight:normal;font-family:'Liberation Sans';letter-spacing:-0.3px">14 Jun 00:00</div>
<div class="t" style="left:324px;top:839px;font-size:10px;color:#9aa6b4;font-weight:normal;font-family:'Liberation Sans';letter-spacing:-0.3px">16 Jun 16:00</div>
<div class="t" style="left:388px;top:839px;font-size:10px;color:#9aa6b4;font-weight:normal;font-family:'Liberation Sans';letter-spacing:-0.3px">21 Jun 08:00</div>
<div class="t" style="left:452px;top:839px;font-size:10px;color:#9aa6b4;font-weight:normal;font-family:'Liberation Sans';letter-spacing:-0.3px">24 Jun 00:00</div>
<div class="t" style="left:516px;top:839px;font-size:10px;color:#9aa6b4;font-weight:normal;font-family:'Liberation Sans';letter-spacing:-0.3px">28 Jun 16:00</div>
<div class="t" style="left:580px;top:839px;font-size:10px;color:#9aa6b4;font-weight:normal;font-family:'Liberation Sans';letter-spacing:-0.3px">1 Jul 08:00</div>
<div class="t" style="left:644px;top:839px;font-size:10px;color:#9aa6b4;font-weight:normal;font-family:'Liberation Sans';letter-spacing:-0.3px">6 Jul 00:00</div>
<div class="t" style="left:708px;top:839px;font-size:10px;color:#9aa6b4;font-weight:normal;font-family:'Liberation Sans';letter-spacing:-0.3px">8 Jul 16:00</div>
<div class="t" style="left:772px;top:839px;font-size:10px;color:#9aa6b4;font-weight:normal;font-family:'Liberation Sans';letter-spacing:-0.3px">13 Jul 08:00</div>
<div class="t" style="left:836px;top:839px;font-size:10px;color:#9aa6b4;font-weight:normal;font-family:'Liberation Sans';letter-spacing:-0.3px">18 Jul 00:00</div>
<div class="t" style="left:900px;top:839px;font-size:10px;color:#9aa6b4;font-weight:normal;font-family:'Liberation Sans';letter-spacing:-0.3px">20 Jul 16:00</div>
<div class="t" style="left:964px;top:839px;font-size:10px;color:#9aa6b4;font-weight:normal;font-family:'Liberation Sans';letter-spacing:-0.3px">25 Jul 08:00</div>
<div class="t" style="left:1028px;top:839px;font-size:10px;color:#9aa6b4;font-weight:normal;font-family:'Liberation Sans';letter-spacing:-0.3px">28 Jul 00:00</div>
<div class="t" style="left:1092px;top:839px;font-size:10px;color:#9aa6b4;font-weight:normal;font-family:'Liberation Sans';letter-spacing:-0.3px">1 Aug 16:00</div>
<div style="position:absolute;left:0;top:855px;width:1440px;height:1px;background:#404040"></div>
<div style="position:absolute;left:0;top:856px;width:1440px;height:1px;background:#ffffff"></div>
<div style="position:absolute;left:0;top:857px;width:1440px;height:20px;background:#d6d6d6"></div>
<div style="position:absolute;left:0;top:857px;width:2px;height:19px;background:#808080"></div>
<div style="position:absolute;left:166px;top:856px;width:80px;height:20px;background:#fff;border-right:1px solid #000;border-bottom:1px solid #000;box-sizing:border-box"></div>
<div style="position:absolute;left:87px;top:861px;width:1px;height:12px;background:#404040"></div>
<div class="st" style="left:16px;top:859px;color:#4a4a4a">GBPAUD,H4</div>
<div class="st" style="left:96px;top:859px;color:#4a4a4a">USDCHF,H1</div>
<div class="st" style="left:176px;top:859px;color:#000">EURCAD,H4</div>
<svg style="position:absolute;left:1400px;top:861px" width="40" height="10"><path d="M12 1l-4 4 4 4z" fill="#a0a0a0"/><path d="M26 1l4 4-4 4z" fill="#a0a0a0"/></svg>
<div style="position:absolute;left:0;top:877px;width:1440px;height:1px;background:#ffffff"></div>
<div style="position:absolute;left:0;top:878px;width:1440px;height:22px;background:#d6d6d6"></div>
<div style="position:absolute;left:742px;top:880px;width:1px;height:20px;background:#808080"></div>
<div style="position:absolute;left:743px;top:880px;width:1px;height:20px;background:#fff"></div>
<div style="position:absolute;left:851px;top:880px;width:1px;height:20px;background:#808080"></div>
<div style="position:absolute;left:852px;top:880px;width:1px;height:20px;background:#fff"></div>
<div style="position:absolute;left:952px;top:880px;width:1px;height:20px;background:#808080"></div>
<div style="position:absolute;left:953px;top:880px;width:1px;height:20px;background:#fff"></div>
<div style="position:absolute;left:1024px;top:880px;width:1px;height:20px;background:#808080"></div>
<div style="position:absolute;left:1025px;top:880px;width:1px;height:20px;background:#fff"></div>
<div style="position:absolute;left:1095px;top:880px;width:1px;height:20px;background:#808080"></div>
<div style="position:absolute;left:1096px;top:880px;width:1px;height:20px;background:#fff"></div>
<div style="position:absolute;left:1164px;top:880px;width:1px;height:20px;background:#808080"></div>
<div style="position:absolute;left:1165px;top:880px;width:1px;height:20px;background:#fff"></div>
<div style="position:absolute;left:1235px;top:880px;width:1px;height:20px;background:#808080"></div>
<div style="position:absolute;left:1236px;top:880px;width:1px;height:20px;background:#fff"></div>
<div style="position:absolute;left:1301px;top:880px;width:1px;height:20px;background:#808080"></div>
<div style="position:absolute;left:1302px;top:880px;width:1px;height:20px;background:#fff"></div>
<div class="st" style="left:2px;top:884px;color:#000">For Help, press F1</div>
<div class="st" style="left:747px;top:884px;color:#000">NMTB</div>
<div class="st" style="left:857px;top:884px;color:#000">2022.06.22 00:00</div>
<div class="st" style="left:957px;top:884px;color:#000">O: 1.35962</div>
<div class="st" style="left:1029px;top:884px;color:#000">H: 1.36231</div>
<div class="st" style="left:1100px;top:884px;color:#000">L: 1.35899</div>
<div class="st" style="left:1169px;top:884px;color:#000">C: 1.36088</div>
<div class="st" style="left:1240px;top:884px;color:#000">V: 17527</div>
<div class="st" style="left:1334px;top:884px;color:#000">2451/12 kb</div>
<svg style="position:absolute;left:1306px;top:882px" width="26" height="15"><rect x="1" y="1" width="2" height="6" fill="#5a9a20"/><rect x="1" y="7" width="2" height="7" fill="#1a4a80"/><rect x="4" y="1" width="2" height="6" fill="#5a9a20"/><rect x="4" y="7" width="2" height="7" fill="#1a4a80"/><rect x="7" y="1" width="2" height="6" fill="#5a9a20"/><rect x="7" y="7" width="2" height="7" fill="#1a4a80"/><rect x="10" y="1" width="2" height="6" fill="#5a9a20"/><rect x="10" y="7" width="2" height="7" fill="#1a4a80"/><rect x="13" y="1" width="2" height="6" fill="#5a9a20"/><rect x="13" y="7" width="2" height="7" fill="#1a4a80"/><rect x="16" y="1" width="2" height="6" fill="#5a9a20"/><rect x="16" y="7" width="2" height="7" fill="#1a4a80"/><rect x="19" y="1" width="2" height="6" fill="#5a9a20"/><rect x="19" y="7" width="2" height="7" fill="#1a4a80"/><rect x="22" y="1" width="2" height="6" fill="#5a9a20"/><rect x="22" y="7" width="2" height="7" fill="#1a4a80"/></svg>
<svg style="position:absolute;left:1424px;top:884px" width="16" height="16"><path d="M15 3L3 15 M15 7L7 15 M15 11L11 15" stroke="#909090"/><path d="M15 4L4 15 M15 8L8 15 M15 12L12 15" stroke="#fff"/></svg>
</body></html>
